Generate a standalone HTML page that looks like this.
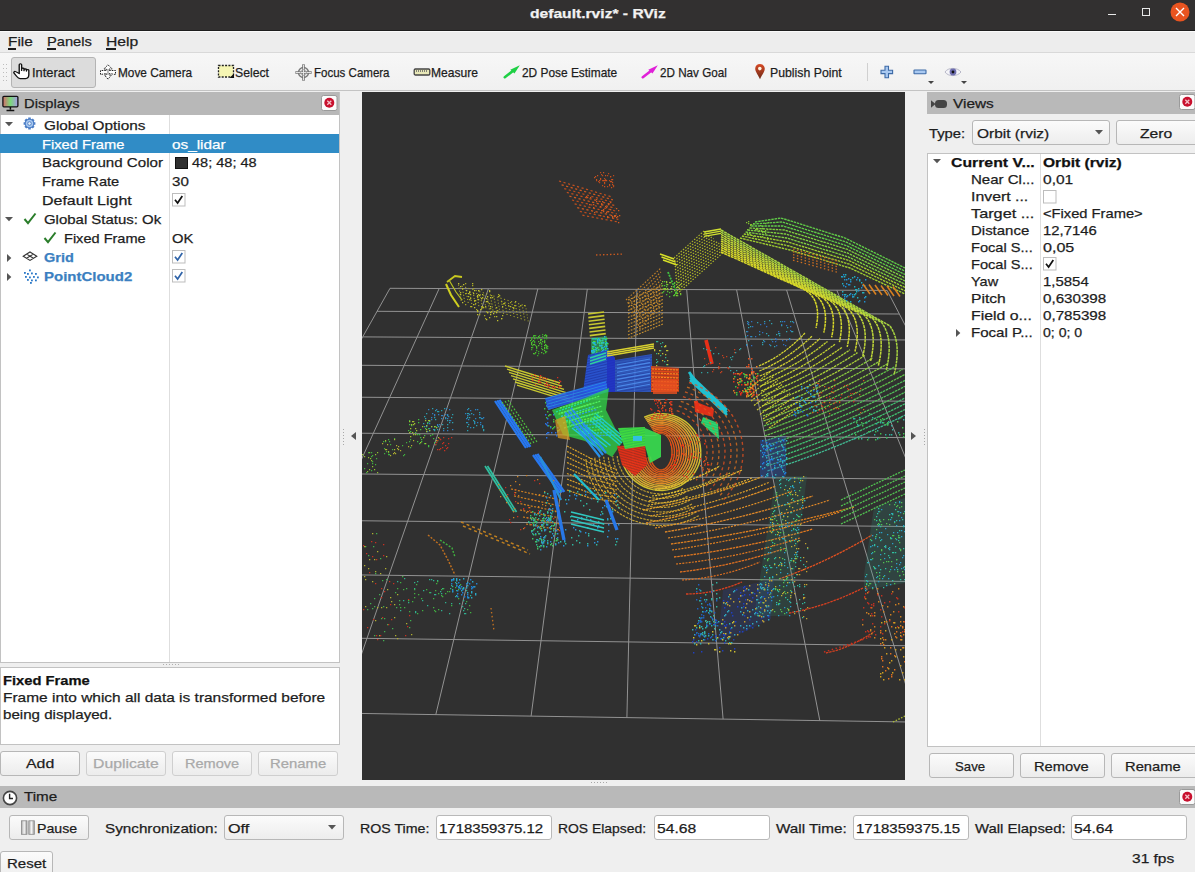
<!DOCTYPE html><html><head><meta charset="utf-8"><style>
html,body{margin:0;padding:0;width:1195px;height:872px;overflow:hidden;background:#efefef}
.a{position:absolute;display:block}
.t{position:absolute;white-space:pre;line-height:1;font-family:"Liberation Sans",sans-serif;transform-origin:0 0;-webkit-text-stroke:0.25px currentColor}
</style></head><body>
<div class="a" style="left:0px;top:0px;width:1195px;height:31px;background:#323030"></div>
<div class="a" style="left:0px;top:30px;width:1195px;height:1px;background:#1e1e1e"></div>
<span class="t" style="left:529.9px;top:7.0px;font-size:13.5px;transform:scaleX(1.157);color:#f2f2f2;font-weight:bold;">default.rviz* - RViz</span>
<div class="a" style="left:1108px;top:14px;width:8px;height:1px;background:#e8e8e8"></div>
<div class="a" style="left:1142px;top:8px;width:8px;height:8px;border:1px solid #e8e8e8;box-sizing:border-box"></div>
<svg class="a" style="left:1170px;top:2px;" width="20" height="20" viewBox="0 0 20 20"><circle cx="10" cy="10" r="9.5" fill="#e95420"/><path d="M6 6L14 14M14 6L6 14" stroke="#fff" stroke-width="1.4"/></svg>
<div class="a" style="left:0px;top:31px;width:1195px;height:21px;background:#ededed"></div>
<div class="a" style="left:0px;top:31px;width:1195px;height:1px;background:#fafafa"></div>
<div class="a" style="left:0px;top:52px;width:1195px;height:1px;background:#d9d9d9"></div>
<span class="t" style="left:7.7px;top:35.4px;font-size:13.5px;transform:scaleX(1.137);color:#1d1d1d;">File</span>
<span class="t" style="left:46.7px;top:35.4px;font-size:13.5px;transform:scaleX(1.085);color:#1d1d1d;">Panels</span>
<span class="t" style="left:105.6px;top:35.4px;font-size:13.5px;transform:scaleX(1.162);color:#1d1d1d;">Help</span>
<div class="a" style="left:8px;top:48px;width:8px;height:2px;background:#1d1d1d"></div>
<div class="a" style="left:47px;top:48px;width:9px;height:2px;background:#1d1d1d"></div>
<div class="a" style="left:106px;top:48px;width:10px;height:2px;background:#1d1d1d"></div>
<div class="a" style="left:0px;top:53px;width:1195px;height:37px;background:linear-gradient(#f7f7f7,#f0f0f0)"></div>
<div class="a" style="left:0px;top:90px;width:1195px;height:1px;background:#c3c3c3"></div>
<div class="a" style="left:3px;top:64px;width:1px;height:1px;background:#bdbdbd"></div>
<div class="a" style="left:3px;top:68px;width:1px;height:1px;background:#bdbdbd"></div>
<div class="a" style="left:3px;top:72px;width:1px;height:1px;background:#bdbdbd"></div>
<div class="a" style="left:3px;top:76px;width:1px;height:1px;background:#bdbdbd"></div>
<div class="a" style="left:3px;top:80px;width:1px;height:1px;background:#bdbdbd"></div>
<div class="a" style="left:6px;top:64px;width:1px;height:1px;background:#bdbdbd"></div>
<div class="a" style="left:6px;top:68px;width:1px;height:1px;background:#bdbdbd"></div>
<div class="a" style="left:6px;top:72px;width:1px;height:1px;background:#bdbdbd"></div>
<div class="a" style="left:6px;top:76px;width:1px;height:1px;background:#bdbdbd"></div>
<div class="a" style="left:6px;top:80px;width:1px;height:1px;background:#bdbdbd"></div>
<div class="a" style="left:11px;top:57px;width:85px;height:31px;background:#dcdcdc;border:1px solid #b4b4b4;border-radius:3px;box-sizing:border-box"></div>
<span class="t" style="left:31.6px;top:66.2px;font-size:13px;transform:scaleX(0.988);color:#1d1d1d;">Interact</span>
<span class="t" style="left:117.9px;top:66.2px;font-size:13px;transform:scaleX(0.908);color:#1d1d1d;">Move Camera</span>
<span class="t" style="left:235.4px;top:66.2px;font-size:13px;transform:scaleX(0.940);color:#1d1d1d;">Select</span>
<span class="t" style="left:313.8px;top:66.2px;font-size:13px;transform:scaleX(0.886);color:#1d1d1d;">Focus Camera</span>
<span class="t" style="left:431.4px;top:66.2px;font-size:13px;transform:scaleX(0.929);color:#1d1d1d;">Measure</span>
<span class="t" style="left:521.8px;top:66.2px;font-size:13px;transform:scaleX(0.915);color:#1d1d1d;">2D Pose Estimate</span>
<span class="t" style="left:659.9px;top:66.2px;font-size:13px;transform:scaleX(0.898);color:#1d1d1d;">2D Nav Goal</span>
<span class="t" style="left:769.7px;top:66.2px;font-size:13px;transform:scaleX(0.945);color:#1d1d1d;">Publish Point</span>
<div class="a" style="left:867px;top:63px;width:1px;height:18px;background:#d0d0d0"></div>
<svg class="a" style="left:13px;top:63px;" width="18" height="18" viewBox="0 0 18 18"><path transform="translate(-0.5 -0.5) scale(1.2 0.98)" d="M5.6 2.2C5.6 0.9 7.6 0.9 7.6 2.2V8.2V6.6C7.6 5.5 9.6 5.5 9.6 6.6V8.4V7.3C9.6 6.3 11.6 6.3 11.6 7.3V8.8V8C11.6 7.1 13.6 7.1 13.6 8V12.6C13.6 14.8 12.6 16.4 10.8 16.4H6.4C5 16.4 4.3 15.4 3.4 14L1.3 10.8C0.7 9.9 1.6 8.7 2.6 9.3L5.6 11.3Z" fill="#fff" stroke="#111" stroke-width="1.15" stroke-linejoin="round"/></svg>
<svg class="a" style="left:100px;top:64px;" width="16" height="16" viewBox="0 0 16 16"><path d="M8 0.8L12.2 5H9.2V6.5H15.5V10.5L9.2 9.5V11H11.5L8 15.2L4.5 11H6.8V9.5L0.5 10.5V6.5H6.8V5H3.8Z" fill="#fff" stroke="#222" stroke-width="1" stroke-dasharray="1.6 1"/><rect x="7" y="5" width="2" height="6" fill="#bbb"/></svg>
<svg class="a" style="left:217px;top:64px;" width="18" height="15" viewBox="0 0 18 15"><rect x="1.5" y="1.5" width="15" height="11.5" fill="#f6f6b4" stroke="#222" stroke-width="1.3" stroke-dasharray="2 1.3"/><path d="M17 9.5V14H12.5Z" fill="#111"/></svg>
<svg class="a" style="left:294px;top:63px;" width="19" height="19" viewBox="0 0 19 19"><circle cx="9.5" cy="9.5" r="5" fill="#fff" stroke="#777" stroke-width="1.4"/><path d="M9.5 1.3V17.7M1.3 9.5H17.7" stroke="#777" stroke-width="2.6"/><path d="M9.5 1.8V17.2M1.8 9.5H17.2" stroke="#eee" stroke-width="0.9"/><circle cx="9.5" cy="9.5" r="3" fill="none" stroke="#999" stroke-width="0.8"/></svg>
<svg class="a" style="left:413px;top:68px;" width="18" height="8" viewBox="0 0 18 8"><rect x="1.2" y="1" width="15.6" height="6" rx="1.2" fill="#e8e8b8" stroke="#444" stroke-width="1.3"/><path d="M3.5 2v2M5.5 2v2M7.5 2v2M9.5 2v2M11.5 2v2M13.5 2v2" stroke="#666" stroke-width="0.8"/></svg>
<svg class="a" style="left:503px;top:64px;" width="18" height="15" viewBox="0 0 18 15"><path d="M1.8 13.2L10.5 6.5" stroke="#1ed045" stroke-width="2.6" stroke-linecap="round"/><path d="M16.8 1.2L7.3 5.8L11.5 9.5Z" fill="#1ed045"/></svg>
<svg class="a" style="left:641px;top:64px;" width="18" height="15" viewBox="0 0 18 15"><path d="M1.8 13.2L10.5 6.5" stroke="#e020d8" stroke-width="2.6" stroke-linecap="round"/><path d="M16.8 1.2L7.3 5.8L11.5 9.5Z" fill="#e020d8"/></svg>
<svg class="a" style="left:754px;top:63px;" width="12" height="17" viewBox="0 0 12 17"><defs><linearGradient id="pg" x1="0" y1="0" x2="0" y2="1"><stop offset="0" stop-color="#d84a26"/><stop offset="1" stop-color="#6a2a18"/></linearGradient></defs><path d="M6 1C3.2 1 1.2 3 1.2 5.8C1.2 9 4.8 13 6 16.3C7.2 13 10.8 9 10.8 5.8C10.8 3 8.8 1 6 1Z" fill="url(#pg)"/><circle cx="5.8" cy="5.6" r="1.8" fill="#fff4e0"/></svg>
<svg class="a" style="left:880px;top:65px;" width="14" height="14" viewBox="0 0 14 14"><path d="M5 1.2H8.5V5.2H12.6V8.6H8.5V12.7H5V8.6H1V5.2H5Z" fill="#a9c9f1" stroke="#3d6aa6" stroke-width="1.1"/></svg>
<svg class="a" style="left:913px;top:69px;" width="14" height="6" viewBox="0 0 14 6"><rect x="1" y="1" width="12" height="3.8" rx="0.6" fill="#a9c9f1" stroke="#3d6aa6" stroke-width="1.1"/></svg>
<svg class="a" style="left:928px;top:81px;" width="7" height="4" viewBox="0 0 7 4"><path d="M0 0H6L3 3Z" fill="#444"/></svg>
<svg class="a" style="left:944px;top:66px;" width="18" height="12" viewBox="0 0 18 12"><path d="M1 6C4 1.2 13.5 1.2 17 6C13.5 10.8 4 10.8 1 6Z" fill="#f4f4f8" stroke="#b8b8c8" stroke-width="1"/><circle cx="9" cy="6" r="3.4" fill="#6f6fb0"/><circle cx="9" cy="6" r="1.4" fill="#111"/></svg>
<svg class="a" style="left:961px;top:81px;" width="7" height="4" viewBox="0 0 7 4"><path d="M0 0H6L3 3Z" fill="#444"/></svg>
<div class="a" style="left:0px;top:91px;width:1195px;height:781px;background:#efefef"></div>
<div class="a" style="left:0px;top:92px;width:340px;height:23px;background:#b8b8b8"></div>
<span class="t" style="left:23.8px;top:97.2px;font-size:13.5px;transform:scaleX(1.091);color:#1d1d1d;">Displays</span>
<div class="a" style="left:0px;top:115px;width:340px;height:548px;background:#fff;border:1px solid #c2c2c2;border-top:none;box-sizing:border-box"></div>
<div class="a" style="left:169px;top:115px;width:1px;height:547px;background:#dedede"></div>
<div class="a" style="left:0px;top:134px;width:339px;height:19px;background:#308cc6"></div>
<span class="t" style="left:43.7px;top:118.5px;font-size:13.5px;transform:scaleX(1.135);color:#1d1d1d;">Global Options</span>
<span class="t" style="left:41.8px;top:137.5px;font-size:13.5px;transform:scaleX(1.086);color:#ffffff;">Fixed Frame</span>
<span class="t" style="left:171.6px;top:137.5px;font-size:13.5px;transform:scaleX(1.134);color:#ffffff;">os_lidar</span>
<span class="t" style="left:41.7px;top:156.2px;font-size:13.5px;transform:scaleX(1.119);color:#1d1d1d;">Background Color</span>
<span class="t" style="left:191.8px;top:156.2px;font-size:13.5px;transform:scaleX(1.077);color:#1d1d1d;">48; 48; 48</span>
<span class="t" style="left:41.8px;top:175.4px;font-size:13.5px;transform:scaleX(1.084);color:#1d1d1d;">Frame Rate</span>
<span class="t" style="left:171.6px;top:175.4px;font-size:13.5px;transform:scaleX(1.119);color:#1d1d1d;">30</span>
<span class="t" style="left:41.7px;top:194.2px;font-size:13.5px;transform:scaleX(1.184);color:#1d1d1d;">Default Light</span>
<span class="t" style="left:43.8px;top:213.2px;font-size:13.5px;transform:scaleX(1.107);color:#1d1d1d;">Global Status: Ok</span>
<span class="t" style="left:64.1px;top:232.2px;font-size:13.5px;transform:scaleX(1.078);color:#1d1d1d;">Fixed Frame</span>
<span class="t" style="left:171.7px;top:232.2px;font-size:13.5px;transform:scaleX(1.091);color:#1d1d1d;">OK</span>
<span class="t" style="left:44.0px;top:251.0px;font-size:13.5px;transform:scaleX(1.076);color:#3b7fc1;font-weight:bold;">Grid</span>
<span class="t" style="left:44.0px;top:270.1px;font-size:13.5px;transform:scaleX(1.110);color:#3b7fc1;font-weight:bold;">PointCloud2</span>
<svg class="a" style="left:2px;top:95px;" width="17" height="17" viewBox="0 0 17 17"><defs><linearGradient id="mg" x1="0" x2="1"><stop offset="0" stop-color="#d46a6a"/><stop offset="0.5" stop-color="#7ad87a"/><stop offset="1" stop-color="#a898e8"/></linearGradient></defs><rect x="0.9" y="1.3" width="15" height="10.5" rx="1" fill="url(#mg)" stroke="#111" stroke-width="1.3"/><path d="M8.4 12V14.5M4.5 15.6H12.3" stroke="#111" stroke-width="1.5"/></svg>
<svg class="a" style="left:5px;top:122px;" width="8" height="5" viewBox="0 0 8 5"><path d="M0 0H8L4 4.2Z" fill="#555"/></svg>
<svg class="a" style="left:5px;top:217px;" width="8" height="5" viewBox="0 0 8 5"><path d="M0 0H8L4 4.2Z" fill="#555"/></svg>
<svg class="a" style="left:7px;top:254px;" width="5" height="8" viewBox="0 0 5 8"><path d="M0 0V8L4.3 4Z" fill="#555"/></svg>
<svg class="a" style="left:7px;top:273px;" width="5" height="8" viewBox="0 0 5 8"><path d="M0 0V8L4.3 4Z" fill="#555"/></svg>
<svg class="a" style="left:22px;top:116px;" width="15" height="15" viewBox="0 0 15 15"><g transform="translate(7.5 7.5)"><path d="M5.90 0.00L4.20 0.00 M4.17 4.17L2.97 2.97 M0.00 5.90L0.00 4.20 M-4.17 4.17L-2.97 2.97 M-5.90 0.00L-4.20 0.00 M-4.17 -4.17L-2.97 -2.97 M-0.00 -5.90L-0.00 -4.20 M4.17 -4.17L2.97 -2.97" stroke="#5080c8" stroke-width="2.6"/><circle r="4.3" fill="#a8c8f0" stroke="#4a7cc4" stroke-width="1.1"/><circle r="1.8" fill="#eaf2fc" stroke="#4a7cc4" stroke-width="0.9"/></g></svg>
<svg class="a" style="left:23px;top:212px;" width="14" height="13" viewBox="0 0 14 13"><path d="M1.5 7L5 11.2L12.5 1.5" fill="none" stroke="#2a7d2a" stroke-width="2"/></svg>
<svg class="a" style="left:43px;top:231px;" width="14" height="13" viewBox="0 0 14 13"><path d="M1.5 7L5 11.2L12.5 1.5" fill="none" stroke="#2a7d2a" stroke-width="2"/></svg>
<svg class="a" style="left:22px;top:251px;" width="16" height="11" viewBox="0 0 16 11"><path d="M8 1L14.8 5.2L8 9.4L1.2 5.2Z M4.6 3.1L11.4 7.3 M11.4 3.1L4.6 7.3" fill="none" stroke="#333" stroke-width="1.1"/></svg>
<svg class="a" style="left:23px;top:269px;" width="16" height="15" viewBox="0 0 16 15"><rect x="6" y="0.5" width="1.8" height="1.8" fill="#2a78c8"/><rect x="1" y="3" width="1.8" height="1.8" fill="#2a78c8"/><rect x="4" y="4" width="1.8" height="1.8" fill="#2a78c8"/><rect x="8" y="3.5" width="1.8" height="1.8" fill="#2a78c8"/><rect x="12" y="4" width="1.8" height="1.8" fill="#2a78c8"/><rect x="2" y="7" width="1.8" height="1.8" fill="#2a78c8"/><rect x="6" y="7.5" width="1.8" height="1.8" fill="#2a78c8"/><rect x="10" y="7" width="1.8" height="1.8" fill="#2a78c8"/><rect x="14" y="7.5" width="1.8" height="1.8" fill="#2a78c8"/><rect x="4" y="10" width="1.8" height="1.8" fill="#2a78c8"/><rect x="8" y="10.5" width="1.8" height="1.8" fill="#2a78c8"/><rect x="12" y="10.5" width="1.8" height="1.8" fill="#2a78c8"/><rect x="7" y="13" width="1.8" height="1.8" fill="#2a78c8"/></svg>
<svg class="a" style="left:172px;top:193px;" width="14" height="14" viewBox="0 0 14 14"><rect x="0.5" y="0.5" width="12.5" height="12.5" fill="#fff" stroke="#bdbdbd" stroke-width="1"/><path d="M3 6.8L5.6 10L10.3 3" fill="none" stroke="#111" stroke-width="1.7"/></svg>
<svg class="a" style="left:172px;top:250px;" width="14" height="14" viewBox="0 0 14 14"><rect x="0.5" y="0.5" width="12.5" height="12.5" fill="#fff" stroke="#bdbdbd" stroke-width="1"/><path d="M3 6.8L5.6 10L10.3 3" fill="none" stroke="#2f63a8" stroke-width="1.7"/></svg>
<svg class="a" style="left:172px;top:269px;" width="14" height="14" viewBox="0 0 14 14"><rect x="0.5" y="0.5" width="12.5" height="12.5" fill="#fff" stroke="#bdbdbd" stroke-width="1"/><path d="M3 6.8L5.6 10L10.3 3" fill="none" stroke="#2f63a8" stroke-width="1.7"/></svg>
<div class="a" style="left:175px;top:157px;width:13px;height:12px;background:#303030;border:1px solid #111;box-sizing:border-box"></div>
<div class="a" style="left:163px;top:664px;width:1px;height:1px;background:#b0b0b0"></div>
<div class="a" style="left:166px;top:664px;width:1px;height:1px;background:#b0b0b0"></div>
<div class="a" style="left:169px;top:664px;width:1px;height:1px;background:#b0b0b0"></div>
<div class="a" style="left:172px;top:664px;width:1px;height:1px;background:#b0b0b0"></div>
<div class="a" style="left:175px;top:664px;width:1px;height:1px;background:#b0b0b0"></div>
<div class="a" style="left:178px;top:664px;width:1px;height:1px;background:#b0b0b0"></div>
<div class="a" style="left:0px;top:667px;width:340px;height:78px;background:#fff;border:1px solid #c2c2c2;box-sizing:border-box"></div>
<span class="t" style="left:2.8px;top:674.2px;font-size:13.5px;transform:scaleX(1.090);color:#111;font-weight:bold;">Fixed Frame</span>
<span class="t" style="left:2.7px;top:691.2px;font-size:13.5px;transform:scaleX(1.145);color:#1d1d1d;">Frame into which all data is transformed before</span>
<span class="t" style="left:2.7px;top:707.9px;font-size:13.5px;transform:scaleX(1.119);color:#1d1d1d;">being displayed.</span>
<div class="a" style="left:0px;top:751px;width:80px;height:25px;background:linear-gradient(#fbfbfb,#ececec);border:1px solid #b7b7b7;border-radius:3px;box-sizing:border-box"></div>
<span class="t" style="left:25.7px;top:757.1px;font-size:13.5px;transform:scaleX(1.177);color:#1d1d1d;">Add</span>
<div class="a" style="left:86px;top:751px;width:80px;height:25px;background:linear-gradient(#fbfbfb,#ececec);border:1px solid #cfcfcf;border-radius:3px;box-sizing:border-box"></div>
<span class="t" style="left:92.7px;top:757.1px;font-size:13.5px;transform:scaleX(1.168);color:#a9a9a9;">Duplicate</span>
<div class="a" style="left:172px;top:751px;width:80px;height:25px;background:linear-gradient(#fbfbfb,#ececec);border:1px solid #cfcfcf;border-radius:3px;box-sizing:border-box"></div>
<span class="t" style="left:184.8px;top:757.1px;font-size:13.5px;transform:scaleX(1.077);color:#a9a9a9;">Remove</span>
<div class="a" style="left:258px;top:751px;width:80px;height:25px;background:linear-gradient(#fbfbfb,#ececec);border:1px solid #cfcfcf;border-radius:3px;box-sizing:border-box"></div>
<span class="t" style="left:269.8px;top:757.1px;font-size:13.5px;transform:scaleX(1.101);color:#a9a9a9;">Rename</span>
<div class="a" style="left:339px;top:92px;width:1px;height:571px;background:#c2c2c2"></div>
<div class="a" style="left:343px;top:429px;width:1px;height:1px;background:#a8a8a8"></div>
<div class="a" style="left:343px;top:432px;width:1px;height:1px;background:#a8a8a8"></div>
<div class="a" style="left:343px;top:435px;width:1px;height:1px;background:#a8a8a8"></div>
<div class="a" style="left:343px;top:438px;width:1px;height:1px;background:#a8a8a8"></div>
<div class="a" style="left:343px;top:441px;width:1px;height:1px;background:#a8a8a8"></div>
<div class="a" style="left:343px;top:444px;width:1px;height:1px;background:#a8a8a8"></div>
<svg class="a" style="left:351px;top:432px;" width="6" height="8" viewBox="0 0 6 8"><path d="M5 0L0 4L5 8Z" fill="#555"/></svg>
<div class="a" style="left:924px;top:429px;width:1px;height:1px;background:#a8a8a8"></div>
<div class="a" style="left:924px;top:432px;width:1px;height:1px;background:#a8a8a8"></div>
<div class="a" style="left:924px;top:435px;width:1px;height:1px;background:#a8a8a8"></div>
<div class="a" style="left:924px;top:438px;width:1px;height:1px;background:#a8a8a8"></div>
<div class="a" style="left:924px;top:441px;width:1px;height:1px;background:#a8a8a8"></div>
<div class="a" style="left:924px;top:444px;width:1px;height:1px;background:#a8a8a8"></div>
<svg class="a" style="left:910px;top:432px;" width="6" height="8" viewBox="0 0 6 8"><path d="M1 0L6 4L1 8Z" fill="#555"/></svg>
<div class="a" style="left:591px;top:782px;width:1px;height:1px;background:#a8a8a8"></div>
<div class="a" style="left:594px;top:782px;width:1px;height:1px;background:#a8a8a8"></div>
<div class="a" style="left:597px;top:782px;width:1px;height:1px;background:#a8a8a8"></div>
<div class="a" style="left:600px;top:782px;width:1px;height:1px;background:#a8a8a8"></div>
<div class="a" style="left:603px;top:782px;width:1px;height:1px;background:#a8a8a8"></div>
<div class="a" style="left:606px;top:782px;width:1px;height:1px;background:#a8a8a8"></div>
<svg class="a" style="left:362px;top:92px;background:#303030" width="543" height="688" viewBox="0 0 543 688"><line x1="28.0" y1="196.3" x2="-209.1" y2="618.2" stroke="#929292" stroke-width="1"/><line x1="28.0" y1="196.3" x2="525.1" y2="198.4" stroke="#929292" stroke-width="1"/><line x1="77.2" y1="196.5" x2="-115.3" y2="619.7" stroke="#929292" stroke-width="1"/><line x1="15.1" y1="219.3" x2="537.3" y2="222.0" stroke="#929292" stroke-width="1"/><line x1="126.4" y1="196.7" x2="-21.0" y2="621.2" stroke="#929292" stroke-width="1"/><line x1="0.7" y1="244.9" x2="550.8" y2="248.0" stroke="#929292" stroke-width="1"/><line x1="175.8" y1="196.9" x2="73.8" y2="622.6" stroke="#929292" stroke-width="1"/><line x1="-15.2" y1="273.2" x2="565.9" y2="277.0" stroke="#929292" stroke-width="1"/><line x1="225.3" y1="197.1" x2="169.1" y2="624.1" stroke="#929292" stroke-width="1"/><line x1="-33.1" y1="305.0" x2="582.7" y2="309.5" stroke="#929292" stroke-width="1"/><line x1="274.9" y1="197.3" x2="264.9" y2="625.6" stroke="#929292" stroke-width="1"/><line x1="-53.2" y1="340.8" x2="601.8" y2="346.1" stroke="#929292" stroke-width="1"/><line x1="324.7" y1="197.6" x2="361.1" y2="627.1" stroke="#929292" stroke-width="1"/><line x1="-76.0" y1="381.3" x2="623.4" y2="387.8" stroke="#929292" stroke-width="1"/><line x1="374.6" y1="197.8" x2="457.8" y2="628.6" stroke="#929292" stroke-width="1"/><line x1="-102.1" y1="427.7" x2="648.3" y2="435.6" stroke="#929292" stroke-width="1"/><line x1="424.6" y1="198.0" x2="555.0" y2="630.1" stroke="#929292" stroke-width="1"/><line x1="-132.2" y1="481.4" x2="677.0" y2="491.0" stroke="#929292" stroke-width="1"/><line x1="474.8" y1="198.2" x2="652.7" y2="631.7" stroke="#929292" stroke-width="1"/><line x1="-167.4" y1="544.0" x2="710.8" y2="556.0" stroke="#929292" stroke-width="1"/><line x1="525.1" y1="198.4" x2="750.9" y2="633.2" stroke="#929292" stroke-width="1"/><line x1="-209.1" y1="618.2" x2="750.9" y2="633.2" stroke="#929292" stroke-width="1"/><polyline points="197.0,89.0 250.0,105.0" fill="none" stroke="#c0501e" stroke-width="1.23" stroke-dasharray="2.2 2.5"/><polyline points="199.6,92.8 250.8,107.8" fill="none" stroke="#d05a20" stroke-width="1.23" stroke-dasharray="2.2 2.5"/><polyline points="202.2,96.6 251.6,110.6" fill="none" stroke="#b84a1c" stroke-width="1.23" stroke-dasharray="2.2 2.5"/><polyline points="204.8,100.4 252.4,113.4" fill="none" stroke="#c0501e" stroke-width="1.23" stroke-dasharray="2.2 2.5"/><polyline points="207.4,104.2 253.2,116.2" fill="none" stroke="#d05a20" stroke-width="1.23" stroke-dasharray="2.2 2.5"/><polyline points="210.0,108.0 254.0,119.0" fill="none" stroke="#b84a1c" stroke-width="1.23" stroke-dasharray="2.2 2.5"/><polyline points="212.6,111.8 254.8,121.8" fill="none" stroke="#c0501e" stroke-width="1.23" stroke-dasharray="2.2 2.5"/><polyline points="215.2,115.6 255.6,124.6" fill="none" stroke="#d05a20" stroke-width="1.23" stroke-dasharray="2.2 2.5"/><polyline points="217.8,119.4 256.4,127.4" fill="none" stroke="#b84a1c" stroke-width="1.23" stroke-dasharray="2.2 2.5"/><polyline points="220.4,123.2 257.2,130.2" fill="none" stroke="#c0501e" stroke-width="1.23" stroke-dasharray="2.2 2.5"/><path d="M248 84h1.2v1.2h-1.2zM245 94h1.2v1.2h-1.2zM240 93h1.2v1.2h-1.2zM240 88h1.2v1.2h-1.2zM234 88h1.2v1.2h-1.2zM245 83h1.2v1.2h-1.2zM247 93h1.2v1.2h-1.2zM237 90h1.2v1.2h-1.2zM249 87h1.2v1.2h-1.2zM238 87h1.2v1.2h-1.2zM242 86h1.2v1.2h-1.2zM239 82h1.2v1.2h-1.2zM251 83h1.2v1.2h-1.2zM236 89h1.2v1.2h-1.2zM251 93h1.2v1.2h-1.2zM243 87h1.2v1.2h-1.2zM242 88h1.2v1.2h-1.2zM242 91h1.2v1.2h-1.2zM251 94h1.2v1.2h-1.2zM246 81h1.2v1.2h-1.2zM238 80h1.2v1.2h-1.2zM247 88h1.2v1.2h-1.2zM240 83h1.2v1.2h-1.2z" fill="#b84a1c"/><path d="M241 88h1.2v1.2h-1.2zM250 87h1.2v1.2h-1.2zM234 87h1.2v1.2h-1.2zM235 83h1.2v1.2h-1.2zM250 90h1.2v1.2h-1.2zM232 85h1.2v1.2h-1.2zM250 92h1.2v1.2h-1.2zM242 90h1.2v1.2h-1.2zM247 92h1.2v1.2h-1.2zM242 94h1.2v1.2h-1.2zM241 80h1.2v1.2h-1.2zM248 89h1.2v1.2h-1.2zM243 88h1.2v1.2h-1.2zM249 95h1.2v1.2h-1.2zM249 89h1.2v1.2h-1.2zM243 83h1.2v1.2h-1.2zM238 86h1.2v1.2h-1.2zM244 88h1.2v1.2h-1.2zM249 95h1.2v1.2h-1.2zM248 84h1.2v1.2h-1.2zM233 84h1.2v1.2h-1.2zM237 88h1.2v1.2h-1.2z" fill="#c8501e"/><path d="M256 130h1.3v1.3h-1.3zM225 105h1.3v1.3h-1.3zM252 124h1.3v1.3h-1.3zM246 112h1.3v1.3h-1.3zM244 120h1.3v1.3h-1.3zM238 114h1.3v1.3h-1.3zM256 118h1.3v1.3h-1.3zM239 111h1.3v1.3h-1.3zM224 104h1.3v1.3h-1.3zM239 112h1.3v1.3h-1.3zM241 119h1.3v1.3h-1.3zM234 107h1.3v1.3h-1.3zM254 125h1.3v1.3h-1.3zM250 125h1.3v1.3h-1.3zM249 123h1.3v1.3h-1.3zM239 118h1.3v1.3h-1.3zM254 116h1.3v1.3h-1.3zM248 117h1.3v1.3h-1.3zM231 112h1.3v1.3h-1.3zM257 123h1.3v1.3h-1.3zM241 117h1.3v1.3h-1.3zM246 119h1.3v1.3h-1.3zM234 109h1.3v1.3h-1.3zM252 123h1.3v1.3h-1.3zM246 111h1.3v1.3h-1.3zM238 123h1.3v1.3h-1.3zM245 124h1.3v1.3h-1.3zM227 112h1.3v1.3h-1.3zM250 124h1.3v1.3h-1.3zM255 124h1.3v1.3h-1.3zM253 123h1.3v1.3h-1.3zM240 109h1.3v1.3h-1.3zM246 112h1.3v1.3h-1.3zM243 114h1.3v1.3h-1.3zM244 115h1.3v1.3h-1.3zM228 105h1.3v1.3h-1.3zM231 115h1.3v1.3h-1.3zM232 120h1.3v1.3h-1.3zM245 125h1.3v1.3h-1.3zM248 110h1.3v1.3h-1.3z" fill="#d05a20"/><polyline points="234.0,163.0 262.0,162.0" fill="none" stroke="#c85a20" stroke-width="1.34" stroke-dasharray="1.5 2"/><polyline points="84.0,192.0 89.0,203.0 97.0,215.0" fill="none" stroke="#d0d020" stroke-width="2.02"/><polyline points="85.0,190.0 93.0,184.0 100.0,185.0" fill="none" stroke="#c8c820" stroke-width="1.79"/><polyline points="87.0,188.0 94.0,200.0 100.0,208.0" fill="none" stroke="#b8c020" stroke-width="1.23"/><polyline points="96.0,193.0 164.0,214.0" fill="none" stroke="#a8a828" stroke-width="1.01" stroke-dasharray="1.2 2.5"/><polyline points="96.5,196.0 164.5,217.0" fill="none" stroke="#a8a828" stroke-width="1.01" stroke-dasharray="1.2 2.5"/><polyline points="97.0,199.0 165.0,220.0" fill="none" stroke="#a8a828" stroke-width="1.01" stroke-dasharray="1.2 2.5"/><polyline points="97.5,202.0 165.5,223.0" fill="none" stroke="#a8a828" stroke-width="1.01" stroke-dasharray="1.2 2.5"/><polyline points="98.0,205.0 166.0,226.0" fill="none" stroke="#a8a828" stroke-width="1.01" stroke-dasharray="1.2 2.5"/><polyline points="98.5,208.0 166.5,229.0" fill="none" stroke="#a8a828" stroke-width="1.01" stroke-dasharray="1.2 2.5"/><path d="M111 212h1.3v1.3h-1.3zM153 209h1.3v1.3h-1.3zM148 214h1.3v1.3h-1.3zM130 205h1.3v1.3h-1.3zM158 213h1.3v1.3h-1.3zM108 206h1.3v1.3h-1.3zM134 215h1.3v1.3h-1.3zM123 214h1.3v1.3h-1.3zM112 208h1.3v1.3h-1.3zM120 214h1.3v1.3h-1.3zM116 198h1.3v1.3h-1.3zM118 217h1.3v1.3h-1.3zM151 216h1.3v1.3h-1.3zM124 206h1.3v1.3h-1.3zM110 191h1.3v1.3h-1.3zM141 211h1.3v1.3h-1.3zM119 197h1.3v1.3h-1.3zM98 200h1.3v1.3h-1.3zM98 194h1.3v1.3h-1.3zM116 202h1.3v1.3h-1.3zM108 202h1.3v1.3h-1.3zM121 215h1.3v1.3h-1.3zM129 219h1.3v1.3h-1.3zM132 219h1.3v1.3h-1.3zM113 208h1.3v1.3h-1.3zM162 213h1.3v1.3h-1.3zM134 224h1.3v1.3h-1.3zM120 205h1.3v1.3h-1.3zM142 211h1.3v1.3h-1.3zM107 200h1.3v1.3h-1.3zM115 219h1.3v1.3h-1.3zM106 204h1.3v1.3h-1.3zM127 225h1.3v1.3h-1.3zM127 198h1.3v1.3h-1.3zM115 204h1.3v1.3h-1.3zM109 214h1.3v1.3h-1.3zM140 223h1.3v1.3h-1.3z" fill="#b8b828"/><path d="M120 215h1.3v1.3h-1.3zM139 226h1.3v1.3h-1.3zM122 223h1.3v1.3h-1.3zM119 214h1.3v1.3h-1.3zM153 213h1.3v1.3h-1.3zM127 211h1.3v1.3h-1.3zM125 220h1.3v1.3h-1.3zM139 209h1.3v1.3h-1.3zM136 202h1.3v1.3h-1.3zM115 205h1.3v1.3h-1.3zM107 207h1.3v1.3h-1.3zM110 193h1.3v1.3h-1.3zM103 201h1.3v1.3h-1.3zM141 211h1.3v1.3h-1.3zM158 213h1.3v1.3h-1.3zM137 203h1.3v1.3h-1.3zM132 224h1.3v1.3h-1.3zM113 211h1.3v1.3h-1.3zM103 191h1.3v1.3h-1.3zM119 216h1.3v1.3h-1.3zM103 212h1.3v1.3h-1.3zM151 215h1.3v1.3h-1.3zM124 219h1.3v1.3h-1.3zM99 207h1.3v1.3h-1.3zM146 213h1.3v1.3h-1.3zM148 210h1.3v1.3h-1.3zM111 196h1.3v1.3h-1.3zM119 206h1.3v1.3h-1.3zM128 216h1.3v1.3h-1.3zM108 214h1.3v1.3h-1.3zM123 226h1.3v1.3h-1.3zM117 222h1.3v1.3h-1.3zM152 213h1.3v1.3h-1.3zM107 199h1.3v1.3h-1.3zM135 218h1.3v1.3h-1.3zM114 217h1.3v1.3h-1.3zM129 203h1.3v1.3h-1.3z" fill="#a8a820"/><path d="M112 198h1.3v1.3h-1.3zM131 221h1.3v1.3h-1.3zM104 198h1.3v1.3h-1.3zM135 228h1.3v1.3h-1.3zM115 222h1.3v1.3h-1.3zM140 214h1.3v1.3h-1.3zM111 201h1.3v1.3h-1.3zM96 191h1.3v1.3h-1.3zM120 202h1.3v1.3h-1.3zM134 220h1.3v1.3h-1.3zM117 203h1.3v1.3h-1.3zM107 200h1.3v1.3h-1.3zM119 206h1.3v1.3h-1.3zM115 203h1.3v1.3h-1.3zM106 201h1.3v1.3h-1.3zM128 222h1.3v1.3h-1.3zM139 226h1.3v1.3h-1.3zM124 209h1.3v1.3h-1.3zM100 210h1.3v1.3h-1.3zM136 204h1.3v1.3h-1.3zM100 196h1.3v1.3h-1.3zM125 204h1.3v1.3h-1.3zM127 199h1.3v1.3h-1.3zM124 227h1.3v1.3h-1.3zM101 192h1.3v1.3h-1.3zM98 202h1.3v1.3h-1.3zM112 215h1.3v1.3h-1.3zM100 210h1.3v1.3h-1.3zM125 220h1.3v1.3h-1.3zM116 198h1.3v1.3h-1.3zM128 205h1.3v1.3h-1.3zM128 214h1.3v1.3h-1.3zM128 220h1.3v1.3h-1.3zM116 207h1.3v1.3h-1.3zM125 209h1.3v1.3h-1.3zM115 218h1.3v1.3h-1.3z" fill="#c0c030"/><path d="M172 243h1.3v1.3h-1.3zM169 250h1.3v1.3h-1.3zM178 247h1.3v1.3h-1.3zM183 260h1.3v1.3h-1.3zM174 255h1.3v1.3h-1.3zM184 243h1.3v1.3h-1.3zM177 245h1.3v1.3h-1.3zM178 248h1.3v1.3h-1.3zM177 251h1.3v1.3h-1.3zM171 248h1.3v1.3h-1.3zM169 255h1.3v1.3h-1.3zM176 249h1.3v1.3h-1.3zM179 247h1.3v1.3h-1.3zM174 254h1.3v1.3h-1.3zM182 255h1.3v1.3h-1.3zM171 252h1.3v1.3h-1.3zM168 248h1.3v1.3h-1.3zM179 260h1.3v1.3h-1.3zM176 244h1.3v1.3h-1.3zM182 249h1.3v1.3h-1.3zM169 245h1.3v1.3h-1.3zM169 252h1.3v1.3h-1.3zM182 250h1.3v1.3h-1.3zM169 251h1.3v1.3h-1.3zM183 252h1.3v1.3h-1.3zM172 246h1.3v1.3h-1.3zM185 254h1.3v1.3h-1.3zM182 258h1.3v1.3h-1.3zM172 261h1.3v1.3h-1.3zM182 256h1.3v1.3h-1.3zM180 257h1.3v1.3h-1.3zM184 244h1.3v1.3h-1.3zM169 245h1.3v1.3h-1.3zM184 244h1.3v1.3h-1.3zM184 254h1.3v1.3h-1.3zM180 249h1.3v1.3h-1.3zM176 253h1.3v1.3h-1.3zM184 255h1.3v1.3h-1.3zM182 253h1.3v1.3h-1.3zM178 250h1.3v1.3h-1.3zM172 252h1.3v1.3h-1.3zM184 253h1.3v1.3h-1.3zM182 243h1.3v1.3h-1.3zM173 260h1.3v1.3h-1.3zM171 261h1.3v1.3h-1.3z" fill="#50c030"/><path d="M175 245h1.3v1.3h-1.3zM182 246h1.3v1.3h-1.3zM171 243h1.3v1.3h-1.3zM182 245h1.3v1.3h-1.3zM181 261h1.3v1.3h-1.3zM179 256h1.3v1.3h-1.3zM177 243h1.3v1.3h-1.3zM184 254h1.3v1.3h-1.3zM179 251h1.3v1.3h-1.3zM183 242h1.3v1.3h-1.3zM173 253h1.3v1.3h-1.3zM175 246h1.3v1.3h-1.3zM174 258h1.3v1.3h-1.3zM169 246h1.3v1.3h-1.3zM172 249h1.3v1.3h-1.3zM169 257h1.3v1.3h-1.3zM175 263h1.3v1.3h-1.3zM173 245h1.3v1.3h-1.3zM169 245h1.3v1.3h-1.3zM173 243h1.3v1.3h-1.3zM180 244h1.3v1.3h-1.3zM170 253h1.3v1.3h-1.3zM172 250h1.3v1.3h-1.3zM172 261h1.3v1.3h-1.3zM169 247h1.3v1.3h-1.3zM172 261h1.3v1.3h-1.3zM184 256h1.3v1.3h-1.3zM177 243h1.3v1.3h-1.3zM174 256h1.3v1.3h-1.3zM183 253h1.3v1.3h-1.3zM180 242h1.3v1.3h-1.3zM185 256h1.3v1.3h-1.3zM179 254h1.3v1.3h-1.3zM183 259h1.3v1.3h-1.3zM184 246h1.3v1.3h-1.3zM184 259h1.3v1.3h-1.3zM179 252h1.3v1.3h-1.3zM170 249h1.3v1.3h-1.3zM183 243h1.3v1.3h-1.3zM182 248h1.3v1.3h-1.3zM170 255h1.3v1.3h-1.3zM176 261h1.3v1.3h-1.3zM184 246h1.3v1.3h-1.3zM176 259h1.3v1.3h-1.3zM171 244h1.3v1.3h-1.3z" fill="#3aa82a"/><polyline points="143.0,274.0 198.0,291.0" fill="none" stroke="#c8c830" stroke-width="1.34"/><polyline points="145.0,277.2 200.0,294.2" fill="none" stroke="#c8c830" stroke-width="1.34"/><polyline points="147.0,280.4 202.0,297.4" fill="none" stroke="#c8c830" stroke-width="1.34"/><polyline points="149.0,283.6 204.0,300.6" fill="none" stroke="#c8c830" stroke-width="1.34"/><polyline points="151.0,286.8 206.0,303.8" fill="none" stroke="#c8c830" stroke-width="1.34"/><polyline points="153.0,290.0 208.0,307.0" fill="none" stroke="#c8c830" stroke-width="1.34"/><polyline points="155.0,293.2 210.0,310.2" fill="none" stroke="#c8c830" stroke-width="1.34"/><path d="M186 292h1.3v1.3h-1.3zM192 295h1.3v1.3h-1.3zM190 295h1.3v1.3h-1.3zM196 291h1.3v1.3h-1.3zM182 285h1.3v1.3h-1.3zM184 290h1.3v1.3h-1.3zM173 284h1.3v1.3h-1.3zM197 294h1.3v1.3h-1.3zM184 291h1.3v1.3h-1.3zM195 285h1.3v1.3h-1.3zM178 283h1.3v1.3h-1.3zM172 282h1.3v1.3h-1.3zM176 290h1.3v1.3h-1.3zM177 286h1.3v1.3h-1.3zM192 288h1.3v1.3h-1.3zM177 288h1.3v1.3h-1.3zM190 294h1.3v1.3h-1.3zM178 290h1.3v1.3h-1.3zM173 292h1.3v1.3h-1.3zM196 295h1.3v1.3h-1.3zM178 286h1.3v1.3h-1.3zM183 293h1.3v1.3h-1.3zM192 294h1.3v1.3h-1.3zM170 286h1.3v1.3h-1.3zM186 295h1.3v1.3h-1.3zM184 286h1.3v1.3h-1.3zM177 284h1.3v1.3h-1.3zM169 283h1.3v1.3h-1.3zM198 289h1.3v1.3h-1.3zM180 285h1.3v1.3h-1.3zM185 293h1.3v1.3h-1.3zM181 287h1.3v1.3h-1.3zM190 295h1.3v1.3h-1.3zM187 293h1.3v1.3h-1.3zM170 288h1.3v1.3h-1.3zM176 288h1.3v1.3h-1.3zM198 294h1.3v1.3h-1.3zM197 288h1.3v1.3h-1.3zM182 292h1.3v1.3h-1.3zM182 285h1.3v1.3h-1.3z" fill="#d03020"/><path d="M85 335h1.3v1.3h-1.3zM61 331h1.3v1.3h-1.3zM72 334h1.3v1.3h-1.3zM83 326h1.3v1.3h-1.3zM67 329h1.3v1.3h-1.3zM85 332h1.3v1.3h-1.3zM64 334h1.3v1.3h-1.3zM64 321h1.3v1.3h-1.3zM90 330h1.3v1.3h-1.3zM72 337h1.3v1.3h-1.3zM80 332h1.3v1.3h-1.3zM62 324h1.3v1.3h-1.3zM79 318h1.3v1.3h-1.3zM65 331h1.3v1.3h-1.3zM76 319h1.3v1.3h-1.3zM82 316h1.3v1.3h-1.3zM71 337h1.3v1.3h-1.3zM72 325h1.3v1.3h-1.3zM63 326h1.3v1.3h-1.3zM90 322h1.3v1.3h-1.3zM81 336h1.3v1.3h-1.3zM85 328h1.3v1.3h-1.3zM73 318h1.3v1.3h-1.3zM76 334h1.3v1.3h-1.3zM65 330h1.3v1.3h-1.3zM75 337h1.3v1.3h-1.3zM87 330h1.3v1.3h-1.3zM75 319h1.3v1.3h-1.3zM85 323h1.3v1.3h-1.3zM89 325h1.3v1.3h-1.3zM73 327h1.3v1.3h-1.3zM70 316h1.3v1.3h-1.3zM62 334h1.3v1.3h-1.3zM72 338h1.3v1.3h-1.3zM67 338h1.3v1.3h-1.3z" fill="#2aa0b0"/><path d="M76 322h1.3v1.3h-1.3zM75 333h1.3v1.3h-1.3zM69 334h1.3v1.3h-1.3zM77 332h1.3v1.3h-1.3zM85 322h1.3v1.3h-1.3zM86 324h1.3v1.3h-1.3zM85 326h1.3v1.3h-1.3zM80 323h1.3v1.3h-1.3zM67 331h1.3v1.3h-1.3zM88 328h1.3v1.3h-1.3zM85 338h1.3v1.3h-1.3zM79 323h1.3v1.3h-1.3zM87 328h1.3v1.3h-1.3zM70 321h1.3v1.3h-1.3zM67 336h1.3v1.3h-1.3zM84 316h1.3v1.3h-1.3zM80 323h1.3v1.3h-1.3zM65 339h1.3v1.3h-1.3zM83 325h1.3v1.3h-1.3zM90 337h1.3v1.3h-1.3zM74 335h1.3v1.3h-1.3zM75 332h1.3v1.3h-1.3zM83 322h1.3v1.3h-1.3zM66 317h1.3v1.3h-1.3zM72 322h1.3v1.3h-1.3zM69 325h1.3v1.3h-1.3zM69 327h1.3v1.3h-1.3zM72 323h1.3v1.3h-1.3zM81 338h1.3v1.3h-1.3zM79 323h1.3v1.3h-1.3zM85 338h1.3v1.3h-1.3zM74 317h1.3v1.3h-1.3zM64 333h1.3v1.3h-1.3zM87 317h1.3v1.3h-1.3zM79 326h1.3v1.3h-1.3z" fill="#3080c0"/><path d="M56 330h1.3v1.3h-1.3zM63 336h1.3v1.3h-1.3zM46 338h1.3v1.3h-1.3zM59 349h1.3v1.3h-1.3zM66 353h1.3v1.3h-1.3zM73 334h1.3v1.3h-1.3zM55 349h1.3v1.3h-1.3zM66 336h1.3v1.3h-1.3zM47 332h1.3v1.3h-1.3zM55 342h1.3v1.3h-1.3zM71 346h1.3v1.3h-1.3zM62 351h1.3v1.3h-1.3zM59 347h1.3v1.3h-1.3zM70 342h1.3v1.3h-1.3zM68 343h1.3v1.3h-1.3zM73 352h1.3v1.3h-1.3zM66 354h1.3v1.3h-1.3zM58 345h1.3v1.3h-1.3zM49 333h1.3v1.3h-1.3zM48 339h1.3v1.3h-1.3zM72 350h1.3v1.3h-1.3zM57 351h1.3v1.3h-1.3zM53 340h1.3v1.3h-1.3zM57 342h1.3v1.3h-1.3zM62 343h1.3v1.3h-1.3zM75 348h1.3v1.3h-1.3zM58 337h1.3v1.3h-1.3zM47 328h1.3v1.3h-1.3zM56 327h1.3v1.3h-1.3zM65 330h1.3v1.3h-1.3z" fill="#40c040"/><path d="M66 328h1.3v1.3h-1.3zM47 340h1.3v1.3h-1.3zM47 329h1.3v1.3h-1.3zM49 332h1.3v1.3h-1.3zM64 337h1.3v1.3h-1.3zM50 329h1.3v1.3h-1.3zM51 342h1.3v1.3h-1.3zM63 328h1.3v1.3h-1.3zM67 338h1.3v1.3h-1.3zM60 334h1.3v1.3h-1.3zM53 342h1.3v1.3h-1.3zM69 334h1.3v1.3h-1.3zM50 340h1.3v1.3h-1.3zM74 335h1.3v1.3h-1.3zM64 339h1.3v1.3h-1.3zM61 345h1.3v1.3h-1.3zM72 334h1.3v1.3h-1.3zM51 329h1.3v1.3h-1.3zM58 350h1.3v1.3h-1.3zM63 351h1.3v1.3h-1.3zM54 338h1.3v1.3h-1.3zM51 332h1.3v1.3h-1.3zM64 333h1.3v1.3h-1.3zM76 345h1.3v1.3h-1.3zM67 328h1.3v1.3h-1.3zM74 348h1.3v1.3h-1.3zM48 344h1.3v1.3h-1.3zM52 331h1.3v1.3h-1.3zM48 336h1.3v1.3h-1.3zM53 336h1.3v1.3h-1.3z" fill="#a0c030"/><path d="M27 362h1.2v1.2h-1.2zM23 349h1.2v1.2h-1.2zM40 353h1.2v1.2h-1.2zM26 360h1.2v1.2h-1.2zM21 349h1.2v1.2h-1.2zM32 346h1.2v1.2h-1.2zM22 356h1.2v1.2h-1.2zM30 357h1.2v1.2h-1.2zM48 355h1.2v1.2h-1.2zM26 362h1.2v1.2h-1.2zM47 349h1.2v1.2h-1.2zM24 359h1.2v1.2h-1.2zM42 362h1.2v1.2h-1.2zM26 347h1.2v1.2h-1.2zM22 361h1.2v1.2h-1.2zM27 349h1.2v1.2h-1.2zM28 352h1.2v1.2h-1.2zM48 347h1.2v1.2h-1.2zM41 363h1.2v1.2h-1.2zM44 350h1.2v1.2h-1.2z" fill="#40b040"/><path d="M24 357h1.2v1.2h-1.2zM51 348h1.2v1.2h-1.2zM34 353h1.2v1.2h-1.2zM23 348h1.2v1.2h-1.2zM33 361h1.2v1.2h-1.2zM28 363h1.2v1.2h-1.2zM32 357h1.2v1.2h-1.2zM35 356h1.2v1.2h-1.2zM49 353h1.2v1.2h-1.2zM38 358h1.2v1.2h-1.2zM31 361h1.2v1.2h-1.2zM23 357h1.2v1.2h-1.2zM46 354h1.2v1.2h-1.2zM36 354h1.2v1.2h-1.2zM36 357h1.2v1.2h-1.2zM20 351h1.2v1.2h-1.2zM32 360h1.2v1.2h-1.2zM32 347h1.2v1.2h-1.2zM26 359h1.2v1.2h-1.2zM25 352h1.2v1.2h-1.2z" fill="#b0b030"/><path d="M81 350h1.3v1.3h-1.3zM75 357h1.3v1.3h-1.3zM73 352h1.3v1.3h-1.3zM89 345h1.3v1.3h-1.3zM83 353h1.3v1.3h-1.3zM74 350h1.3v1.3h-1.3zM86 351h1.3v1.3h-1.3zM86 346h1.3v1.3h-1.3zM77 346h1.3v1.3h-1.3zM82 358h1.3v1.3h-1.3zM84 356h1.3v1.3h-1.3zM80 355h1.3v1.3h-1.3zM75 348h1.3v1.3h-1.3zM85 355h1.3v1.3h-1.3zM81 345h1.3v1.3h-1.3zM78 347h1.3v1.3h-1.3zM78 356h1.3v1.3h-1.3zM77 357h1.3v1.3h-1.3zM89 345h1.3v1.3h-1.3zM80 351h1.3v1.3h-1.3z" fill="#c83020"/><path d="M9 368h1.2v1.2h-1.2zM12 377h1.2v1.2h-1.2zM8 366h1.2v1.2h-1.2zM15 360h1.2v1.2h-1.2zM6 365h1.2v1.2h-1.2zM10 374h1.2v1.2h-1.2zM15 380h1.2v1.2h-1.2zM0 362h1.2v1.2h-1.2zM5 379h1.2v1.2h-1.2zM7 360h1.2v1.2h-1.2zM2 364h1.2v1.2h-1.2zM7 377h1.2v1.2h-1.2zM13 362h1.2v1.2h-1.2z" fill="#90c030"/><path d="M9 364h1.2v1.2h-1.2zM10 363h1.2v1.2h-1.2zM4 380h1.2v1.2h-1.2zM13 372h1.2v1.2h-1.2zM10 369h1.2v1.2h-1.2zM2 376h1.2v1.2h-1.2zM9 360h1.2v1.2h-1.2zM14 366h1.2v1.2h-1.2zM5 371h1.2v1.2h-1.2zM9 378h1.2v1.2h-1.2zM6 360h1.2v1.2h-1.2zM10 371h1.2v1.2h-1.2z" fill="#40b040"/><path d="M111 328h1.3v1.3h-1.3zM112 329h1.3v1.3h-1.3zM114 333h1.3v1.3h-1.3zM105 334h1.3v1.3h-1.3zM121 337h1.3v1.3h-1.3zM106 316h1.3v1.3h-1.3zM106 321h1.3v1.3h-1.3zM111 335h1.3v1.3h-1.3zM112 331h1.3v1.3h-1.3zM121 338h1.3v1.3h-1.3zM109 321h1.3v1.3h-1.3zM117 325h1.3v1.3h-1.3zM120 335h1.3v1.3h-1.3zM119 326h1.3v1.3h-1.3zM104 330h1.3v1.3h-1.3zM105 323h1.3v1.3h-1.3zM105 321h1.3v1.3h-1.3zM117 320h1.3v1.3h-1.3zM106 332h1.3v1.3h-1.3zM105 325h1.3v1.3h-1.3zM120 334h1.3v1.3h-1.3zM107 325h1.3v1.3h-1.3zM105 338h1.3v1.3h-1.3z" fill="#2aa0b0"/><path d="M120 326h1.3v1.3h-1.3zM106 327h1.3v1.3h-1.3zM105 323h1.3v1.3h-1.3zM115 317h1.3v1.3h-1.3zM115 330h1.3v1.3h-1.3zM113 317h1.3v1.3h-1.3zM104 326h1.3v1.3h-1.3zM112 330h1.3v1.3h-1.3zM111 322h1.3v1.3h-1.3zM118 332h1.3v1.3h-1.3zM108 318h1.3v1.3h-1.3zM118 325h1.3v1.3h-1.3zM103 321h1.3v1.3h-1.3zM121 325h1.3v1.3h-1.3zM117 322h1.3v1.3h-1.3zM120 333h1.3v1.3h-1.3zM105 317h1.3v1.3h-1.3zM113 326h1.3v1.3h-1.3zM105 330h1.3v1.3h-1.3zM107 322h1.3v1.3h-1.3zM108 335h1.3v1.3h-1.3zM118 330h1.3v1.3h-1.3z" fill="#2a80c0"/><polyline points="133.0,309.0 164.0,356.0" fill="none" stroke="#2878f0" stroke-width="2.24"/><polyline points="135.2,308.4 166.2,355.4" fill="none" stroke="#2878f0" stroke-width="2.24"/><polyline points="137.4,307.8 168.4,354.8" fill="none" stroke="#2878f0" stroke-width="2.24"/><polyline points="140.0,310.0 169.0,352.0" fill="none" stroke="#50c040" stroke-width="1.12" stroke-dasharray="2 1.5"/><polyline points="143.0,309.0 172.0,351.0" fill="none" stroke="#50c040" stroke-width="1.12" stroke-dasharray="2 1.5"/><polyline points="146.0,308.0 175.0,350.0" fill="none" stroke="#50c040" stroke-width="1.12" stroke-dasharray="2 1.5"/><polyline points="171.0,363.0 198.0,401.0" fill="none" stroke="#2878f0" stroke-width="2.24"/><polyline points="173.2,362.4 200.2,400.4" fill="none" stroke="#2878f0" stroke-width="2.24"/><polyline points="175.4,361.8 202.4,399.8" fill="none" stroke="#2878f0" stroke-width="2.24"/><polyline points="123.0,374.0 152.0,420.0" fill="none" stroke="#30c0a0" stroke-width="1.68"/><polyline points="125.5,374.0 154.5,420.0" fill="none" stroke="#30c0a0" stroke-width="1.68"/><path d="M161 417h1.3v1.3h-1.3zM147 427h1.3v1.3h-1.3zM167 418h1.3v1.3h-1.3zM152 402h1.3v1.3h-1.3zM197 435h1.3v1.3h-1.3zM172 388h1.3v1.3h-1.3zM170 407h1.3v1.3h-1.3zM196 418h1.3v1.3h-1.3zM176 418h1.3v1.3h-1.3zM153 409h1.3v1.3h-1.3zM158 409h1.3v1.3h-1.3zM155 424h1.3v1.3h-1.3zM143 395h1.3v1.3h-1.3zM162 435h1.3v1.3h-1.3zM180 433h1.3v1.3h-1.3zM197 438h1.3v1.3h-1.3zM186 416h1.3v1.3h-1.3zM161 416h1.3v1.3h-1.3zM148 430h1.3v1.3h-1.3zM177 391h1.3v1.3h-1.3zM176 420h1.3v1.3h-1.3zM158 437h1.3v1.3h-1.3zM192 436h1.3v1.3h-1.3zM169 432h1.3v1.3h-1.3zM152 400h1.3v1.3h-1.3zM191 426h1.3v1.3h-1.3zM165 425h1.3v1.3h-1.3zM153 397h1.3v1.3h-1.3zM166 415h1.3v1.3h-1.3zM145 402h1.3v1.3h-1.3z" fill="#c83020"/><path d="M175 387h1.3v1.3h-1.3zM176 414h1.3v1.3h-1.3zM138 404h1.3v1.3h-1.3zM164 383h1.3v1.3h-1.3zM137 397h1.3v1.3h-1.3zM156 403h1.3v1.3h-1.3zM179 436h1.3v1.3h-1.3zM153 400h1.3v1.3h-1.3zM136 392h1.3v1.3h-1.3zM185 408h1.3v1.3h-1.3zM144 404h1.3v1.3h-1.3zM152 416h1.3v1.3h-1.3zM161 436h1.3v1.3h-1.3zM153 389h1.3v1.3h-1.3zM182 399h1.3v1.3h-1.3zM151 425h1.3v1.3h-1.3zM144 410h1.3v1.3h-1.3zM191 388h1.3v1.3h-1.3zM164 420h1.3v1.3h-1.3zM148 393h1.3v1.3h-1.3zM157 392h1.3v1.3h-1.3zM167 415h1.3v1.3h-1.3zM181 403h1.3v1.3h-1.3zM183 413h1.3v1.3h-1.3zM180 412h1.3v1.3h-1.3zM191 433h1.3v1.3h-1.3zM155 384h1.3v1.3h-1.3zM193 419h1.3v1.3h-1.3zM177 402h1.3v1.3h-1.3zM151 419h1.3v1.3h-1.3z" fill="#d08020"/><polyline points="149.0,397.0 198.0,408.0" fill="none" stroke="#d08020" stroke-width="1.23" stroke-dasharray="2 1.5"/><polyline points="152.0,404.0 198.0,414.0" fill="none" stroke="#d08020" stroke-width="1.23" stroke-dasharray="2 1.5"/><polyline points="155.0,411.0 198.0,420.0" fill="none" stroke="#d08020" stroke-width="1.23" stroke-dasharray="2 1.5"/><polyline points="158.0,418.0 198.0,426.0" fill="none" stroke="#d08020" stroke-width="1.23" stroke-dasharray="2 1.5"/><polyline points="161.0,425.0 198.0,432.0" fill="none" stroke="#d08020" stroke-width="1.23" stroke-dasharray="2 1.5"/><polyline points="164.0,432.0 198.0,438.0" fill="none" stroke="#d08020" stroke-width="1.23" stroke-dasharray="2 1.5"/><path d="M186 333h1.4v1.4h-1.4zM185 314h1.4v1.4h-1.4zM194 309h1.4v1.4h-1.4zM187 322h1.4v1.4h-1.4zM182 316h1.4v1.4h-1.4zM195 338h1.4v1.4h-1.4zM197 337h1.4v1.4h-1.4zM190 336h1.4v1.4h-1.4zM188 322h1.4v1.4h-1.4zM195 338h1.4v1.4h-1.4zM191 335h1.4v1.4h-1.4zM189 311h1.4v1.4h-1.4zM186 323h1.4v1.4h-1.4zM184 325h1.4v1.4h-1.4zM185 319h1.4v1.4h-1.4zM197 320h1.4v1.4h-1.4zM183 310h1.4v1.4h-1.4zM192 311h1.4v1.4h-1.4zM196 338h1.4v1.4h-1.4zM188 334h1.4v1.4h-1.4zM192 334h1.4v1.4h-1.4zM191 329h1.4v1.4h-1.4zM187 316h1.4v1.4h-1.4zM184 313h1.4v1.4h-1.4zM191 327h1.4v1.4h-1.4z" fill="#40c040"/><path d="M193 340h1.4v1.4h-1.4zM184 313h1.4v1.4h-1.4zM191 313h1.4v1.4h-1.4zM195 330h1.4v1.4h-1.4zM184 341h1.4v1.4h-1.4zM195 335h1.4v1.4h-1.4zM186 340h1.4v1.4h-1.4zM191 322h1.4v1.4h-1.4zM187 309h1.4v1.4h-1.4zM198 333h1.4v1.4h-1.4zM184 332h1.4v1.4h-1.4zM185 326h1.4v1.4h-1.4zM192 321h1.4v1.4h-1.4zM186 314h1.4v1.4h-1.4zM183 331h1.4v1.4h-1.4zM194 343h1.4v1.4h-1.4zM195 339h1.4v1.4h-1.4zM189 340h1.4v1.4h-1.4zM185 340h1.4v1.4h-1.4zM184 345h1.4v1.4h-1.4zM185 330h1.4v1.4h-1.4zM188 335h1.4v1.4h-1.4zM185 333h1.4v1.4h-1.4zM183 331h1.4v1.4h-1.4zM183 322h1.4v1.4h-1.4z" fill="#2870e0"/><path d="M5 517h1.3v1.3h-1.3zM37 512h1.3v1.3h-1.3zM6 463h1.3v1.3h-1.3zM8 511h1.3v1.3h-1.3zM30 536h1.3v1.3h-1.3zM44 496h1.3v1.3h-1.3zM14 441h1.3v1.3h-1.3zM24 487h1.3v1.3h-1.3zM3 454h1.3v1.3h-1.3zM17 502h1.3v1.3h-1.3zM13 481h1.3v1.3h-1.3zM18 466h1.3v1.3h-1.3zM12 506h1.3v1.3h-1.3zM25 532h1.3v1.3h-1.3zM12 543h1.3v1.3h-1.3zM10 516h1.3v1.3h-1.3zM19 526h1.3v1.3h-1.3zM11 454h1.3v1.3h-1.3zM33 500h1.3v1.3h-1.3zM47 535h1.3v1.3h-1.3zM21 548h1.3v1.3h-1.3zM22 526h1.3v1.3h-1.3zM12 514h1.3v1.3h-1.3zM20 488h1.3v1.3h-1.3zM48 528h1.3v1.3h-1.3zM22 539h1.3v1.3h-1.3zM21 514h1.3v1.3h-1.3zM6 463h1.3v1.3h-1.3zM34 515h1.3v1.3h-1.3zM37 508h1.3v1.3h-1.3z" fill="#40b050"/><path d="M33 543h1.3v1.3h-1.3zM15 515h1.3v1.3h-1.3zM13 528h1.3v1.3h-1.3zM6 476h1.3v1.3h-1.3zM29 509h1.3v1.3h-1.3zM10 489h1.3v1.3h-1.3zM24 515h1.3v1.3h-1.3zM24 464h1.3v1.3h-1.3zM35 502h1.3v1.3h-1.3zM15 459h1.3v1.3h-1.3zM2 473h1.3v1.3h-1.3zM2 454h1.3v1.3h-1.3zM28 505h1.3v1.3h-1.3zM18 481h1.3v1.3h-1.3zM23 476h1.3v1.3h-1.3zM7 467h1.3v1.3h-1.3zM13 479h1.3v1.3h-1.3zM32 512h1.3v1.3h-1.3zM2 484h1.3v1.3h-1.3zM3 514h1.3v1.3h-1.3zM44 531h1.3v1.3h-1.3zM25 497h1.3v1.3h-1.3zM49 542h1.3v1.3h-1.3zM17 543h1.3v1.3h-1.3zM35 546h1.3v1.3h-1.3zM3 487h1.3v1.3h-1.3zM10 441h1.3v1.3h-1.3zM12 467h1.3v1.3h-1.3zM32 525h1.3v1.3h-1.3zM19 515h1.3v1.3h-1.3z" fill="#b0b030"/><path d="M14 467h1.3v1.3h-1.3zM20 525h1.3v1.3h-1.3zM28 512h1.3v1.3h-1.3zM4 461h1.3v1.3h-1.3zM9 449h1.3v1.3h-1.3zM11 527h1.3v1.3h-1.3zM27 489h1.3v1.3h-1.3zM43 543h1.3v1.3h-1.3zM1 517h1.3v1.3h-1.3zM31 491h1.3v1.3h-1.3zM14 543h1.3v1.3h-1.3zM10 464h1.3v1.3h-1.3zM47 523h1.3v1.3h-1.3zM46 507h1.3v1.3h-1.3zM13 450h1.3v1.3h-1.3zM22 499h1.3v1.3h-1.3zM21 452h1.3v1.3h-1.3zM18 543h1.3v1.3h-1.3zM13 491h1.3v1.3h-1.3zM5 535h1.3v1.3h-1.3zM7 480h1.3v1.3h-1.3zM15 547h1.3v1.3h-1.3zM45 534h1.3v1.3h-1.3zM1 453h1.3v1.3h-1.3zM26 532h1.3v1.3h-1.3zM29 527h1.3v1.3h-1.3zM19 496h1.3v1.3h-1.3zM5 535h1.3v1.3h-1.3zM21 463h1.3v1.3h-1.3zM19 505h1.3v1.3h-1.3z" fill="#c83020"/><path d="M93 490h1.3v1.3h-1.3zM102 521h1.3v1.3h-1.3zM90 494h1.3v1.3h-1.3zM102 516h1.3v1.3h-1.3zM108 503h1.3v1.3h-1.3zM67 487h1.3v1.3h-1.3zM79 518h1.3v1.3h-1.3zM103 521h1.3v1.3h-1.3zM35 489h1.3v1.3h-1.3zM89 511h1.3v1.3h-1.3zM42 486h1.3v1.3h-1.3zM78 499h1.3v1.3h-1.3zM52 496h1.3v1.3h-1.3zM69 487h1.3v1.3h-1.3zM71 488h1.3v1.3h-1.3zM101 518h1.3v1.3h-1.3zM73 502h1.3v1.3h-1.3zM79 501h1.3v1.3h-1.3zM89 493h1.3v1.3h-1.3zM60 508h1.3v1.3h-1.3zM83 510h1.3v1.3h-1.3zM100 514h1.3v1.3h-1.3zM61 498h1.3v1.3h-1.3zM53 520h1.3v1.3h-1.3zM88 496h1.3v1.3h-1.3zM90 497h1.3v1.3h-1.3zM103 511h1.3v1.3h-1.3zM80 496h1.3v1.3h-1.3zM93 504h1.3v1.3h-1.3zM65 513h1.3v1.3h-1.3zM101 508h1.3v1.3h-1.3zM94 498h1.3v1.3h-1.3zM75 488h1.3v1.3h-1.3zM46 510h1.3v1.3h-1.3zM103 521h1.3v1.3h-1.3zM55 489h1.3v1.3h-1.3zM38 518h1.3v1.3h-1.3zM41 508h1.3v1.3h-1.3zM97 511h1.3v1.3h-1.3zM52 490h1.3v1.3h-1.3zM104 498h1.3v1.3h-1.3zM72 502h1.3v1.3h-1.3zM68 500h1.3v1.3h-1.3zM53 519h1.3v1.3h-1.3zM87 521h1.3v1.3h-1.3z" fill="#30b090"/><path d="M104 509h1.3v1.3h-1.3zM52 497h1.3v1.3h-1.3zM54 492h1.3v1.3h-1.3zM98 492h1.3v1.3h-1.3zM52 501h1.3v1.3h-1.3zM79 497h1.3v1.3h-1.3zM85 499h1.3v1.3h-1.3zM73 519h1.3v1.3h-1.3zM47 519h1.3v1.3h-1.3zM56 502h1.3v1.3h-1.3zM71 515h1.3v1.3h-1.3zM74 491h1.3v1.3h-1.3zM100 496h1.3v1.3h-1.3zM107 513h1.3v1.3h-1.3zM73 498h1.3v1.3h-1.3zM93 495h1.3v1.3h-1.3zM38 515h1.3v1.3h-1.3zM96 506h1.3v1.3h-1.3zM40 484h1.3v1.3h-1.3zM64 497h1.3v1.3h-1.3zM81 496h1.3v1.3h-1.3zM105 517h1.3v1.3h-1.3zM75 489h1.3v1.3h-1.3zM60 518h1.3v1.3h-1.3zM59 506h1.3v1.3h-1.3zM38 490h1.3v1.3h-1.3zM42 515h1.3v1.3h-1.3zM41 497h1.3v1.3h-1.3zM72 518h1.3v1.3h-1.3zM46 508h1.3v1.3h-1.3zM80 504h1.3v1.3h-1.3zM52 505h1.3v1.3h-1.3zM76 501h1.3v1.3h-1.3zM96 497h1.3v1.3h-1.3zM87 499h1.3v1.3h-1.3zM55 521h1.3v1.3h-1.3zM89 513h1.3v1.3h-1.3zM50 509h1.3v1.3h-1.3zM76 517h1.3v1.3h-1.3zM67 500h1.3v1.3h-1.3zM79 503h1.3v1.3h-1.3zM71 506h1.3v1.3h-1.3zM108 520h1.3v1.3h-1.3zM35 496h1.3v1.3h-1.3zM83 501h1.3v1.3h-1.3z" fill="#40b040"/><path d="M97 495h1.4v1.4h-1.4zM99 498h1.4v1.4h-1.4zM97 487h1.4v1.4h-1.4zM109 505h1.4v1.4h-1.4zM109 499h1.4v1.4h-1.4zM94 491h1.4v1.4h-1.4zM97 493h1.4v1.4h-1.4zM113 502h1.4v1.4h-1.4zM94 487h1.4v1.4h-1.4zM90 499h1.4v1.4h-1.4zM112 494h1.4v1.4h-1.4zM104 495h1.4v1.4h-1.4zM94 493h1.4v1.4h-1.4zM105 493h1.4v1.4h-1.4zM113 501h1.4v1.4h-1.4zM94 486h1.4v1.4h-1.4zM106 505h1.4v1.4h-1.4zM105 490h1.4v1.4h-1.4zM91 487h1.4v1.4h-1.4zM89 488h1.4v1.4h-1.4zM101 486h1.4v1.4h-1.4zM91 487h1.4v1.4h-1.4zM94 503h1.4v1.4h-1.4zM94 488h1.4v1.4h-1.4zM110 489h1.4v1.4h-1.4zM91 486h1.4v1.4h-1.4zM101 496h1.4v1.4h-1.4zM101 495h1.4v1.4h-1.4zM105 500h1.4v1.4h-1.4zM109 500h1.4v1.4h-1.4z" fill="#2aa8c8"/><path d="M99 494h1.4v1.4h-1.4zM95 498h1.4v1.4h-1.4zM107 491h1.4v1.4h-1.4zM95 504h1.4v1.4h-1.4zM104 491h1.4v1.4h-1.4zM95 501h1.4v1.4h-1.4zM105 505h1.4v1.4h-1.4zM109 496h1.4v1.4h-1.4zM96 494h1.4v1.4h-1.4zM110 495h1.4v1.4h-1.4zM109 494h1.4v1.4h-1.4zM89 487h1.4v1.4h-1.4zM98 496h1.4v1.4h-1.4zM96 495h1.4v1.4h-1.4zM105 502h1.4v1.4h-1.4zM90 487h1.4v1.4h-1.4zM108 487h1.4v1.4h-1.4zM102 504h1.4v1.4h-1.4zM100 500h1.4v1.4h-1.4zM105 504h1.4v1.4h-1.4zM94 493h1.4v1.4h-1.4zM99 502h1.4v1.4h-1.4zM111 494h1.4v1.4h-1.4zM105 502h1.4v1.4h-1.4zM96 490h1.4v1.4h-1.4zM114 491h1.4v1.4h-1.4zM100 497h1.4v1.4h-1.4zM90 498h1.4v1.4h-1.4zM96 494h1.4v1.4h-1.4zM89 491h1.4v1.4h-1.4z" fill="#2080d0"/><polyline points="66.0,443.0 78.0,453.0 86.0,468.0 93.0,483.0" fill="none" stroke="#c07020" stroke-width="1.46" stroke-dasharray="2 1.5"/><polyline points="78.0,448.0 90.0,456.0 93.0,465.0" fill="none" stroke="#40b040" stroke-width="1.46" stroke-dasharray="2 1.5"/><polyline points="99.0,430.0 166.0,458.0" fill="none" stroke="#c08020" stroke-width="1.46" stroke-dasharray="3 3"/><polyline points="101.0,434.0 168.0,462.0" fill="none" stroke="#c08020" stroke-width="1.46" stroke-dasharray="3 3"/><path d="M181 449h1.4v1.4h-1.4zM188 425h1.4v1.4h-1.4zM181 453h1.4v1.4h-1.4zM176 448h1.4v1.4h-1.4zM170 441h1.4v1.4h-1.4zM183 426h1.4v1.4h-1.4zM187 428h1.4v1.4h-1.4zM177 423h1.4v1.4h-1.4zM191 438h1.4v1.4h-1.4zM185 432h1.4v1.4h-1.4zM169 427h1.4v1.4h-1.4zM182 437h1.4v1.4h-1.4zM174 422h1.4v1.4h-1.4zM175 439h1.4v1.4h-1.4zM174 430h1.4v1.4h-1.4zM182 445h1.4v1.4h-1.4zM181 435h1.4v1.4h-1.4zM171 426h1.4v1.4h-1.4zM193 451h1.4v1.4h-1.4zM189 433h1.4v1.4h-1.4zM181 450h1.4v1.4h-1.4zM174 429h1.4v1.4h-1.4zM168 425h1.4v1.4h-1.4zM189 421h1.4v1.4h-1.4zM181 447h1.4v1.4h-1.4zM174 449h1.4v1.4h-1.4zM174 447h1.4v1.4h-1.4zM172 422h1.4v1.4h-1.4zM166 429h1.4v1.4h-1.4zM174 452h1.4v1.4h-1.4zM185 448h1.4v1.4h-1.4zM177 454h1.4v1.4h-1.4zM172 427h1.4v1.4h-1.4zM171 442h1.4v1.4h-1.4zM179 433h1.4v1.4h-1.4zM171 432h1.4v1.4h-1.4zM191 436h1.4v1.4h-1.4zM178 418h1.4v1.4h-1.4zM176 426h1.4v1.4h-1.4zM187 426h1.4v1.4h-1.4zM167 430h1.4v1.4h-1.4zM190 419h1.4v1.4h-1.4zM177 419h1.4v1.4h-1.4zM185 427h1.4v1.4h-1.4zM179 448h1.4v1.4h-1.4zM183 443h1.4v1.4h-1.4zM173 432h1.4v1.4h-1.4zM172 436h1.4v1.4h-1.4zM191 443h1.4v1.4h-1.4zM171 433h1.4v1.4h-1.4z" fill="#30b890"/><path d="M189 445h1.4v1.4h-1.4zM180 428h1.4v1.4h-1.4zM184 428h1.4v1.4h-1.4zM181 430h1.4v1.4h-1.4zM182 438h1.4v1.4h-1.4zM175 435h1.4v1.4h-1.4zM182 444h1.4v1.4h-1.4zM172 421h1.4v1.4h-1.4zM190 416h1.4v1.4h-1.4zM184 425h1.4v1.4h-1.4zM187 435h1.4v1.4h-1.4zM178 457h1.4v1.4h-1.4zM188 439h1.4v1.4h-1.4zM194 438h1.4v1.4h-1.4zM183 437h1.4v1.4h-1.4zM188 434h1.4v1.4h-1.4zM196 450h1.4v1.4h-1.4zM181 445h1.4v1.4h-1.4zM188 424h1.4v1.4h-1.4zM170 438h1.4v1.4h-1.4zM175 447h1.4v1.4h-1.4zM181 425h1.4v1.4h-1.4zM186 428h1.4v1.4h-1.4zM173 433h1.4v1.4h-1.4zM169 439h1.4v1.4h-1.4zM177 441h1.4v1.4h-1.4zM188 449h1.4v1.4h-1.4zM180 433h1.4v1.4h-1.4zM188 428h1.4v1.4h-1.4zM193 437h1.4v1.4h-1.4zM189 424h1.4v1.4h-1.4zM171 428h1.4v1.4h-1.4zM188 423h1.4v1.4h-1.4zM176 434h1.4v1.4h-1.4zM185 420h1.4v1.4h-1.4zM180 451h1.4v1.4h-1.4zM179 432h1.4v1.4h-1.4zM173 441h1.4v1.4h-1.4zM182 448h1.4v1.4h-1.4zM184 454h1.4v1.4h-1.4zM179 428h1.4v1.4h-1.4zM181 421h1.4v1.4h-1.4zM188 420h1.4v1.4h-1.4zM179 453h1.4v1.4h-1.4zM185 427h1.4v1.4h-1.4zM188 417h1.4v1.4h-1.4zM180 432h1.4v1.4h-1.4zM177 420h1.4v1.4h-1.4zM179 449h1.4v1.4h-1.4zM190 441h1.4v1.4h-1.4z" fill="#3090d0"/><path d="M185 419h1.4v1.4h-1.4zM187 439h1.4v1.4h-1.4zM175 456h1.4v1.4h-1.4zM173 449h1.4v1.4h-1.4zM175 454h1.4v1.4h-1.4zM173 442h1.4v1.4h-1.4zM177 446h1.4v1.4h-1.4zM168 423h1.4v1.4h-1.4zM189 451h1.4v1.4h-1.4zM181 426h1.4v1.4h-1.4zM177 435h1.4v1.4h-1.4zM188 424h1.4v1.4h-1.4zM178 453h1.4v1.4h-1.4zM184 430h1.4v1.4h-1.4zM181 422h1.4v1.4h-1.4zM178 436h1.4v1.4h-1.4zM179 447h1.4v1.4h-1.4zM193 441h1.4v1.4h-1.4zM185 451h1.4v1.4h-1.4zM173 429h1.4v1.4h-1.4zM187 427h1.4v1.4h-1.4zM180 426h1.4v1.4h-1.4zM170 430h1.4v1.4h-1.4zM181 431h1.4v1.4h-1.4zM169 438h1.4v1.4h-1.4zM189 433h1.4v1.4h-1.4zM173 425h1.4v1.4h-1.4zM192 431h1.4v1.4h-1.4zM195 447h1.4v1.4h-1.4zM190 453h1.4v1.4h-1.4zM191 433h1.4v1.4h-1.4zM180 433h1.4v1.4h-1.4zM171 430h1.4v1.4h-1.4zM170 446h1.4v1.4h-1.4zM192 448h1.4v1.4h-1.4zM186 425h1.4v1.4h-1.4zM170 425h1.4v1.4h-1.4zM172 428h1.4v1.4h-1.4zM181 454h1.4v1.4h-1.4zM194 448h1.4v1.4h-1.4zM188 436h1.4v1.4h-1.4zM176 441h1.4v1.4h-1.4zM179 428h1.4v1.4h-1.4zM181 428h1.4v1.4h-1.4zM194 446h1.4v1.4h-1.4zM182 423h1.4v1.4h-1.4zM188 426h1.4v1.4h-1.4zM188 452h1.4v1.4h-1.4zM171 437h1.4v1.4h-1.4zM170 419h1.4v1.4h-1.4z" fill="#40c060"/><polyline points="129.0,516.0 132.0,539.0" fill="none" stroke="#c07020" stroke-width="1.34" stroke-dasharray="1.5 2.5"/><polyline points="312.0,166.0 342.0,139.0" fill="none" stroke="#b0b828" stroke-width="1.12" stroke-dasharray="1.6 1.4"/><polyline points="312.2,169.0 343.9,140.5" fill="none" stroke="#b0b828" stroke-width="1.12" stroke-dasharray="1.6 1.4"/><polyline points="312.5,172.0 345.8,142.0" fill="none" stroke="#b0b828" stroke-width="1.12" stroke-dasharray="1.6 1.4"/><polyline points="312.8,175.0 347.8,143.5" fill="none" stroke="#b0b828" stroke-width="1.12" stroke-dasharray="1.6 1.4"/><polyline points="313.0,178.0 349.7,145.0" fill="none" stroke="#b0b828" stroke-width="1.12" stroke-dasharray="1.6 1.4"/><polyline points="313.2,181.0 351.6,146.5" fill="none" stroke="#b0b828" stroke-width="1.12" stroke-dasharray="1.6 1.4"/><polyline points="313.5,184.0 353.5,148.0" fill="none" stroke="#b0b828" stroke-width="1.12" stroke-dasharray="1.6 1.4"/><polyline points="313.8,187.0 355.4,149.5" fill="none" stroke="#b0b828" stroke-width="1.12" stroke-dasharray="1.6 1.4"/><polyline points="314.0,190.0 357.3,151.0" fill="none" stroke="#b0b828" stroke-width="1.12" stroke-dasharray="1.6 1.4"/><polyline points="314.2,193.0 359.2,152.5" fill="none" stroke="#b0b828" stroke-width="1.12" stroke-dasharray="1.6 1.4"/><polyline points="314.5,196.0 361.2,154.0" fill="none" stroke="#b0b828" stroke-width="1.12" stroke-dasharray="1.6 1.4"/><polyline points="314.8,199.0 363.1,155.5" fill="none" stroke="#b0b828" stroke-width="1.12" stroke-dasharray="1.6 1.4"/><polyline points="315.0,202.0 365.0,157.0" fill="none" stroke="#b0b828" stroke-width="1.12" stroke-dasharray="1.6 1.4"/><polyline points="342.0,140.0 359.0,137.0" fill="none" stroke="#d0e030" stroke-width="1.34"/><polyline points="342.0,142.2 359.0,139.2" fill="none" stroke="#d0e030" stroke-width="1.34"/><polyline points="342.0,144.4 359.0,141.4" fill="none" stroke="#d0e030" stroke-width="1.34"/><polyline points="298.0,162.0 312.0,167.0" fill="none" stroke="#d8e028" stroke-width="1.57"/><polyline points="299.5,165.0 313.5,170.0" fill="none" stroke="#d8e028" stroke-width="1.57"/><polyline points="301.0,168.0 315.0,173.0" fill="none" stroke="#d8e028" stroke-width="1.57"/><polyline points="306.0,180.0 315.0,202.0" fill="none" stroke="#40c040" stroke-width="1.79" stroke-dasharray="2 1"/><path d="M387 141h1.3v1.3h-1.3zM391 131h1.3v1.3h-1.3zM395 137h1.3v1.3h-1.3zM394 137h1.3v1.3h-1.3zM389 132h1.3v1.3h-1.3zM400 134h1.3v1.3h-1.3zM400 144h1.3v1.3h-1.3zM405 147h1.3v1.3h-1.3zM388 132h1.3v1.3h-1.3zM401 139h1.3v1.3h-1.3zM387 141h1.3v1.3h-1.3zM405 145h1.3v1.3h-1.3zM388 133h1.3v1.3h-1.3zM388 142h1.3v1.3h-1.3zM396 139h1.3v1.3h-1.3zM396 144h1.3v1.3h-1.3zM398 133h1.3v1.3h-1.3zM385 137h1.3v1.3h-1.3zM406 130h1.3v1.3h-1.3zM400 140h1.3v1.3h-1.3zM386 131h1.3v1.3h-1.3zM400 136h1.3v1.3h-1.3zM393 137h1.3v1.3h-1.3zM385 142h1.3v1.3h-1.3zM397 138h1.3v1.3h-1.3zM391 144h1.3v1.3h-1.3zM403 138h1.3v1.3h-1.3zM384 130h1.3v1.3h-1.3zM386 129h1.3v1.3h-1.3zM399 138h1.3v1.3h-1.3zM398 144h1.3v1.3h-1.3zM403 141h1.3v1.3h-1.3zM385 141h1.3v1.3h-1.3zM405 137h1.3v1.3h-1.3zM403 131h1.3v1.3h-1.3z" fill="#80c030"/><polyline points="264.0,208.0 299.0,176.0" fill="none" stroke="#c08028" stroke-width="1.12" stroke-dasharray="1.6 1.6"/><polyline points="265.5,211.2 299.0,180.0" fill="none" stroke="#c08028" stroke-width="1.12" stroke-dasharray="1.6 1.6"/><polyline points="267.0,214.4 299.0,184.0" fill="none" stroke="#c08028" stroke-width="1.12" stroke-dasharray="1.6 1.6"/><polyline points="268.5,217.6 299.0,188.0" fill="none" stroke="#c08028" stroke-width="1.12" stroke-dasharray="1.6 1.6"/><polyline points="270.0,220.8 299.0,192.0" fill="none" stroke="#c08028" stroke-width="1.12" stroke-dasharray="1.6 1.6"/><polyline points="271.5,224.0 299.0,196.0" fill="none" stroke="#c08028" stroke-width="1.12" stroke-dasharray="1.6 1.6"/><polyline points="273.0,227.2 299.0,200.0" fill="none" stroke="#c08028" stroke-width="1.12" stroke-dasharray="1.6 1.6"/><polyline points="274.5,230.4 299.0,204.0" fill="none" stroke="#c08028" stroke-width="1.12" stroke-dasharray="1.6 1.6"/><polyline points="276.0,233.6 299.0,208.0" fill="none" stroke="#c08028" stroke-width="1.12" stroke-dasharray="1.6 1.6"/><polyline points="277.5,236.8 299.0,212.0" fill="none" stroke="#c08028" stroke-width="1.12" stroke-dasharray="1.6 1.6"/><polyline points="266.0,208.0 302.0,193.0" fill="none" stroke="#c89030" stroke-width="1.12" stroke-dasharray="1.8 1.2"/><polyline points="266.0,211.5 302.0,196.5" fill="none" stroke="#c89030" stroke-width="1.12" stroke-dasharray="1.8 1.2"/><polyline points="266.0,215.0 302.0,200.0" fill="none" stroke="#c89030" stroke-width="1.12" stroke-dasharray="1.8 1.2"/><polyline points="266.0,218.5 302.0,203.5" fill="none" stroke="#c89030" stroke-width="1.12" stroke-dasharray="1.8 1.2"/><polyline points="266.0,222.0 302.0,207.0" fill="none" stroke="#c89030" stroke-width="1.12" stroke-dasharray="1.8 1.2"/><polyline points="266.0,225.5 302.0,210.5" fill="none" stroke="#c89030" stroke-width="1.12" stroke-dasharray="1.8 1.2"/><polyline points="266.0,229.0 302.0,214.0" fill="none" stroke="#c89030" stroke-width="1.12" stroke-dasharray="1.8 1.2"/><polyline points="266.0,232.5 302.0,217.5" fill="none" stroke="#c89030" stroke-width="1.12" stroke-dasharray="1.8 1.2"/><polyline points="266.0,236.0 302.0,221.0" fill="none" stroke="#c89030" stroke-width="1.12" stroke-dasharray="1.8 1.2"/><polyline points="266.0,239.5 302.0,224.5" fill="none" stroke="#c89030" stroke-width="1.12" stroke-dasharray="1.8 1.2"/><polyline points="266.0,243.0 302.0,228.0" fill="none" stroke="#c89030" stroke-width="1.12" stroke-dasharray="1.8 1.2"/><polyline points="266.0,246.5 302.0,231.5" fill="none" stroke="#c89030" stroke-width="1.12" stroke-dasharray="1.8 1.2"/><path d="M313 201h1.3v1.3h-1.3zM307 204h1.3v1.3h-1.3zM304 192h1.3v1.3h-1.3zM300 193h1.3v1.3h-1.3zM302 189h1.3v1.3h-1.3zM307 200h1.3v1.3h-1.3zM300 200h1.3v1.3h-1.3zM312 193h1.3v1.3h-1.3zM315 203h1.3v1.3h-1.3zM314 201h1.3v1.3h-1.3zM312 190h1.3v1.3h-1.3zM301 196h1.3v1.3h-1.3zM318 202h1.3v1.3h-1.3zM301 199h1.3v1.3h-1.3zM304 194h1.3v1.3h-1.3zM305 199h1.3v1.3h-1.3zM313 200h1.3v1.3h-1.3zM309 199h1.3v1.3h-1.3zM302 193h1.3v1.3h-1.3zM312 202h1.3v1.3h-1.3zM312 203h1.3v1.3h-1.3zM311 203h1.3v1.3h-1.3zM312 191h1.3v1.3h-1.3zM315 190h1.3v1.3h-1.3zM304 202h1.3v1.3h-1.3z" fill="#50c030"/><path d="M309 196h1.3v1.3h-1.3zM304 190h1.3v1.3h-1.3zM305 192h1.3v1.3h-1.3zM305 197h1.3v1.3h-1.3zM302 197h1.3v1.3h-1.3zM316 195h1.3v1.3h-1.3zM315 194h1.3v1.3h-1.3zM318 201h1.3v1.3h-1.3zM303 197h1.3v1.3h-1.3zM307 190h1.3v1.3h-1.3zM308 196h1.3v1.3h-1.3zM309 194h1.3v1.3h-1.3zM318 192h1.3v1.3h-1.3zM304 190h1.3v1.3h-1.3zM314 195h1.3v1.3h-1.3zM299 191h1.3v1.3h-1.3zM300 189h1.3v1.3h-1.3zM304 189h1.3v1.3h-1.3zM308 190h1.3v1.3h-1.3zM312 198h1.3v1.3h-1.3zM318 197h1.3v1.3h-1.3zM303 196h1.3v1.3h-1.3zM302 196h1.3v1.3h-1.3zM305 196h1.3v1.3h-1.3zM314 203h1.3v1.3h-1.3z" fill="#90c030"/><polyline points="226.0,222.0 242.0,220.0" fill="none" stroke="#c8c830" stroke-width="1.57"/><polyline points="226.3,225.6 242.3,223.6" fill="none" stroke="#c8c830" stroke-width="1.57"/><polyline points="226.6,229.2 242.6,227.2" fill="none" stroke="#c8c830" stroke-width="1.57"/><polyline points="226.9,232.8 242.9,230.8" fill="none" stroke="#c8c830" stroke-width="1.57"/><polyline points="227.2,236.4 243.2,234.4" fill="none" stroke="#c8c830" stroke-width="1.57"/><polyline points="227.5,240.0 243.5,238.0" fill="none" stroke="#c8c830" stroke-width="1.57"/><polyline points="227.8,243.6 243.8,241.6" fill="none" stroke="#c8c830" stroke-width="1.57"/><polygon points="229.0,246.0 245.0,244.0 245.0,265.0 229.0,265.0" fill="#30d070" fill-opacity="0.5"/><path d="M243 258h1.5v1.5h-1.5zM243 262h1.5v1.5h-1.5zM231 251h1.5v1.5h-1.5zM244 251h1.5v1.5h-1.5zM230 256h1.5v1.5h-1.5zM234 258h1.5v1.5h-1.5zM243 249h1.5v1.5h-1.5zM239 253h1.5v1.5h-1.5zM232 264h1.5v1.5h-1.5zM235 246h1.5v1.5h-1.5zM242 246h1.5v1.5h-1.5zM237 260h1.5v1.5h-1.5zM234 246h1.5v1.5h-1.5zM240 250h1.5v1.5h-1.5zM231 251h1.5v1.5h-1.5zM232 249h1.5v1.5h-1.5zM232 257h1.5v1.5h-1.5zM235 250h1.5v1.5h-1.5zM235 264h1.5v1.5h-1.5zM238 248h1.5v1.5h-1.5zM238 264h1.5v1.5h-1.5zM231 265h1.5v1.5h-1.5zM239 256h1.5v1.5h-1.5zM243 252h1.5v1.5h-1.5zM244 246h1.5v1.5h-1.5zM245 251h1.5v1.5h-1.5zM231 249h1.5v1.5h-1.5zM235 247h1.5v1.5h-1.5zM235 255h1.5v1.5h-1.5zM234 260h1.5v1.5h-1.5zM240 262h1.5v1.5h-1.5zM239 256h1.5v1.5h-1.5zM241 260h1.5v1.5h-1.5zM237 250h1.5v1.5h-1.5zM243 256h1.5v1.5h-1.5zM245 258h1.5v1.5h-1.5zM230 254h1.5v1.5h-1.5zM231 259h1.5v1.5h-1.5zM240 260h1.5v1.5h-1.5zM232 252h1.5v1.5h-1.5z" fill="#40e040"/><path d="M241 263h1.5v1.5h-1.5zM238 248h1.5v1.5h-1.5zM244 253h1.5v1.5h-1.5zM236 257h1.5v1.5h-1.5zM230 246h1.5v1.5h-1.5zM232 246h1.5v1.5h-1.5zM239 250h1.5v1.5h-1.5zM231 257h1.5v1.5h-1.5zM243 258h1.5v1.5h-1.5zM239 255h1.5v1.5h-1.5zM239 251h1.5v1.5h-1.5zM230 258h1.5v1.5h-1.5zM241 246h1.5v1.5h-1.5zM233 255h1.5v1.5h-1.5zM231 250h1.5v1.5h-1.5zM234 256h1.5v1.5h-1.5zM235 262h1.5v1.5h-1.5zM240 246h1.5v1.5h-1.5zM235 262h1.5v1.5h-1.5zM244 259h1.5v1.5h-1.5zM240 248h1.5v1.5h-1.5zM230 260h1.5v1.5h-1.5zM235 250h1.5v1.5h-1.5zM243 252h1.5v1.5h-1.5zM243 251h1.5v1.5h-1.5zM231 246h1.5v1.5h-1.5zM231 260h1.5v1.5h-1.5zM233 255h1.5v1.5h-1.5zM240 250h1.5v1.5h-1.5zM230 254h1.5v1.5h-1.5zM237 251h1.5v1.5h-1.5zM239 259h1.5v1.5h-1.5zM239 255h1.5v1.5h-1.5zM237 248h1.5v1.5h-1.5zM244 263h1.5v1.5h-1.5zM230 250h1.5v1.5h-1.5zM240 255h1.5v1.5h-1.5zM237 253h1.5v1.5h-1.5zM237 247h1.5v1.5h-1.5zM230 260h1.5v1.5h-1.5z" fill="#30c8a0"/><path d="M233 257h1.5v1.5h-1.5zM236 265h1.5v1.5h-1.5zM232 251h1.5v1.5h-1.5zM242 254h1.5v1.5h-1.5zM232 259h1.5v1.5h-1.5zM229 259h1.5v1.5h-1.5zM231 258h1.5v1.5h-1.5zM238 253h1.5v1.5h-1.5zM245 256h1.5v1.5h-1.5zM236 265h1.5v1.5h-1.5zM241 264h1.5v1.5h-1.5zM231 254h1.5v1.5h-1.5zM233 246h1.5v1.5h-1.5zM240 255h1.5v1.5h-1.5zM235 249h1.5v1.5h-1.5zM243 258h1.5v1.5h-1.5zM244 250h1.5v1.5h-1.5zM233 262h1.5v1.5h-1.5zM236 246h1.5v1.5h-1.5zM237 263h1.5v1.5h-1.5zM234 262h1.5v1.5h-1.5zM239 253h1.5v1.5h-1.5zM230 258h1.5v1.5h-1.5zM233 261h1.5v1.5h-1.5zM241 250h1.5v1.5h-1.5zM242 244h1.5v1.5h-1.5zM229 258h1.5v1.5h-1.5zM233 252h1.5v1.5h-1.5zM239 259h1.5v1.5h-1.5zM235 247h1.5v1.5h-1.5zM243 265h1.5v1.5h-1.5zM240 255h1.5v1.5h-1.5zM235 248h1.5v1.5h-1.5zM243 247h1.5v1.5h-1.5zM232 250h1.5v1.5h-1.5zM231 250h1.5v1.5h-1.5zM240 258h1.5v1.5h-1.5zM244 254h1.5v1.5h-1.5zM232 250h1.5v1.5h-1.5zM241 257h1.5v1.5h-1.5z" fill="#20b0e0"/><clipPath id="cp1"><polygon points="226.0,263.0 245.0,258.0 253.0,266.0 253.0,300.0 221.0,300.0"/></clipPath><polygon points="226.0,263.0 245.0,258.0 253.0,266.0 253.0,300.0 221.0,300.0" fill="#2858e8" fill-opacity="0.85"/><g clip-path="url(#cp1)"><line x1="181.0" y1="218.0" x2="293.0" y2="190.0" stroke="#1a2a90" stroke-opacity="0.5" stroke-width="1.0"/><line x1="181.0" y1="220.6" x2="293.0" y2="192.6" stroke="#1a2a90" stroke-opacity="0.5" stroke-width="1.0"/><line x1="181.0" y1="223.2" x2="293.0" y2="195.2" stroke="#1a2a90" stroke-opacity="0.5" stroke-width="1.0"/><line x1="181.0" y1="225.8" x2="293.0" y2="197.8" stroke="#1a2a90" stroke-opacity="0.5" stroke-width="1.0"/><line x1="181.0" y1="228.4" x2="293.0" y2="200.4" stroke="#1a2a90" stroke-opacity="0.5" stroke-width="1.0"/><line x1="181.0" y1="231.0" x2="293.0" y2="203.0" stroke="#1a2a90" stroke-opacity="0.5" stroke-width="1.0"/><line x1="181.0" y1="233.6" x2="293.0" y2="205.6" stroke="#1a2a90" stroke-opacity="0.5" stroke-width="1.0"/><line x1="181.0" y1="236.2" x2="293.0" y2="208.2" stroke="#1a2a90" stroke-opacity="0.5" stroke-width="1.0"/><line x1="181.0" y1="238.8" x2="293.0" y2="210.8" stroke="#1a2a90" stroke-opacity="0.5" stroke-width="1.0"/><line x1="181.0" y1="241.4" x2="293.0" y2="213.4" stroke="#1a2a90" stroke-opacity="0.5" stroke-width="1.0"/><line x1="181.0" y1="244.0" x2="293.0" y2="216.0" stroke="#1a2a90" stroke-opacity="0.5" stroke-width="1.0"/><line x1="181.0" y1="246.6" x2="293.0" y2="218.6" stroke="#1a2a90" stroke-opacity="0.5" stroke-width="1.0"/><line x1="181.0" y1="249.2" x2="293.0" y2="221.2" stroke="#1a2a90" stroke-opacity="0.5" stroke-width="1.0"/><line x1="181.0" y1="251.8" x2="293.0" y2="223.8" stroke="#1a2a90" stroke-opacity="0.5" stroke-width="1.0"/><line x1="181.0" y1="254.4" x2="293.0" y2="226.4" stroke="#1a2a90" stroke-opacity="0.5" stroke-width="1.0"/><line x1="181.0" y1="257.0" x2="293.0" y2="229.0" stroke="#1a2a90" stroke-opacity="0.5" stroke-width="1.0"/><line x1="181.0" y1="259.6" x2="293.0" y2="231.6" stroke="#1a2a90" stroke-opacity="0.5" stroke-width="1.0"/><line x1="181.0" y1="262.2" x2="293.0" y2="234.2" stroke="#1a2a90" stroke-opacity="0.5" stroke-width="1.0"/><line x1="181.0" y1="264.8" x2="293.0" y2="236.8" stroke="#1a2a90" stroke-opacity="0.5" stroke-width="1.0"/><line x1="181.0" y1="267.4" x2="293.0" y2="239.4" stroke="#1a2a90" stroke-opacity="0.5" stroke-width="1.0"/><line x1="181.0" y1="270.0" x2="293.0" y2="242.0" stroke="#1a2a90" stroke-opacity="0.5" stroke-width="1.0"/><line x1="181.0" y1="272.6" x2="293.0" y2="244.6" stroke="#1a2a90" stroke-opacity="0.5" stroke-width="1.0"/><line x1="181.0" y1="275.2" x2="293.0" y2="247.2" stroke="#1a2a90" stroke-opacity="0.5" stroke-width="1.0"/><line x1="181.0" y1="277.8" x2="293.0" y2="249.8" stroke="#1a2a90" stroke-opacity="0.5" stroke-width="1.0"/><line x1="181.0" y1="280.4" x2="293.0" y2="252.4" stroke="#1a2a90" stroke-opacity="0.5" stroke-width="1.0"/><line x1="181.0" y1="283.0" x2="293.0" y2="255.0" stroke="#1a2a90" stroke-opacity="0.5" stroke-width="1.0"/><line x1="181.0" y1="285.6" x2="293.0" y2="257.6" stroke="#1a2a90" stroke-opacity="0.5" stroke-width="1.0"/><line x1="181.0" y1="288.2" x2="293.0" y2="260.2" stroke="#1a2a90" stroke-opacity="0.5" stroke-width="1.0"/><line x1="181.0" y1="290.8" x2="293.0" y2="262.8" stroke="#1a2a90" stroke-opacity="0.5" stroke-width="1.0"/><line x1="181.0" y1="293.4" x2="293.0" y2="265.4" stroke="#1a2a90" stroke-opacity="0.5" stroke-width="1.0"/><line x1="181.0" y1="296.0" x2="293.0" y2="268.0" stroke="#1a2a90" stroke-opacity="0.5" stroke-width="1.0"/><line x1="181.0" y1="298.6" x2="293.0" y2="270.6" stroke="#1a2a90" stroke-opacity="0.5" stroke-width="1.0"/><line x1="181.0" y1="301.2" x2="293.0" y2="273.2" stroke="#1a2a90" stroke-opacity="0.5" stroke-width="1.0"/><line x1="181.0" y1="303.8" x2="293.0" y2="275.8" stroke="#1a2a90" stroke-opacity="0.5" stroke-width="1.0"/><line x1="181.0" y1="306.4" x2="293.0" y2="278.4" stroke="#1a2a90" stroke-opacity="0.5" stroke-width="1.0"/><line x1="181.0" y1="309.0" x2="293.0" y2="281.0" stroke="#1a2a90" stroke-opacity="0.5" stroke-width="1.0"/><line x1="181.0" y1="311.6" x2="293.0" y2="283.6" stroke="#1a2a90" stroke-opacity="0.5" stroke-width="1.0"/><line x1="181.0" y1="314.2" x2="293.0" y2="286.2" stroke="#1a2a90" stroke-opacity="0.5" stroke-width="1.0"/><line x1="181.0" y1="316.8" x2="293.0" y2="288.8" stroke="#1a2a90" stroke-opacity="0.5" stroke-width="1.0"/><line x1="181.0" y1="319.4" x2="293.0" y2="291.4" stroke="#1a2a90" stroke-opacity="0.5" stroke-width="1.0"/><line x1="181.0" y1="322.0" x2="293.0" y2="294.0" stroke="#1a2a90" stroke-opacity="0.5" stroke-width="1.0"/><line x1="181.0" y1="324.6" x2="293.0" y2="296.6" stroke="#1a2a90" stroke-opacity="0.5" stroke-width="1.0"/><line x1="181.0" y1="327.2" x2="293.0" y2="299.2" stroke="#1a2a90" stroke-opacity="0.5" stroke-width="1.0"/><line x1="181.0" y1="329.8" x2="293.0" y2="301.8" stroke="#1a2a90" stroke-opacity="0.5" stroke-width="1.0"/><line x1="181.0" y1="332.4" x2="293.0" y2="304.4" stroke="#1a2a90" stroke-opacity="0.5" stroke-width="1.0"/><line x1="181.0" y1="335.0" x2="293.0" y2="307.0" stroke="#1a2a90" stroke-opacity="0.5" stroke-width="1.0"/><line x1="181.0" y1="337.6" x2="293.0" y2="309.6" stroke="#1a2a90" stroke-opacity="0.5" stroke-width="1.0"/></g><polygon points="245.0,258.0 253.0,266.0 253.0,300.0 245.0,300.0" fill="#2030c0" fill-opacity="0.8"/><clipPath id="cp2"><polygon points="253.0,268.0 290.0,262.0 290.0,300.0 253.0,300.0"/></clipPath><polygon points="253.0,268.0 290.0,262.0 290.0,300.0 253.0,300.0" fill="#3060d8" fill-opacity="0.8"/><g clip-path="url(#cp2)"><line x1="213.0" y1="222.0" x2="330.0" y2="204.4" stroke="#20309a" stroke-opacity="0.45" stroke-width="1.0"/><line x1="213.0" y1="224.8" x2="330.0" y2="207.2" stroke="#20309a" stroke-opacity="0.45" stroke-width="1.0"/><line x1="213.0" y1="227.6" x2="330.0" y2="210.1" stroke="#20309a" stroke-opacity="0.45" stroke-width="1.0"/><line x1="213.0" y1="230.4" x2="330.0" y2="212.8" stroke="#20309a" stroke-opacity="0.45" stroke-width="1.0"/><line x1="213.0" y1="233.2" x2="330.0" y2="215.6" stroke="#20309a" stroke-opacity="0.45" stroke-width="1.0"/><line x1="213.0" y1="236.0" x2="330.0" y2="218.4" stroke="#20309a" stroke-opacity="0.45" stroke-width="1.0"/><line x1="213.0" y1="238.8" x2="330.0" y2="221.2" stroke="#20309a" stroke-opacity="0.45" stroke-width="1.0"/><line x1="213.0" y1="241.6" x2="330.0" y2="224.1" stroke="#20309a" stroke-opacity="0.45" stroke-width="1.0"/><line x1="213.0" y1="244.4" x2="330.0" y2="226.8" stroke="#20309a" stroke-opacity="0.45" stroke-width="1.0"/><line x1="213.0" y1="247.2" x2="330.0" y2="229.6" stroke="#20309a" stroke-opacity="0.45" stroke-width="1.0"/><line x1="213.0" y1="250.0" x2="330.0" y2="232.4" stroke="#20309a" stroke-opacity="0.45" stroke-width="1.0"/><line x1="213.0" y1="252.8" x2="330.0" y2="235.2" stroke="#20309a" stroke-opacity="0.45" stroke-width="1.0"/><line x1="213.0" y1="255.6" x2="330.0" y2="238.1" stroke="#20309a" stroke-opacity="0.45" stroke-width="1.0"/><line x1="213.0" y1="258.4" x2="330.0" y2="240.8" stroke="#20309a" stroke-opacity="0.45" stroke-width="1.0"/><line x1="213.0" y1="261.2" x2="330.0" y2="243.6" stroke="#20309a" stroke-opacity="0.45" stroke-width="1.0"/><line x1="213.0" y1="264.0" x2="330.0" y2="246.4" stroke="#20309a" stroke-opacity="0.45" stroke-width="1.0"/><line x1="213.0" y1="266.8" x2="330.0" y2="249.2" stroke="#20309a" stroke-opacity="0.45" stroke-width="1.0"/><line x1="213.0" y1="269.6" x2="330.0" y2="252.1" stroke="#20309a" stroke-opacity="0.45" stroke-width="1.0"/><line x1="213.0" y1="272.4" x2="330.0" y2="254.8" stroke="#20309a" stroke-opacity="0.45" stroke-width="1.0"/><line x1="213.0" y1="275.2" x2="330.0" y2="257.6" stroke="#20309a" stroke-opacity="0.45" stroke-width="1.0"/><line x1="213.0" y1="278.0" x2="330.0" y2="260.4" stroke="#20309a" stroke-opacity="0.45" stroke-width="1.0"/><line x1="213.0" y1="280.8" x2="330.0" y2="263.2" stroke="#20309a" stroke-opacity="0.45" stroke-width="1.0"/><line x1="213.0" y1="283.6" x2="330.0" y2="266.1" stroke="#20309a" stroke-opacity="0.45" stroke-width="1.0"/><line x1="213.0" y1="286.4" x2="330.0" y2="268.8" stroke="#20309a" stroke-opacity="0.45" stroke-width="1.0"/><line x1="213.0" y1="289.2" x2="330.0" y2="271.6" stroke="#20309a" stroke-opacity="0.45" stroke-width="1.0"/><line x1="213.0" y1="292.0" x2="330.0" y2="274.4" stroke="#20309a" stroke-opacity="0.45" stroke-width="1.0"/><line x1="213.0" y1="294.8" x2="330.0" y2="277.2" stroke="#20309a" stroke-opacity="0.45" stroke-width="1.0"/><line x1="213.0" y1="297.6" x2="330.0" y2="280.1" stroke="#20309a" stroke-opacity="0.45" stroke-width="1.0"/><line x1="213.0" y1="300.4" x2="330.0" y2="282.8" stroke="#20309a" stroke-opacity="0.45" stroke-width="1.0"/><line x1="213.0" y1="303.2" x2="330.0" y2="285.6" stroke="#20309a" stroke-opacity="0.45" stroke-width="1.0"/><line x1="213.0" y1="306.0" x2="330.0" y2="288.4" stroke="#20309a" stroke-opacity="0.45" stroke-width="1.0"/><line x1="213.0" y1="308.8" x2="330.0" y2="291.2" stroke="#20309a" stroke-opacity="0.45" stroke-width="1.0"/><line x1="213.0" y1="311.6" x2="330.0" y2="294.1" stroke="#20309a" stroke-opacity="0.45" stroke-width="1.0"/><line x1="213.0" y1="314.4" x2="330.0" y2="296.8" stroke="#20309a" stroke-opacity="0.45" stroke-width="1.0"/><line x1="213.0" y1="317.2" x2="330.0" y2="299.6" stroke="#20309a" stroke-opacity="0.45" stroke-width="1.0"/><line x1="213.0" y1="320.0" x2="330.0" y2="302.4" stroke="#20309a" stroke-opacity="0.45" stroke-width="1.0"/><line x1="213.0" y1="322.8" x2="330.0" y2="305.2" stroke="#20309a" stroke-opacity="0.45" stroke-width="1.0"/><line x1="213.0" y1="325.6" x2="330.0" y2="308.1" stroke="#20309a" stroke-opacity="0.45" stroke-width="1.0"/><line x1="213.0" y1="328.4" x2="330.0" y2="310.8" stroke="#20309a" stroke-opacity="0.45" stroke-width="1.0"/><line x1="213.0" y1="331.2" x2="330.0" y2="313.6" stroke="#20309a" stroke-opacity="0.45" stroke-width="1.0"/><line x1="213.0" y1="334.0" x2="330.0" y2="316.4" stroke="#20309a" stroke-opacity="0.45" stroke-width="1.0"/><line x1="213.0" y1="336.8" x2="330.0" y2="319.2" stroke="#20309a" stroke-opacity="0.45" stroke-width="1.0"/><line x1="213.0" y1="339.6" x2="330.0" y2="322.1" stroke="#20309a" stroke-opacity="0.45" stroke-width="1.0"/></g><polyline points="255.0,273.0 288.0,267.0" fill="none" stroke="#4a88e8" stroke-width="1.12"/><polyline points="255.0,276.6 288.0,270.6" fill="none" stroke="#4a88e8" stroke-width="1.12"/><polyline points="255.0,280.2 288.0,274.2" fill="none" stroke="#4a88e8" stroke-width="1.12"/><polyline points="255.0,283.8 288.0,277.8" fill="none" stroke="#4a88e8" stroke-width="1.12"/><polyline points="255.0,287.4 288.0,281.4" fill="none" stroke="#4a88e8" stroke-width="1.12"/><polyline points="255.0,291.0 288.0,285.0" fill="none" stroke="#4a88e8" stroke-width="1.12"/><polyline points="255.0,294.6 288.0,288.6" fill="none" stroke="#4a88e8" stroke-width="1.12"/><polyline points="255.0,298.2 288.0,292.2" fill="none" stroke="#4a88e8" stroke-width="1.12"/><polyline points="245.0,260.0 292.0,252.0" fill="none" stroke="#d8d030" stroke-width="1.46"/><polyline points="245.0,262.0 292.0,254.0" fill="none" stroke="#d8d030" stroke-width="1.46"/><polyline points="245.0,264.0 292.0,256.0" fill="none" stroke="#d8d030" stroke-width="1.46"/><polyline points="228.0,266.0 244.0,261.0" fill="none" stroke="#30d0a0" stroke-width="1.34"/><polyline points="228.0,269.0 244.0,264.0" fill="none" stroke="#30d0a0" stroke-width="1.34"/><polyline points="228.0,272.0 244.0,267.0" fill="none" stroke="#30d0a0" stroke-width="1.34"/><clipPath id="cp3"><polygon points="289.0,274.0 317.0,276.0 317.0,300.0 289.0,300.0"/></clipPath><polygon points="289.0,274.0 317.0,276.0 317.0,300.0 289.0,300.0" fill="#f04818" fill-opacity="0.9"/><g clip-path="url(#cp3)"><line x1="249.0" y1="234.0" x2="357.0" y2="239.4" stroke="#303030" stroke-opacity="0.35" stroke-width="1.0"/><line x1="249.0" y1="236.6" x2="357.0" y2="242.0" stroke="#303030" stroke-opacity="0.35" stroke-width="1.0"/><line x1="249.0" y1="239.2" x2="357.0" y2="244.6" stroke="#303030" stroke-opacity="0.35" stroke-width="1.0"/><line x1="249.0" y1="241.8" x2="357.0" y2="247.2" stroke="#303030" stroke-opacity="0.35" stroke-width="1.0"/><line x1="249.0" y1="244.4" x2="357.0" y2="249.8" stroke="#303030" stroke-opacity="0.35" stroke-width="1.0"/><line x1="249.0" y1="247.0" x2="357.0" y2="252.4" stroke="#303030" stroke-opacity="0.35" stroke-width="1.0"/><line x1="249.0" y1="249.6" x2="357.0" y2="255.0" stroke="#303030" stroke-opacity="0.35" stroke-width="1.0"/><line x1="249.0" y1="252.2" x2="357.0" y2="257.6" stroke="#303030" stroke-opacity="0.35" stroke-width="1.0"/><line x1="249.0" y1="254.8" x2="357.0" y2="260.2" stroke="#303030" stroke-opacity="0.35" stroke-width="1.0"/><line x1="249.0" y1="257.4" x2="357.0" y2="262.8" stroke="#303030" stroke-opacity="0.35" stroke-width="1.0"/><line x1="249.0" y1="260.0" x2="357.0" y2="265.4" stroke="#303030" stroke-opacity="0.35" stroke-width="1.0"/><line x1="249.0" y1="262.6" x2="357.0" y2="268.0" stroke="#303030" stroke-opacity="0.35" stroke-width="1.0"/><line x1="249.0" y1="265.2" x2="357.0" y2="270.6" stroke="#303030" stroke-opacity="0.35" stroke-width="1.0"/><line x1="249.0" y1="267.8" x2="357.0" y2="273.2" stroke="#303030" stroke-opacity="0.35" stroke-width="1.0"/><line x1="249.0" y1="270.4" x2="357.0" y2="275.8" stroke="#303030" stroke-opacity="0.35" stroke-width="1.0"/><line x1="249.0" y1="273.0" x2="357.0" y2="278.4" stroke="#303030" stroke-opacity="0.35" stroke-width="1.0"/><line x1="249.0" y1="275.6" x2="357.0" y2="281.0" stroke="#303030" stroke-opacity="0.35" stroke-width="1.0"/><line x1="249.0" y1="278.2" x2="357.0" y2="283.6" stroke="#303030" stroke-opacity="0.35" stroke-width="1.0"/><line x1="249.0" y1="280.8" x2="357.0" y2="286.2" stroke="#303030" stroke-opacity="0.35" stroke-width="1.0"/><line x1="249.0" y1="283.4" x2="357.0" y2="288.8" stroke="#303030" stroke-opacity="0.35" stroke-width="1.0"/><line x1="249.0" y1="286.0" x2="357.0" y2="291.4" stroke="#303030" stroke-opacity="0.35" stroke-width="1.0"/><line x1="249.0" y1="288.6" x2="357.0" y2="294.0" stroke="#303030" stroke-opacity="0.35" stroke-width="1.0"/><line x1="249.0" y1="291.2" x2="357.0" y2="296.6" stroke="#303030" stroke-opacity="0.35" stroke-width="1.0"/><line x1="249.0" y1="293.8" x2="357.0" y2="299.2" stroke="#303030" stroke-opacity="0.35" stroke-width="1.0"/><line x1="249.0" y1="296.4" x2="357.0" y2="301.8" stroke="#303030" stroke-opacity="0.35" stroke-width="1.0"/><line x1="249.0" y1="299.0" x2="357.0" y2="304.4" stroke="#303030" stroke-opacity="0.35" stroke-width="1.0"/><line x1="249.0" y1="301.6" x2="357.0" y2="307.0" stroke="#303030" stroke-opacity="0.35" stroke-width="1.0"/><line x1="249.0" y1="304.2" x2="357.0" y2="309.6" stroke="#303030" stroke-opacity="0.35" stroke-width="1.0"/><line x1="249.0" y1="306.8" x2="357.0" y2="312.2" stroke="#303030" stroke-opacity="0.35" stroke-width="1.0"/><line x1="249.0" y1="309.4" x2="357.0" y2="314.8" stroke="#303030" stroke-opacity="0.35" stroke-width="1.0"/><line x1="249.0" y1="312.0" x2="357.0" y2="317.4" stroke="#303030" stroke-opacity="0.35" stroke-width="1.0"/><line x1="249.0" y1="314.6" x2="357.0" y2="320.0" stroke="#303030" stroke-opacity="0.35" stroke-width="1.0"/><line x1="249.0" y1="317.2" x2="357.0" y2="322.6" stroke="#303030" stroke-opacity="0.35" stroke-width="1.0"/><line x1="249.0" y1="319.8" x2="357.0" y2="325.2" stroke="#303030" stroke-opacity="0.35" stroke-width="1.0"/><line x1="249.0" y1="322.4" x2="357.0" y2="327.8" stroke="#303030" stroke-opacity="0.35" stroke-width="1.0"/><line x1="249.0" y1="325.0" x2="357.0" y2="330.4" stroke="#303030" stroke-opacity="0.35" stroke-width="1.0"/><line x1="249.0" y1="327.6" x2="357.0" y2="333.0" stroke="#303030" stroke-opacity="0.35" stroke-width="1.0"/><line x1="249.0" y1="330.2" x2="357.0" y2="335.6" stroke="#303030" stroke-opacity="0.35" stroke-width="1.0"/><line x1="249.0" y1="332.8" x2="357.0" y2="338.2" stroke="#303030" stroke-opacity="0.35" stroke-width="1.0"/><line x1="249.0" y1="335.4" x2="357.0" y2="340.8" stroke="#303030" stroke-opacity="0.35" stroke-width="1.0"/><line x1="249.0" y1="338.0" x2="357.0" y2="343.4" stroke="#303030" stroke-opacity="0.35" stroke-width="1.0"/></g><polyline points="290.0,277.0 316.0,278.0" fill="none" stroke="#f88a20" stroke-width="1.12" stroke-dasharray="2 1"/><polyline points="290.0,281.0 316.0,282.0" fill="none" stroke="#f88a20" stroke-width="1.12" stroke-dasharray="2 1"/><polyline points="290.0,285.0 316.0,286.0" fill="none" stroke="#f88a20" stroke-width="1.12" stroke-dasharray="2 1"/><polyline points="290.0,289.0 316.0,290.0" fill="none" stroke="#f88a20" stroke-width="1.12" stroke-dasharray="2 1"/><polyline points="290.0,293.0 316.0,294.0" fill="none" stroke="#f88a20" stroke-width="1.12" stroke-dasharray="2 1"/><polyline points="290.0,297.0 316.0,298.0" fill="none" stroke="#f88a20" stroke-width="1.12" stroke-dasharray="2 1"/><polyline points="327.0,280.0 338.0,295.0" fill="none" stroke="#20c0d0" stroke-width="2.8"/><path d="M294 267h1.3v1.3h-1.3zM295 269h1.3v1.3h-1.3zM299 254h1.3v1.3h-1.3zM300 250h1.3v1.3h-1.3zM295 249h1.3v1.3h-1.3zM303 265h1.3v1.3h-1.3zM298 251h1.3v1.3h-1.3zM294 270h1.3v1.3h-1.3zM298 263h1.3v1.3h-1.3zM294 249h1.3v1.3h-1.3zM302 254h1.3v1.3h-1.3zM302 269h1.3v1.3h-1.3zM294 261h1.3v1.3h-1.3zM304 272h1.3v1.3h-1.3zM298 258h1.3v1.3h-1.3z" fill="#30b090"/><path d="M300 261h1.3v1.3h-1.3zM303 262h1.3v1.3h-1.3zM292 258h1.3v1.3h-1.3zM302 254h1.3v1.3h-1.3zM305 268h1.3v1.3h-1.3zM292 257h1.3v1.3h-1.3zM304 258h1.3v1.3h-1.3zM294 273h1.3v1.3h-1.3zM296 261h1.3v1.3h-1.3zM303 254h1.3v1.3h-1.3zM305 272h1.3v1.3h-1.3zM300 268h1.3v1.3h-1.3zM303 253h1.3v1.3h-1.3zM297 258h1.3v1.3h-1.3zM305 258h1.3v1.3h-1.3z" fill="#c0c030"/><polyline points="294.4,343.7 295.6,342.9 296.9,342.3 298.2,342.0 299.6,342.0 300.9,342.3 302.2,342.8 303.5,343.6 304.7,344.6 305.8,345.8 306.8,347.3 307.7,348.9 308.4,350.7 309.0,352.7 309.5,354.7 309.8,356.9 310.0,359.1 310.0,361.3 309.8,363.4 309.5,365.6 309.0,367.6 308.3,369.5 307.5,371.3 306.6,372.9 305.6,374.4 304.5,375.6 303.3,376.6 302.0,377.3 300.7,377.8 299.4,378.0 298.0,377.9 296.7,377.6 295.4,377.0 294.2,376.2 293.0,375.1 291.9,373.8 291.0,372.3 290.1,370.6 289.4,368.7 288.8,366.7 288.4,364.7" fill="none" stroke="#e05818" stroke-width="1.46" stroke-opacity="0.95"/><polyline points="293.3,342.1 294.9,341.3 296.4,340.7 298.1,340.3 299.7,340.3 301.3,340.6 302.9,341.2 304.5,342.0 305.9,343.1 307.2,344.5 308.5,346.1 309.6,347.9 310.5,349.9 311.2,352.0 311.8,354.2 312.2,356.6 312.4,359.0 312.4,361.4 312.2,363.8 311.7,366.1 311.1,368.3 310.4,370.4 309.4,372.4 308.3,374.2 307.1,375.7 305.7,377.1 304.2,378.1 302.7,378.9 301.1,379.5 299.5,379.7 297.8,379.6 296.2,379.3 294.6,378.6 293.1,377.7 291.7,376.5 290.4,375.1 289.2,373.4 288.2,371.6 287.3,369.6 286.6,367.4 286.1,365.1" fill="none" stroke="#e05818" stroke-width="1.46" stroke-opacity="0.95"/><polyline points="292.3,340.6 294.1,339.6 296.0,339.0 297.9,338.7 299.8,338.6 301.7,338.9 303.6,339.5 305.4,340.5 307.1,341.7 308.7,343.1 310.2,344.9 311.5,346.8 312.5,349.0 313.4,351.3 314.1,353.7 314.6,356.3 314.8,358.9 314.8,361.5 314.5,364.1 314.0,366.6 313.3,369.0 312.4,371.3 311.3,373.5 310.0,375.4 308.5,377.1 306.9,378.5 305.2,379.7 303.4,380.6 301.5,381.1 299.6,381.4 297.6,381.3 295.7,380.9 293.9,380.2 292.1,379.2 290.4,377.9 288.8,376.4 287.4,374.6 286.2,372.6 285.2,370.4 284.4,368.0 283.7,365.5" fill="none" stroke="#e05818" stroke-width="1.46" stroke-opacity="0.95"/><polyline points="291.3,339.1 293.4,338.0 295.5,337.3 297.7,337.0 300.0,336.9 302.2,337.3 304.3,337.9 306.4,338.9 308.4,340.2 310.2,341.8 311.9,343.7 313.3,345.8 314.6,348.1 315.6,350.6 316.4,353.2 316.9,356.0 317.2,358.8 317.2,361.6 316.9,364.4 316.3,367.1 315.5,369.8 314.4,372.2 313.1,374.5 311.6,376.6 310.0,378.4 308.1,380.0 306.1,381.3 304.0,382.2 301.8,382.8 299.6,383.1 297.4,383.0 295.2,382.6 293.1,381.8 291.0,380.8 289.1,379.4 287.3,377.7 285.7,375.8 284.3,373.6 283.1,371.2 282.1,368.7 281.4,366.0" fill="none" stroke="#e87020" stroke-width="1.46" stroke-opacity="0.95"/><polyline points="290.3,337.5 292.6,336.4 295.1,335.7 297.6,335.3 300.1,335.2 302.6,335.6 305.0,336.3 307.4,337.3 309.6,338.7 311.7,340.5 313.6,342.5 315.2,344.7 316.7,347.2 317.8,349.9 318.7,352.7 319.3,355.7 319.6,358.7 319.5,361.7 319.2,364.7 318.6,367.7 317.7,370.5 316.5,373.1 315.0,375.6 313.3,377.8 311.4,379.8 309.3,381.5 307.0,382.8 304.7,383.8 302.2,384.5 299.7,384.8 297.2,384.7 294.7,384.3 292.3,383.4 290.0,382.3 287.8,380.8 285.8,379.0 283.9,376.9 282.3,374.6 281.0,372.0 279.9,369.3 279.1,366.4" fill="none" stroke="#e87020" stroke-width="1.46" stroke-opacity="0.95"/><polyline points="289.3,336.0 291.9,334.8 294.6,334.0 297.4,333.6 300.2,333.5 303.0,333.9 305.7,334.7 308.4,335.8 310.8,337.3 313.2,339.1 315.3,341.3 317.1,343.7 318.7,346.4 320.0,349.2 321.0,352.3 321.7,355.4 322.0,358.6 321.9,361.8 321.6,365.1 320.9,368.2 319.8,371.2 318.5,374.0 316.9,376.7 315.0,379.1 312.8,381.2 310.5,382.9 308.0,384.4 305.3,385.5 302.6,386.2 299.8,386.5 297.0,386.4 294.2,385.9 291.5,385.1 288.9,383.8 286.5,382.2 284.2,380.3 282.2,378.1 280.4,375.6 278.9,372.8 277.7,369.9 276.8,366.9" fill="none" stroke="#e87020" stroke-width="1.46" stroke-opacity="0.95"/><polyline points="288.3,334.4 291.2,333.2 294.2,332.3 297.2,331.9 300.3,331.8 303.4,332.2 306.4,333.0 309.3,334.2 312.1,335.8 314.6,337.8 317.0,340.1 319.0,342.6 320.8,345.5 322.2,348.5 323.3,351.8 324.0,355.1 324.4,358.5 324.3,362.0 323.9,365.4 323.2,368.7 322.0,371.9 320.5,374.9 318.7,377.7 316.6,380.3 314.3,382.5 311.7,384.4 308.9,386.0 306.0,387.1 303.0,387.9 299.9,388.2 296.8,388.1 293.7,387.6 290.7,386.7 287.9,385.3 285.2,383.7 282.7,381.6 280.4,379.2 278.5,376.6 276.8,373.7 275.4,370.6 274.5,367.3" fill="none" stroke="#e89028" stroke-width="1.46" stroke-opacity="0.95"/><polyline points="287.3,332.9 290.4,331.6 293.7,330.6 297.1,330.2 300.5,330.1 303.8,330.6 307.1,331.4 310.3,332.7 313.3,334.4 316.1,336.4 318.7,338.9 320.9,341.6 322.8,344.6 324.4,347.8 325.6,351.3 326.4,354.8 326.8,358.4 326.7,362.1 326.3,365.7 325.4,369.2 324.2,372.6 322.6,375.8 320.6,378.8 318.3,381.5 315.7,383.9 312.9,385.9 309.9,387.5 306.7,388.7 303.3,389.5 300.0,389.9 296.6,389.8 293.2,389.2 289.9,388.3 286.8,386.9 283.9,385.1 281.1,382.9 278.7,380.4 276.5,377.6 274.7,374.5 273.2,371.2 272.1,367.7" fill="none" stroke="#e89028" stroke-width="1.46" stroke-opacity="0.95"/><polyline points="286.2,331.4 289.7,329.9 293.2,329.0 296.9,328.5 300.6,328.4 304.2,328.9 307.8,329.8 311.3,331.1 314.6,332.9 317.6,335.1 320.4,337.7 322.8,340.5 324.9,343.7 326.6,347.1 327.9,350.8 328.7,354.5 329.2,358.3 329.1,362.2 328.6,366.0 327.7,369.8 326.4,373.4 324.6,376.7 322.5,379.9 320.0,382.7 317.2,385.2 314.1,387.4 310.8,389.1 307.3,390.4 303.7,391.2 300.1,391.6 296.4,391.5 292.7,390.9 289.2,389.9 285.8,388.4 282.6,386.5 279.6,384.2 276.9,381.6 274.6,378.6 272.6,375.3 271.0,371.8 269.8,368.2" fill="none" stroke="#e89028" stroke-width="1.46" stroke-opacity="0.95"/><polyline points="285.2,329.8 288.9,328.3 292.8,327.3 296.7,326.8 300.7,326.7 304.7,327.2 308.5,328.2 312.3,329.6 315.8,331.5 319.1,333.8 322.1,336.5 324.7,339.5 326.9,342.8 328.8,346.5 330.2,350.3 331.1,354.2 331.6,358.3 331.5,362.3 331.0,366.4 330.0,370.3 328.5,374.1 326.6,377.6 324.3,381.0 321.6,384.0 318.6,386.6 315.3,388.8 311.7,390.7 308.0,392.0 304.1,392.9 300.1,393.3 296.2,393.2 292.2,392.6 288.4,391.5 284.7,389.9 281.2,387.9 278.0,385.5 275.2,382.7 272.6,379.6 270.5,376.1 268.8,372.5 267.5,368.6" fill="none" stroke="#e0b030" stroke-width="1.46" stroke-opacity="0.95"/><polyline points="284.2,328.3 288.2,326.7 292.3,325.6 296.6,325.1 300.8,325.0 305.1,325.5 309.2,326.5 313.2,328.0 317.0,330.0 320.5,332.4 323.7,335.3 326.6,338.5 329.0,342.0 331.0,345.8 332.5,349.8 333.5,353.9 334.0,358.2 333.9,362.4 333.4,366.7 332.3,370.8 330.7,374.8 328.7,378.5 326.2,382.0 323.3,385.2 320.1,388.0 316.5,390.3 312.7,392.2 308.6,393.6 304.5,394.6 300.2,395.0 295.9,394.9 291.7,394.2 287.6,393.1 283.7,391.5 279.9,389.4 276.5,386.8 273.4,383.9 270.7,380.6 268.4,377.0 266.5,373.1 265.2,369.1" fill="none" stroke="#e0b030" stroke-width="1.46" stroke-opacity="0.95"/><polyline points="283.2,326.7 287.4,325.1 291.9,324.0 296.4,323.4 301.0,323.4 305.5,323.9 309.9,324.9 314.2,326.5 318.3,328.5 322.0,331.1 325.4,334.0 328.5,337.4 331.1,341.1 333.2,345.1 334.8,349.3 335.8,353.6 336.3,358.1 336.3,362.6 335.7,367.0 334.6,371.3 332.9,375.5 330.7,379.4 328.1,383.1 325.0,386.4 321.5,389.3 317.7,391.8 313.6,393.8 309.3,395.3 304.9,396.2 300.3,396.7 295.7,396.6 291.2,395.9 286.8,394.7 282.6,393.0 278.6,390.8 275.0,388.1 271.6,385.0 268.7,381.6 266.3,377.8 264.3,373.7 262.9,369.5" fill="none" stroke="#e0b030" stroke-width="1.46" stroke-opacity="0.95"/><polyline points="282.2,325.2 286.7,323.5 291.4,322.3 296.2,321.7 301.1,321.7 305.9,322.2 310.6,323.3 315.2,324.9 319.5,327.1 323.5,329.7 327.1,332.8 330.4,336.4 333.1,340.2 335.4,344.4 337.1,348.8 338.2,353.3 338.7,358.0 338.7,362.7 338.1,367.3 336.9,371.9 335.1,376.2 332.8,380.3 329.9,384.2 326.6,387.6 323.0,390.7 318.9,393.3 314.6,395.3 310.0,396.9 305.2,397.9 300.4,398.4 295.5,398.3 290.7,397.6 286.0,396.3 281.6,394.5 277.3,392.2 273.4,389.4 269.9,386.2 266.8,382.6 264.2,378.6 262.1,374.4 260.6,369.9" fill="none" stroke="#d8c830" stroke-width="1.46" stroke-opacity="0.95"/><ellipse cx="299" cy="359" rx="10" ry="17" fill="#303030"/><polyline points="321.0,396.4 319.1,397.4 317.1,398.3 315.0,399.1 313.0,399.8 310.9,400.4 308.7,401.0 306.5,401.4 304.4,401.7 302.2,401.9 300.0,402.0 297.8,402.0 295.5,401.9 293.4,401.7 291.2,401.3 289.0,400.9 286.9,400.4 284.8,399.7 282.7,399.0 280.7,398.2 278.7,397.3 276.8,396.2 274.9,395.1 273.1,393.9 271.3,392.6 269.6,391.3 268.0,389.8 266.5,388.3 265.0,386.7 263.7,385.1 262.4,383.3 261.2,381.6 260.2,379.7 259.2,377.8 258.3,375.9 257.5,373.9 256.8,371.9 256.2,369.9 255.8,367.8 255.4,365.8 255.2,363.7" fill="none" stroke="#d8b030" stroke-width="1.23" stroke-dasharray="2.5 1" stroke-opacity="0.85"/><polyline points="323.2,400.3 321.1,401.4 318.9,402.4 316.7,403.3 314.4,404.1 312.1,404.8 309.7,405.4 307.3,405.8 304.9,406.2 302.5,406.4 300.1,406.5 297.6,406.5 295.2,406.4 292.8,406.1 290.4,405.8 288.0,405.3 285.6,404.7 283.3,404.0 281.0,403.2 278.8,402.3 276.6,401.2 274.5,400.1 272.4,398.9 270.4,397.6 268.5,396.1 266.6,394.6 264.9,393.0 263.2,391.3 261.6,389.6 260.1,387.7 258.7,385.8 257.4,383.9 256.2,381.8 255.1,379.7 254.1,377.6 253.2,375.4 252.5,373.2 251.9,371.0 251.4,368.7 251.0,366.4 250.7,364.1" fill="none" stroke="#d8b030" stroke-width="1.23" stroke-dasharray="2.5 1" stroke-opacity="0.85"/><polyline points="325.5,404.2 323.2,405.4 320.8,406.5 318.3,407.5 315.8,408.4 313.3,409.1 310.7,409.7 308.1,410.2 305.5,410.6 302.8,410.9 300.2,411.0 297.5,411.0 294.8,410.8 292.2,410.6 289.6,410.2 287.0,409.7 284.4,409.0 281.9,408.3 279.4,407.4 276.9,406.4 274.5,405.2 272.2,404.0 269.9,402.7 267.8,401.2 265.6,399.6 263.6,398.0 261.7,396.2 259.8,394.4 258.1,392.4 256.5,390.4 254.9,388.3 253.5,386.2 252.2,383.9 251.0,381.7 249.9,379.3 249.0,376.9 248.2,374.5 247.5,372.0 246.9,369.5 246.5,367.0 246.2,364.4" fill="none" stroke="#d8b030" stroke-width="1.23" stroke-dasharray="2.5 1" stroke-opacity="0.85"/><polyline points="327.8,408.1 325.2,409.4 322.6,410.6 320.0,411.7 317.2,412.6 314.5,413.4 311.7,414.1 308.9,414.7 306.0,415.1 303.1,415.4 300.3,415.5 297.4,415.5 294.5,415.3 291.6,415.0 288.8,414.6 285.9,414.1 283.2,413.4 280.4,412.5 277.7,411.5 275.0,410.5 272.4,409.2 269.9,407.9 267.5,406.4 265.1,404.8 262.8,403.1 260.6,401.3 258.5,399.4 256.5,397.4 254.6,395.3 252.9,393.1 251.2,390.8 249.6,388.5 248.2,386.1 246.9,383.6 245.8,381.0 244.8,378.4 243.9,375.8 243.1,373.1 242.5,370.4 242.0,367.6 241.7,364.8" fill="none" stroke="#d8b030" stroke-width="1.23" stroke-dasharray="2.5 1" stroke-opacity="0.85"/><polyline points="330.0,412.0 327.3,413.4 324.5,414.7 321.6,415.9 318.7,416.9 315.7,417.8 312.7,418.5 309.6,419.1 306.6,419.6 303.5,419.8 300.4,420.0 297.2,420.0 294.1,419.8 291.0,419.5 288.0,419.0 284.9,418.4 281.9,417.7 278.9,416.8 276.0,415.7 273.2,414.5 270.4,413.2 267.6,411.8 265.0,410.2 262.4,408.5 260.0,406.6 257.6,404.7 255.4,402.6 253.2,400.4 251.2,398.2 249.2,395.8 247.4,393.3 245.8,390.8 244.3,388.2 242.9,385.5 241.6,382.7 240.5,379.9 239.6,377.0 238.7,374.1 238.1,371.2 237.6,368.2 237.2,365.2" fill="none" stroke="#d8b030" stroke-width="1.23" stroke-dasharray="2.5 1" stroke-opacity="0.85"/><polyline points="332.2,415.9 329.3,417.4 326.3,418.8 323.2,420.1 320.1,421.2 316.9,422.1 313.7,422.9 310.4,423.5 307.1,424.0 303.8,424.3 300.5,424.5 297.1,424.5 293.8,424.3 290.5,424.0 287.2,423.5 283.9,422.8 280.7,422.0 277.5,421.0 274.4,419.9 271.3,418.6 268.3,417.2 265.4,415.6 262.5,413.9 259.8,412.1 257.2,410.1 254.6,408.0 252.2,405.8 249.9,403.5 247.7,401.0 245.6,398.5 243.7,395.8 241.9,393.1 240.3,390.3 238.8,387.4 237.5,384.4 236.3,381.4 235.2,378.3 234.4,375.2 233.7,372.0 233.1,368.8 232.8,365.6" fill="none" stroke="#d8b030" stroke-width="1.23" stroke-dasharray="2.5 1" stroke-opacity="0.85"/><polyline points="334.5,419.8 331.4,421.4 328.2,422.9 324.9,424.3 321.5,425.4 318.1,426.5 314.7,427.3 311.2,428.0 307.7,428.5 304.1,428.8 300.5,429.0 297.0,429.0 293.4,428.8 289.9,428.4 286.4,427.9 282.9,427.2 279.4,426.3 276.0,425.3 272.7,424.1 269.4,422.7 266.2,421.2 263.1,419.5 260.1,417.7 257.1,415.7 254.3,413.6 251.6,411.4 249.0,409.0 246.5,406.5 244.2,403.9 242.0,401.2 240.0,398.3 238.1,395.4 236.3,392.4 234.7,389.3 233.3,386.1 232.0,382.9 230.9,379.6 230.0,376.3 229.2,372.9 228.7,369.5 228.3,366.0" fill="none" stroke="#d8b030" stroke-width="1.23" stroke-dasharray="2.5 1" stroke-opacity="0.85"/><polyline points="336.8,423.7 333.4,425.4 330.0,427.0 326.5,428.4 323.0,429.7 319.3,430.8 315.7,431.7 311.9,432.4 308.2,433.0 304.4,433.3 300.6,433.5 296.9,433.5 293.1,433.3 289.3,432.9 285.6,432.3 281.9,431.6 278.2,430.7 274.6,429.5 271.0,428.3 267.5,426.8 264.1,425.2 260.8,423.4 257.6,421.5 254.5,419.4 251.5,417.1 248.6,414.7 245.8,412.2 243.2,409.5 240.7,406.8 238.4,403.8 236.2,400.8 234.2,397.7 232.3,394.5 230.6,391.2 229.1,387.8 227.8,384.4 226.6,380.9 225.6,377.3 224.8,373.7 224.2,370.1 223.8,366.4" fill="none" stroke="#d8b030" stroke-width="1.23" stroke-dasharray="2.5 1" stroke-opacity="0.85"/><clipPath id="cp4"><polygon points="183.0,306.0 244.0,289.0 246.0,300.0 186.0,318.0"/></clipPath><polygon points="183.0,306.0 244.0,289.0 246.0,300.0 186.0,318.0" fill="#2858e8" fill-opacity="0.9"/><g clip-path="url(#cp4)"><line x1="143.0" y1="249.0" x2="286.0" y2="209.0" stroke="#30d0e0" stroke-opacity="0.4" stroke-width="1.0"/><line x1="143.0" y1="252.0" x2="286.0" y2="212.0" stroke="#30d0e0" stroke-opacity="0.4" stroke-width="1.0"/><line x1="143.0" y1="255.0" x2="286.0" y2="215.0" stroke="#30d0e0" stroke-opacity="0.4" stroke-width="1.0"/><line x1="143.0" y1="258.0" x2="286.0" y2="218.0" stroke="#30d0e0" stroke-opacity="0.4" stroke-width="1.0"/><line x1="143.0" y1="261.0" x2="286.0" y2="221.0" stroke="#30d0e0" stroke-opacity="0.4" stroke-width="1.0"/><line x1="143.0" y1="264.0" x2="286.0" y2="224.0" stroke="#30d0e0" stroke-opacity="0.4" stroke-width="1.0"/><line x1="143.0" y1="267.0" x2="286.0" y2="227.0" stroke="#30d0e0" stroke-opacity="0.4" stroke-width="1.0"/><line x1="143.0" y1="270.0" x2="286.0" y2="230.0" stroke="#30d0e0" stroke-opacity="0.4" stroke-width="1.0"/><line x1="143.0" y1="273.0" x2="286.0" y2="233.0" stroke="#30d0e0" stroke-opacity="0.4" stroke-width="1.0"/><line x1="143.0" y1="276.0" x2="286.0" y2="236.0" stroke="#30d0e0" stroke-opacity="0.4" stroke-width="1.0"/><line x1="143.0" y1="279.0" x2="286.0" y2="239.0" stroke="#30d0e0" stroke-opacity="0.4" stroke-width="1.0"/><line x1="143.0" y1="282.0" x2="286.0" y2="242.0" stroke="#30d0e0" stroke-opacity="0.4" stroke-width="1.0"/><line x1="143.0" y1="285.0" x2="286.0" y2="245.0" stroke="#30d0e0" stroke-opacity="0.4" stroke-width="1.0"/><line x1="143.0" y1="288.0" x2="286.0" y2="248.0" stroke="#30d0e0" stroke-opacity="0.4" stroke-width="1.0"/><line x1="143.0" y1="291.0" x2="286.0" y2="251.0" stroke="#30d0e0" stroke-opacity="0.4" stroke-width="1.0"/><line x1="143.0" y1="294.0" x2="286.0" y2="254.0" stroke="#30d0e0" stroke-opacity="0.4" stroke-width="1.0"/><line x1="143.0" y1="297.0" x2="286.0" y2="257.0" stroke="#30d0e0" stroke-opacity="0.4" stroke-width="1.0"/><line x1="143.0" y1="300.0" x2="286.0" y2="260.0" stroke="#30d0e0" stroke-opacity="0.4" stroke-width="1.0"/><line x1="143.0" y1="303.0" x2="286.0" y2="263.0" stroke="#30d0e0" stroke-opacity="0.4" stroke-width="1.0"/><line x1="143.0" y1="306.0" x2="286.0" y2="266.0" stroke="#30d0e0" stroke-opacity="0.4" stroke-width="1.0"/><line x1="143.0" y1="309.0" x2="286.0" y2="269.0" stroke="#30d0e0" stroke-opacity="0.4" stroke-width="1.0"/><line x1="143.0" y1="312.0" x2="286.0" y2="272.0" stroke="#30d0e0" stroke-opacity="0.4" stroke-width="1.0"/><line x1="143.0" y1="315.0" x2="286.0" y2="275.0" stroke="#30d0e0" stroke-opacity="0.4" stroke-width="1.0"/><line x1="143.0" y1="318.0" x2="286.0" y2="278.0" stroke="#30d0e0" stroke-opacity="0.4" stroke-width="1.0"/><line x1="143.0" y1="321.0" x2="286.0" y2="281.0" stroke="#30d0e0" stroke-opacity="0.4" stroke-width="1.0"/><line x1="143.0" y1="324.0" x2="286.0" y2="284.0" stroke="#30d0e0" stroke-opacity="0.4" stroke-width="1.0"/><line x1="143.0" y1="327.0" x2="286.0" y2="287.0" stroke="#30d0e0" stroke-opacity="0.4" stroke-width="1.0"/><line x1="143.0" y1="330.0" x2="286.0" y2="290.0" stroke="#30d0e0" stroke-opacity="0.4" stroke-width="1.0"/><line x1="143.0" y1="333.0" x2="286.0" y2="293.0" stroke="#30d0e0" stroke-opacity="0.4" stroke-width="1.0"/><line x1="143.0" y1="336.0" x2="286.0" y2="296.0" stroke="#30d0e0" stroke-opacity="0.4" stroke-width="1.0"/><line x1="143.0" y1="339.0" x2="286.0" y2="299.0" stroke="#30d0e0" stroke-opacity="0.4" stroke-width="1.0"/><line x1="143.0" y1="342.0" x2="286.0" y2="302.0" stroke="#30d0e0" stroke-opacity="0.4" stroke-width="1.0"/><line x1="143.0" y1="345.0" x2="286.0" y2="305.0" stroke="#30d0e0" stroke-opacity="0.4" stroke-width="1.0"/><line x1="143.0" y1="348.0" x2="286.0" y2="308.0" stroke="#30d0e0" stroke-opacity="0.4" stroke-width="1.0"/><line x1="143.0" y1="351.0" x2="286.0" y2="311.0" stroke="#30d0e0" stroke-opacity="0.4" stroke-width="1.0"/><line x1="143.0" y1="354.0" x2="286.0" y2="314.0" stroke="#30d0e0" stroke-opacity="0.4" stroke-width="1.0"/><line x1="143.0" y1="357.0" x2="286.0" y2="317.0" stroke="#30d0e0" stroke-opacity="0.4" stroke-width="1.0"/></g><polygon points="190.0,318.0 223.0,306.0 247.0,296.0 244.0,318.0 255.0,340.0 261.0,349.0 250.0,365.0 223.0,349.0 201.0,343.0" fill="#30d848" fill-opacity="0.75"/><polyline points="194.0,320.0 228.0,308.0" fill="none" stroke="#20e0a0" stroke-width="1.23" stroke-dasharray="2 1.2"/><polyline points="196.5,322.2 230.2,311.2" fill="none" stroke="#60f040" stroke-width="1.23" stroke-dasharray="2 1.2"/><polyline points="199.0,324.4 232.4,314.4" fill="none" stroke="#30c8d0" stroke-width="1.23" stroke-dasharray="2 1.2"/><polyline points="201.5,326.6 234.6,317.6" fill="none" stroke="#2aa0e8" stroke-width="1.23" stroke-dasharray="2 1.2"/><polyline points="204.0,328.8 236.8,320.8" fill="none" stroke="#20e0a0" stroke-width="1.23" stroke-dasharray="2 1.2"/><polyline points="206.5,331.0 239.0,324.0" fill="none" stroke="#60f040" stroke-width="1.23" stroke-dasharray="2 1.2"/><polyline points="209.0,333.2 241.2,327.2" fill="none" stroke="#30c8d0" stroke-width="1.23" stroke-dasharray="2 1.2"/><polyline points="211.5,335.4 243.4,330.4" fill="none" stroke="#2aa0e8" stroke-width="1.23" stroke-dasharray="2 1.2"/><polyline points="214.0,337.6 245.6,333.6" fill="none" stroke="#20e0a0" stroke-width="1.23" stroke-dasharray="2 1.2"/><polyline points="216.5,339.8 247.8,336.8" fill="none" stroke="#60f040" stroke-width="1.23" stroke-dasharray="2 1.2"/><polyline points="219.0,342.0 250.0,340.0" fill="none" stroke="#30c8d0" stroke-width="1.23" stroke-dasharray="2 1.2"/><polyline points="221.5,344.2 252.2,343.2" fill="none" stroke="#2aa0e8" stroke-width="1.23" stroke-dasharray="2 1.2"/><polyline points="210.0,336.0 238.0,358.0" fill="none" stroke="#20c8e0" stroke-width="1.46"/><polyline points="213.5,334.5 241.5,356.5" fill="none" stroke="#20c8e0" stroke-width="1.46"/><polyline points="217.0,333.0 245.0,355.0" fill="none" stroke="#20c8e0" stroke-width="1.46"/><polyline points="220.5,331.5 248.5,353.5" fill="none" stroke="#20c8e0" stroke-width="1.46"/><polyline points="203.0,320.0 238.0,365.0" fill="none" stroke="#2890e8" stroke-width="2.24"/><polyline points="206.0,318.0 241.0,363.0" fill="none" stroke="#2890e8" stroke-width="2.24"/><polyline points="209.0,316.0 244.0,361.0" fill="none" stroke="#2890e8" stroke-width="2.24"/><polyline points="228.0,328.0 258.0,353.0" fill="none" stroke="#20d0c0" stroke-width="1.57"/><polyline points="230.0,326.0 260.0,351.0" fill="none" stroke="#20d0c0" stroke-width="1.57"/><polyline points="232.0,324.0 262.0,349.0" fill="none" stroke="#20d0c0" stroke-width="1.57"/><polyline points="234.0,322.0 264.0,347.0" fill="none" stroke="#20d0c0" stroke-width="1.57"/><polyline points="198.0,316.0 238.0,304.0" fill="none" stroke="#50f060" stroke-width="1.34" stroke-dasharray="2 1"/><polyline points="199.0,321.0 239.0,309.0" fill="none" stroke="#50f060" stroke-width="1.34" stroke-dasharray="2 1"/><polyline points="200.0,326.0 240.0,314.0" fill="none" stroke="#50f060" stroke-width="1.34" stroke-dasharray="2 1"/><polyline points="201.0,331.0 241.0,319.0" fill="none" stroke="#50f060" stroke-width="1.34" stroke-dasharray="2 1"/><polyline points="202.0,336.0 242.0,324.0" fill="none" stroke="#50f060" stroke-width="1.34" stroke-dasharray="2 1"/><polygon points="193.0,328.0 203.0,324.0 208.0,348.0 196.0,346.0" fill="#e0a020" fill-opacity="0.7"/><clipPath id="cp5"><polygon points="255.0,354.0 283.0,353.0 285.0,373.0 273.0,384.0 260.0,373.0"/></clipPath><polygon points="255.0,354.0 283.0,353.0 285.0,373.0 273.0,384.0 260.0,373.0" fill="#e83018" fill-opacity="0.95"/><g clip-path="url(#cp5)"><line x1="215.0" y1="313.0" x2="325.0" y2="346.0" stroke="#303030" stroke-opacity="0.3" stroke-width="1.0"/><line x1="215.0" y1="315.6" x2="325.0" y2="348.6" stroke="#303030" stroke-opacity="0.3" stroke-width="1.0"/><line x1="215.0" y1="318.2" x2="325.0" y2="351.2" stroke="#303030" stroke-opacity="0.3" stroke-width="1.0"/><line x1="215.0" y1="320.8" x2="325.0" y2="353.8" stroke="#303030" stroke-opacity="0.3" stroke-width="1.0"/><line x1="215.0" y1="323.4" x2="325.0" y2="356.4" stroke="#303030" stroke-opacity="0.3" stroke-width="1.0"/><line x1="215.0" y1="326.0" x2="325.0" y2="359.0" stroke="#303030" stroke-opacity="0.3" stroke-width="1.0"/><line x1="215.0" y1="328.6" x2="325.0" y2="361.6" stroke="#303030" stroke-opacity="0.3" stroke-width="1.0"/><line x1="215.0" y1="331.2" x2="325.0" y2="364.2" stroke="#303030" stroke-opacity="0.3" stroke-width="1.0"/><line x1="215.0" y1="333.8" x2="325.0" y2="366.8" stroke="#303030" stroke-opacity="0.3" stroke-width="1.0"/><line x1="215.0" y1="336.4" x2="325.0" y2="369.4" stroke="#303030" stroke-opacity="0.3" stroke-width="1.0"/><line x1="215.0" y1="339.0" x2="325.0" y2="372.0" stroke="#303030" stroke-opacity="0.3" stroke-width="1.0"/><line x1="215.0" y1="341.6" x2="325.0" y2="374.6" stroke="#303030" stroke-opacity="0.3" stroke-width="1.0"/><line x1="215.0" y1="344.2" x2="325.0" y2="377.2" stroke="#303030" stroke-opacity="0.3" stroke-width="1.0"/><line x1="215.0" y1="346.8" x2="325.0" y2="379.8" stroke="#303030" stroke-opacity="0.3" stroke-width="1.0"/><line x1="215.0" y1="349.4" x2="325.0" y2="382.4" stroke="#303030" stroke-opacity="0.3" stroke-width="1.0"/><line x1="215.0" y1="352.0" x2="325.0" y2="385.0" stroke="#303030" stroke-opacity="0.3" stroke-width="1.0"/><line x1="215.0" y1="354.6" x2="325.0" y2="387.6" stroke="#303030" stroke-opacity="0.3" stroke-width="1.0"/><line x1="215.0" y1="357.2" x2="325.0" y2="390.2" stroke="#303030" stroke-opacity="0.3" stroke-width="1.0"/><line x1="215.0" y1="359.8" x2="325.0" y2="392.8" stroke="#303030" stroke-opacity="0.3" stroke-width="1.0"/><line x1="215.0" y1="362.4" x2="325.0" y2="395.4" stroke="#303030" stroke-opacity="0.3" stroke-width="1.0"/><line x1="215.0" y1="365.0" x2="325.0" y2="398.0" stroke="#303030" stroke-opacity="0.3" stroke-width="1.0"/><line x1="215.0" y1="367.6" x2="325.0" y2="400.6" stroke="#303030" stroke-opacity="0.3" stroke-width="1.0"/><line x1="215.0" y1="370.2" x2="325.0" y2="403.2" stroke="#303030" stroke-opacity="0.3" stroke-width="1.0"/><line x1="215.0" y1="372.8" x2="325.0" y2="405.8" stroke="#303030" stroke-opacity="0.3" stroke-width="1.0"/><line x1="215.0" y1="375.4" x2="325.0" y2="408.4" stroke="#303030" stroke-opacity="0.3" stroke-width="1.0"/><line x1="215.0" y1="378.0" x2="325.0" y2="411.0" stroke="#303030" stroke-opacity="0.3" stroke-width="1.0"/><line x1="215.0" y1="380.6" x2="325.0" y2="413.6" stroke="#303030" stroke-opacity="0.3" stroke-width="1.0"/><line x1="215.0" y1="383.2" x2="325.0" y2="416.2" stroke="#303030" stroke-opacity="0.3" stroke-width="1.0"/><line x1="215.0" y1="385.8" x2="325.0" y2="418.8" stroke="#303030" stroke-opacity="0.3" stroke-width="1.0"/><line x1="215.0" y1="388.4" x2="325.0" y2="421.4" stroke="#303030" stroke-opacity="0.3" stroke-width="1.0"/><line x1="215.0" y1="391.0" x2="325.0" y2="424.0" stroke="#303030" stroke-opacity="0.3" stroke-width="1.0"/><line x1="215.0" y1="393.6" x2="325.0" y2="426.6" stroke="#303030" stroke-opacity="0.3" stroke-width="1.0"/><line x1="215.0" y1="396.2" x2="325.0" y2="429.2" stroke="#303030" stroke-opacity="0.3" stroke-width="1.0"/><line x1="215.0" y1="398.8" x2="325.0" y2="431.8" stroke="#303030" stroke-opacity="0.3" stroke-width="1.0"/><line x1="215.0" y1="401.4" x2="325.0" y2="434.4" stroke="#303030" stroke-opacity="0.3" stroke-width="1.0"/><line x1="215.0" y1="404.0" x2="325.0" y2="437.0" stroke="#303030" stroke-opacity="0.3" stroke-width="1.0"/><line x1="215.0" y1="406.6" x2="325.0" y2="439.6" stroke="#303030" stroke-opacity="0.3" stroke-width="1.0"/><line x1="215.0" y1="409.2" x2="325.0" y2="442.2" stroke="#303030" stroke-opacity="0.3" stroke-width="1.0"/><line x1="215.0" y1="411.8" x2="325.0" y2="444.8" stroke="#303030" stroke-opacity="0.3" stroke-width="1.0"/><line x1="215.0" y1="414.4" x2="325.0" y2="447.4" stroke="#303030" stroke-opacity="0.3" stroke-width="1.0"/><line x1="215.0" y1="417.0" x2="325.0" y2="450.0" stroke="#303030" stroke-opacity="0.3" stroke-width="1.0"/><line x1="215.0" y1="419.6" x2="325.0" y2="452.6" stroke="#303030" stroke-opacity="0.3" stroke-width="1.0"/><line x1="215.0" y1="422.2" x2="325.0" y2="455.2" stroke="#303030" stroke-opacity="0.3" stroke-width="1.0"/></g><clipPath id="cp6"><polygon points="256.0,336.0 283.0,335.0 283.0,354.0 263.0,357.0"/></clipPath><polygon points="256.0,336.0 283.0,335.0 283.0,354.0 263.0,357.0" fill="#40e040" fill-opacity="0.95"/><g clip-path="url(#cp6)"><line x1="216.0" y1="295.0" x2="323.0" y2="273.6" stroke="#20a060" stroke-opacity="0.4" stroke-width="1.0"/><line x1="216.0" y1="297.6" x2="323.0" y2="276.2" stroke="#20a060" stroke-opacity="0.4" stroke-width="1.0"/><line x1="216.0" y1="300.2" x2="323.0" y2="278.8" stroke="#20a060" stroke-opacity="0.4" stroke-width="1.0"/><line x1="216.0" y1="302.8" x2="323.0" y2="281.4" stroke="#20a060" stroke-opacity="0.4" stroke-width="1.0"/><line x1="216.0" y1="305.4" x2="323.0" y2="284.0" stroke="#20a060" stroke-opacity="0.4" stroke-width="1.0"/><line x1="216.0" y1="308.0" x2="323.0" y2="286.6" stroke="#20a060" stroke-opacity="0.4" stroke-width="1.0"/><line x1="216.0" y1="310.6" x2="323.0" y2="289.2" stroke="#20a060" stroke-opacity="0.4" stroke-width="1.0"/><line x1="216.0" y1="313.2" x2="323.0" y2="291.8" stroke="#20a060" stroke-opacity="0.4" stroke-width="1.0"/><line x1="216.0" y1="315.8" x2="323.0" y2="294.4" stroke="#20a060" stroke-opacity="0.4" stroke-width="1.0"/><line x1="216.0" y1="318.4" x2="323.0" y2="297.0" stroke="#20a060" stroke-opacity="0.4" stroke-width="1.0"/><line x1="216.0" y1="321.0" x2="323.0" y2="299.6" stroke="#20a060" stroke-opacity="0.4" stroke-width="1.0"/><line x1="216.0" y1="323.6" x2="323.0" y2="302.2" stroke="#20a060" stroke-opacity="0.4" stroke-width="1.0"/><line x1="216.0" y1="326.2" x2="323.0" y2="304.8" stroke="#20a060" stroke-opacity="0.4" stroke-width="1.0"/><line x1="216.0" y1="328.8" x2="323.0" y2="307.4" stroke="#20a060" stroke-opacity="0.4" stroke-width="1.0"/><line x1="216.0" y1="331.4" x2="323.0" y2="310.0" stroke="#20a060" stroke-opacity="0.4" stroke-width="1.0"/><line x1="216.0" y1="334.0" x2="323.0" y2="312.6" stroke="#20a060" stroke-opacity="0.4" stroke-width="1.0"/><line x1="216.0" y1="336.6" x2="323.0" y2="315.2" stroke="#20a060" stroke-opacity="0.4" stroke-width="1.0"/><line x1="216.0" y1="339.2" x2="323.0" y2="317.8" stroke="#20a060" stroke-opacity="0.4" stroke-width="1.0"/><line x1="216.0" y1="341.8" x2="323.0" y2="320.4" stroke="#20a060" stroke-opacity="0.4" stroke-width="1.0"/><line x1="216.0" y1="344.4" x2="323.0" y2="323.0" stroke="#20a060" stroke-opacity="0.4" stroke-width="1.0"/><line x1="216.0" y1="347.0" x2="323.0" y2="325.6" stroke="#20a060" stroke-opacity="0.4" stroke-width="1.0"/><line x1="216.0" y1="349.6" x2="323.0" y2="328.2" stroke="#20a060" stroke-opacity="0.4" stroke-width="1.0"/><line x1="216.0" y1="352.2" x2="323.0" y2="330.8" stroke="#20a060" stroke-opacity="0.4" stroke-width="1.0"/><line x1="216.0" y1="354.8" x2="323.0" y2="333.4" stroke="#20a060" stroke-opacity="0.4" stroke-width="1.0"/><line x1="216.0" y1="357.4" x2="323.0" y2="336.0" stroke="#20a060" stroke-opacity="0.4" stroke-width="1.0"/><line x1="216.0" y1="360.0" x2="323.0" y2="338.6" stroke="#20a060" stroke-opacity="0.4" stroke-width="1.0"/><line x1="216.0" y1="362.6" x2="323.0" y2="341.2" stroke="#20a060" stroke-opacity="0.4" stroke-width="1.0"/><line x1="216.0" y1="365.2" x2="323.0" y2="343.8" stroke="#20a060" stroke-opacity="0.4" stroke-width="1.0"/><line x1="216.0" y1="367.8" x2="323.0" y2="346.4" stroke="#20a060" stroke-opacity="0.4" stroke-width="1.0"/><line x1="216.0" y1="370.4" x2="323.0" y2="349.0" stroke="#20a060" stroke-opacity="0.4" stroke-width="1.0"/><line x1="216.0" y1="373.0" x2="323.0" y2="351.6" stroke="#20a060" stroke-opacity="0.4" stroke-width="1.0"/><line x1="216.0" y1="375.6" x2="323.0" y2="354.2" stroke="#20a060" stroke-opacity="0.4" stroke-width="1.0"/><line x1="216.0" y1="378.2" x2="323.0" y2="356.8" stroke="#20a060" stroke-opacity="0.4" stroke-width="1.0"/><line x1="216.0" y1="380.8" x2="323.0" y2="359.4" stroke="#20a060" stroke-opacity="0.4" stroke-width="1.0"/><line x1="216.0" y1="383.4" x2="323.0" y2="362.0" stroke="#20a060" stroke-opacity="0.4" stroke-width="1.0"/><line x1="216.0" y1="386.0" x2="323.0" y2="364.6" stroke="#20a060" stroke-opacity="0.4" stroke-width="1.0"/><line x1="216.0" y1="388.6" x2="323.0" y2="367.2" stroke="#20a060" stroke-opacity="0.4" stroke-width="1.0"/><line x1="216.0" y1="391.2" x2="323.0" y2="369.8" stroke="#20a060" stroke-opacity="0.4" stroke-width="1.0"/><line x1="216.0" y1="393.8" x2="323.0" y2="372.4" stroke="#20a060" stroke-opacity="0.4" stroke-width="1.0"/><line x1="216.0" y1="396.4" x2="323.0" y2="375.0" stroke="#20a060" stroke-opacity="0.4" stroke-width="1.0"/></g><polygon points="271.0,344.0 280.0,344.0 280.0,349.0 271.0,349.0" fill="#30c0e0" fill-opacity="1"/><clipPath id="cp7"><polygon points="283.0,336.0 299.0,343.0 299.0,365.0 288.0,371.0 283.0,354.0"/></clipPath><polygon points="283.0,336.0 299.0,343.0 299.0,365.0 288.0,371.0 283.0,354.0" fill="#38e050" fill-opacity="0.9"/><g clip-path="url(#cp7)"><line x1="243.0" y1="296.0" x2="271.8" y2="392.0" stroke="#208060" stroke-opacity="0.4" stroke-width="1.0"/><line x1="243.0" y1="298.6" x2="271.8" y2="394.6" stroke="#208060" stroke-opacity="0.4" stroke-width="1.0"/><line x1="243.0" y1="301.2" x2="271.8" y2="397.2" stroke="#208060" stroke-opacity="0.4" stroke-width="1.0"/><line x1="243.0" y1="303.8" x2="271.8" y2="399.8" stroke="#208060" stroke-opacity="0.4" stroke-width="1.0"/><line x1="243.0" y1="306.4" x2="271.8" y2="402.4" stroke="#208060" stroke-opacity="0.4" stroke-width="1.0"/><line x1="243.0" y1="309.0" x2="271.8" y2="405.0" stroke="#208060" stroke-opacity="0.4" stroke-width="1.0"/><line x1="243.0" y1="311.6" x2="271.8" y2="407.6" stroke="#208060" stroke-opacity="0.4" stroke-width="1.0"/><line x1="243.0" y1="314.2" x2="271.8" y2="410.2" stroke="#208060" stroke-opacity="0.4" stroke-width="1.0"/><line x1="243.0" y1="316.8" x2="271.8" y2="412.8" stroke="#208060" stroke-opacity="0.4" stroke-width="1.0"/><line x1="243.0" y1="319.4" x2="271.8" y2="415.4" stroke="#208060" stroke-opacity="0.4" stroke-width="1.0"/><line x1="243.0" y1="322.0" x2="271.8" y2="418.0" stroke="#208060" stroke-opacity="0.4" stroke-width="1.0"/><line x1="243.0" y1="324.6" x2="271.8" y2="420.6" stroke="#208060" stroke-opacity="0.4" stroke-width="1.0"/><line x1="243.0" y1="327.2" x2="271.8" y2="423.2" stroke="#208060" stroke-opacity="0.4" stroke-width="1.0"/><line x1="243.0" y1="329.8" x2="271.8" y2="425.8" stroke="#208060" stroke-opacity="0.4" stroke-width="1.0"/><line x1="243.0" y1="332.4" x2="271.8" y2="428.4" stroke="#208060" stroke-opacity="0.4" stroke-width="1.0"/><line x1="243.0" y1="335.0" x2="271.8" y2="431.0" stroke="#208060" stroke-opacity="0.4" stroke-width="1.0"/><line x1="243.0" y1="337.6" x2="271.8" y2="433.6" stroke="#208060" stroke-opacity="0.4" stroke-width="1.0"/><line x1="243.0" y1="340.2" x2="271.8" y2="436.2" stroke="#208060" stroke-opacity="0.4" stroke-width="1.0"/><line x1="243.0" y1="342.8" x2="271.8" y2="438.8" stroke="#208060" stroke-opacity="0.4" stroke-width="1.0"/><line x1="243.0" y1="345.4" x2="271.8" y2="441.4" stroke="#208060" stroke-opacity="0.4" stroke-width="1.0"/><line x1="243.0" y1="348.0" x2="271.8" y2="444.0" stroke="#208060" stroke-opacity="0.4" stroke-width="1.0"/><line x1="243.0" y1="350.6" x2="271.8" y2="446.6" stroke="#208060" stroke-opacity="0.4" stroke-width="1.0"/><line x1="243.0" y1="353.2" x2="271.8" y2="449.2" stroke="#208060" stroke-opacity="0.4" stroke-width="1.0"/><line x1="243.0" y1="355.8" x2="271.8" y2="451.8" stroke="#208060" stroke-opacity="0.4" stroke-width="1.0"/><line x1="243.0" y1="358.4" x2="271.8" y2="454.4" stroke="#208060" stroke-opacity="0.4" stroke-width="1.0"/><line x1="243.0" y1="361.0" x2="271.8" y2="457.0" stroke="#208060" stroke-opacity="0.4" stroke-width="1.0"/><line x1="243.0" y1="363.6" x2="271.8" y2="459.6" stroke="#208060" stroke-opacity="0.4" stroke-width="1.0"/><line x1="243.0" y1="366.2" x2="271.8" y2="462.2" stroke="#208060" stroke-opacity="0.4" stroke-width="1.0"/><line x1="243.0" y1="368.8" x2="271.8" y2="464.8" stroke="#208060" stroke-opacity="0.4" stroke-width="1.0"/><line x1="243.0" y1="371.4" x2="271.8" y2="467.4" stroke="#208060" stroke-opacity="0.4" stroke-width="1.0"/><line x1="243.0" y1="374.0" x2="271.8" y2="470.0" stroke="#208060" stroke-opacity="0.4" stroke-width="1.0"/><line x1="243.0" y1="376.6" x2="271.8" y2="472.6" stroke="#208060" stroke-opacity="0.4" stroke-width="1.0"/><line x1="243.0" y1="379.2" x2="271.8" y2="475.2" stroke="#208060" stroke-opacity="0.4" stroke-width="1.0"/><line x1="243.0" y1="381.8" x2="271.8" y2="477.8" stroke="#208060" stroke-opacity="0.4" stroke-width="1.0"/><line x1="243.0" y1="384.4" x2="271.8" y2="480.4" stroke="#208060" stroke-opacity="0.4" stroke-width="1.0"/><line x1="243.0" y1="387.0" x2="271.8" y2="483.0" stroke="#208060" stroke-opacity="0.4" stroke-width="1.0"/><line x1="243.0" y1="389.6" x2="271.8" y2="485.6" stroke="#208060" stroke-opacity="0.4" stroke-width="1.0"/><line x1="243.0" y1="392.2" x2="271.8" y2="488.2" stroke="#208060" stroke-opacity="0.4" stroke-width="1.0"/><line x1="243.0" y1="394.8" x2="271.8" y2="490.8" stroke="#208060" stroke-opacity="0.4" stroke-width="1.0"/><line x1="243.0" y1="397.4" x2="271.8" y2="493.4" stroke="#208060" stroke-opacity="0.4" stroke-width="1.0"/><line x1="243.0" y1="400.0" x2="271.8" y2="496.0" stroke="#208060" stroke-opacity="0.4" stroke-width="1.0"/><line x1="243.0" y1="402.6" x2="271.8" y2="498.6" stroke="#208060" stroke-opacity="0.4" stroke-width="1.0"/><line x1="243.0" y1="405.2" x2="271.8" y2="501.2" stroke="#208060" stroke-opacity="0.4" stroke-width="1.0"/><line x1="243.0" y1="407.8" x2="271.8" y2="503.8" stroke="#208060" stroke-opacity="0.4" stroke-width="1.0"/><line x1="243.0" y1="410.4" x2="271.8" y2="506.4" stroke="#208060" stroke-opacity="0.4" stroke-width="1.0"/></g><polyline points="205.0,354.0 228.0,366.0 255.0,378.0" fill="none" stroke="#d8a028" stroke-width="1.23" stroke-dasharray="2 1"/><polyline points="205.0,359.5 228.0,371.0 255.0,382.0" fill="none" stroke="#d8a028" stroke-width="1.23" stroke-dasharray="2 1"/><polyline points="205.0,365.0 228.0,376.0 255.0,386.0" fill="none" stroke="#d8a028" stroke-width="1.23" stroke-dasharray="2 1"/><polyline points="205.0,370.5 228.0,381.0 255.0,390.0" fill="none" stroke="#d8a028" stroke-width="1.23" stroke-dasharray="2 1"/><polyline points="205.0,376.0 228.0,386.0 255.0,394.0" fill="none" stroke="#d8a028" stroke-width="1.23" stroke-dasharray="2 1"/><polyline points="205.0,381.5 228.0,391.0 255.0,398.0" fill="none" stroke="#d8a028" stroke-width="1.23" stroke-dasharray="2 1"/><polyline points="205.0,387.0 228.0,396.0 255.0,402.0" fill="none" stroke="#d8a028" stroke-width="1.23" stroke-dasharray="2 1"/><polyline points="205.0,392.5 228.0,401.0 255.0,406.0" fill="none" stroke="#d8a028" stroke-width="1.23" stroke-dasharray="2 1"/><polyline points="205.0,398.0 228.0,406.0 255.0,410.0" fill="none" stroke="#d8a028" stroke-width="1.23" stroke-dasharray="2 1"/><polyline points="212.0,382.0 237.0,408.0" fill="none" stroke="#20c0d0" stroke-width="2.24"/><polyline points="178.0,365.0 199.0,408.0" fill="none" stroke="#2890d8" stroke-width="2.24"/><polygon points="291.0,288.0 315.0,288.0 315.0,302.0 291.0,302.0" fill="#e85020" fill-opacity="0.8"/><path d="M309 309h1.4v1.4h-1.4zM292 308h1.4v1.4h-1.4zM308 311h1.4v1.4h-1.4zM301 325h1.4v1.4h-1.4zM304 307h1.4v1.4h-1.4zM295 310h1.4v1.4h-1.4zM309 321h1.4v1.4h-1.4zM303 318h1.4v1.4h-1.4zM295 322h1.4v1.4h-1.4zM291 323h1.4v1.4h-1.4zM289 317h1.4v1.4h-1.4zM299 316h1.4v1.4h-1.4zM308 312h1.4v1.4h-1.4zM295 318h1.4v1.4h-1.4zM303 317h1.4v1.4h-1.4zM296 315h1.4v1.4h-1.4zM309 316h1.4v1.4h-1.4zM308 309h1.4v1.4h-1.4zM295 313h1.4v1.4h-1.4zM300 322h1.4v1.4h-1.4zM303 307h1.4v1.4h-1.4zM308 315h1.4v1.4h-1.4zM300 318h1.4v1.4h-1.4zM298 321h1.4v1.4h-1.4zM305 322h1.4v1.4h-1.4zM288 316h1.4v1.4h-1.4zM292 320h1.4v1.4h-1.4zM289 325h1.4v1.4h-1.4zM293 311h1.4v1.4h-1.4zM294 308h1.4v1.4h-1.4z" fill="#c83020"/><path d="M289 326h1.4v1.4h-1.4zM302 313h1.4v1.4h-1.4zM309 312h1.4v1.4h-1.4zM303 324h1.4v1.4h-1.4zM307 318h1.4v1.4h-1.4zM307 318h1.4v1.4h-1.4zM309 317h1.4v1.4h-1.4zM294 325h1.4v1.4h-1.4zM309 319h1.4v1.4h-1.4zM303 310h1.4v1.4h-1.4zM289 325h1.4v1.4h-1.4zM297 319h1.4v1.4h-1.4zM296 318h1.4v1.4h-1.4zM300 315h1.4v1.4h-1.4zM290 326h1.4v1.4h-1.4zM297 325h1.4v1.4h-1.4zM297 308h1.4v1.4h-1.4zM300 313h1.4v1.4h-1.4zM292 307h1.4v1.4h-1.4zM302 310h1.4v1.4h-1.4zM297 323h1.4v1.4h-1.4zM307 316h1.4v1.4h-1.4zM310 321h1.4v1.4h-1.4zM302 313h1.4v1.4h-1.4zM301 325h1.4v1.4h-1.4zM302 313h1.4v1.4h-1.4zM298 311h1.4v1.4h-1.4zM296 308h1.4v1.4h-1.4zM307 310h1.4v1.4h-1.4zM298 310h1.4v1.4h-1.4z" fill="#e05020"/><polyline points="334.0,309.0 337.0,318.0" fill="none" stroke="#e83018" stroke-width="3.36"/><polyline points="344.0,248.0 350.0,272.0" fill="none" stroke="#e83018" stroke-width="3.58"/><polyline points="328.0,283.0 365.0,318.0" fill="none" stroke="#20c0d0" stroke-width="2.46"/><polyline points="328.0,285.5 365.0,320.5" fill="none" stroke="#20c0d0" stroke-width="2.46"/><polyline points="328.0,288.0 365.0,323.0" fill="none" stroke="#20c0d0" stroke-width="2.46"/><polygon points="332.0,309.0 352.0,317.0 351.0,325.0 333.0,320.0" fill="#e83018" fill-opacity="0.95"/><clipPath id="cp8"><polygon points="341.0,325.0 356.0,331.0 357.0,347.0 339.0,331.0"/></clipPath><polygon points="341.0,325.0 356.0,331.0 357.0,347.0 339.0,331.0" fill="#30e070" fill-opacity="0.95"/><g clip-path="url(#cp8)"><line x1="299.0" y1="285.0" x2="397.0" y2="314.4" stroke="#209070" stroke-opacity="0.35" stroke-width="1.0"/><line x1="299.0" y1="287.5" x2="397.0" y2="316.9" stroke="#209070" stroke-opacity="0.35" stroke-width="1.0"/><line x1="299.0" y1="290.0" x2="397.0" y2="319.4" stroke="#209070" stroke-opacity="0.35" stroke-width="1.0"/><line x1="299.0" y1="292.5" x2="397.0" y2="321.9" stroke="#209070" stroke-opacity="0.35" stroke-width="1.0"/><line x1="299.0" y1="295.0" x2="397.0" y2="324.4" stroke="#209070" stroke-opacity="0.35" stroke-width="1.0"/><line x1="299.0" y1="297.5" x2="397.0" y2="326.9" stroke="#209070" stroke-opacity="0.35" stroke-width="1.0"/><line x1="299.0" y1="300.0" x2="397.0" y2="329.4" stroke="#209070" stroke-opacity="0.35" stroke-width="1.0"/><line x1="299.0" y1="302.5" x2="397.0" y2="331.9" stroke="#209070" stroke-opacity="0.35" stroke-width="1.0"/><line x1="299.0" y1="305.0" x2="397.0" y2="334.4" stroke="#209070" stroke-opacity="0.35" stroke-width="1.0"/><line x1="299.0" y1="307.5" x2="397.0" y2="336.9" stroke="#209070" stroke-opacity="0.35" stroke-width="1.0"/><line x1="299.0" y1="310.0" x2="397.0" y2="339.4" stroke="#209070" stroke-opacity="0.35" stroke-width="1.0"/><line x1="299.0" y1="312.5" x2="397.0" y2="341.9" stroke="#209070" stroke-opacity="0.35" stroke-width="1.0"/><line x1="299.0" y1="315.0" x2="397.0" y2="344.4" stroke="#209070" stroke-opacity="0.35" stroke-width="1.0"/><line x1="299.0" y1="317.5" x2="397.0" y2="346.9" stroke="#209070" stroke-opacity="0.35" stroke-width="1.0"/><line x1="299.0" y1="320.0" x2="397.0" y2="349.4" stroke="#209070" stroke-opacity="0.35" stroke-width="1.0"/><line x1="299.0" y1="322.5" x2="397.0" y2="351.9" stroke="#209070" stroke-opacity="0.35" stroke-width="1.0"/><line x1="299.0" y1="325.0" x2="397.0" y2="354.4" stroke="#209070" stroke-opacity="0.35" stroke-width="1.0"/><line x1="299.0" y1="327.5" x2="397.0" y2="356.9" stroke="#209070" stroke-opacity="0.35" stroke-width="1.0"/><line x1="299.0" y1="330.0" x2="397.0" y2="359.4" stroke="#209070" stroke-opacity="0.35" stroke-width="1.0"/><line x1="299.0" y1="332.5" x2="397.0" y2="361.9" stroke="#209070" stroke-opacity="0.35" stroke-width="1.0"/><line x1="299.0" y1="335.0" x2="397.0" y2="364.4" stroke="#209070" stroke-opacity="0.35" stroke-width="1.0"/><line x1="299.0" y1="337.5" x2="397.0" y2="366.9" stroke="#209070" stroke-opacity="0.35" stroke-width="1.0"/><line x1="299.0" y1="340.0" x2="397.0" y2="369.4" stroke="#209070" stroke-opacity="0.35" stroke-width="1.0"/><line x1="299.0" y1="342.5" x2="397.0" y2="371.9" stroke="#209070" stroke-opacity="0.35" stroke-width="1.0"/><line x1="299.0" y1="345.0" x2="397.0" y2="374.4" stroke="#209070" stroke-opacity="0.35" stroke-width="1.0"/><line x1="299.0" y1="347.5" x2="397.0" y2="376.9" stroke="#209070" stroke-opacity="0.35" stroke-width="1.0"/><line x1="299.0" y1="350.0" x2="397.0" y2="379.4" stroke="#209070" stroke-opacity="0.35" stroke-width="1.0"/><line x1="299.0" y1="352.5" x2="397.0" y2="381.9" stroke="#209070" stroke-opacity="0.35" stroke-width="1.0"/><line x1="299.0" y1="355.0" x2="397.0" y2="384.4" stroke="#209070" stroke-opacity="0.35" stroke-width="1.0"/><line x1="299.0" y1="357.5" x2="397.0" y2="386.9" stroke="#209070" stroke-opacity="0.35" stroke-width="1.0"/><line x1="299.0" y1="360.0" x2="397.0" y2="389.4" stroke="#209070" stroke-opacity="0.35" stroke-width="1.0"/><line x1="299.0" y1="362.5" x2="397.0" y2="391.9" stroke="#209070" stroke-opacity="0.35" stroke-width="1.0"/><line x1="299.0" y1="365.0" x2="397.0" y2="394.4" stroke="#209070" stroke-opacity="0.35" stroke-width="1.0"/><line x1="299.0" y1="367.5" x2="397.0" y2="396.9" stroke="#209070" stroke-opacity="0.35" stroke-width="1.0"/><line x1="299.0" y1="370.0" x2="397.0" y2="399.4" stroke="#209070" stroke-opacity="0.35" stroke-width="1.0"/><line x1="299.0" y1="372.5" x2="397.0" y2="401.9" stroke="#209070" stroke-opacity="0.35" stroke-width="1.0"/><line x1="299.0" y1="375.0" x2="397.0" y2="404.4" stroke="#209070" stroke-opacity="0.35" stroke-width="1.0"/><line x1="299.0" y1="377.5" x2="397.0" y2="406.9" stroke="#209070" stroke-opacity="0.35" stroke-width="1.0"/><line x1="299.0" y1="380.0" x2="397.0" y2="409.4" stroke="#209070" stroke-opacity="0.35" stroke-width="1.0"/><line x1="299.0" y1="382.5" x2="397.0" y2="411.9" stroke="#209070" stroke-opacity="0.35" stroke-width="1.0"/><line x1="299.0" y1="385.0" x2="397.0" y2="414.4" stroke="#209070" stroke-opacity="0.35" stroke-width="1.0"/></g><path d="M394 302h1.5v1.5h-1.5zM384 282h1.5v1.5h-1.5zM371 281h1.5v1.5h-1.5zM379 280h1.5v1.5h-1.5zM395 288h1.5v1.5h-1.5zM378 281h1.5v1.5h-1.5zM387 283h1.5v1.5h-1.5zM373 281h1.5v1.5h-1.5zM379 288h1.5v1.5h-1.5zM377 282h1.5v1.5h-1.5zM384 301h1.5v1.5h-1.5zM371 289h1.5v1.5h-1.5zM391 302h1.5v1.5h-1.5zM395 288h1.5v1.5h-1.5zM394 302h1.5v1.5h-1.5zM384 299h1.5v1.5h-1.5zM379 300h1.5v1.5h-1.5zM388 299h1.5v1.5h-1.5zM390 292h1.5v1.5h-1.5zM379 292h1.5v1.5h-1.5zM385 292h1.5v1.5h-1.5zM389 279h1.5v1.5h-1.5zM375 295h1.5v1.5h-1.5zM388 291h1.5v1.5h-1.5zM378 301h1.5v1.5h-1.5zM390 295h1.5v1.5h-1.5zM378 302h1.5v1.5h-1.5zM382 292h1.5v1.5h-1.5zM377 299h1.5v1.5h-1.5zM385 290h1.5v1.5h-1.5z" fill="#e83018"/><path d="M393 281h1.5v1.5h-1.5zM375 290h1.5v1.5h-1.5zM388 289h1.5v1.5h-1.5zM390 293h1.5v1.5h-1.5zM390 288h1.5v1.5h-1.5zM382 296h1.5v1.5h-1.5zM375 287h1.5v1.5h-1.5zM371 286h1.5v1.5h-1.5zM378 286h1.5v1.5h-1.5zM390 296h1.5v1.5h-1.5zM385 302h1.5v1.5h-1.5zM371 298h1.5v1.5h-1.5zM384 303h1.5v1.5h-1.5zM375 281h1.5v1.5h-1.5zM376 281h1.5v1.5h-1.5zM377 289h1.5v1.5h-1.5zM391 300h1.5v1.5h-1.5zM387 285h1.5v1.5h-1.5zM384 299h1.5v1.5h-1.5zM392 285h1.5v1.5h-1.5zM376 292h1.5v1.5h-1.5zM380 298h1.5v1.5h-1.5zM375 290h1.5v1.5h-1.5zM388 292h1.5v1.5h-1.5zM372 300h1.5v1.5h-1.5zM386 286h1.5v1.5h-1.5zM379 288h1.5v1.5h-1.5zM377 286h1.5v1.5h-1.5zM383 282h1.5v1.5h-1.5zM392 285h1.5v1.5h-1.5z" fill="#e07820"/><path d="M385 289h1.5v1.5h-1.5zM376 290h1.5v1.5h-1.5zM383 297h1.5v1.5h-1.5zM387 294h1.5v1.5h-1.5zM385 295h1.5v1.5h-1.5zM385 290h1.5v1.5h-1.5zM391 284h1.5v1.5h-1.5zM385 299h1.5v1.5h-1.5zM390 292h1.5v1.5h-1.5zM392 285h1.5v1.5h-1.5zM374 302h1.5v1.5h-1.5zM388 302h1.5v1.5h-1.5zM389 287h1.5v1.5h-1.5zM382 284h1.5v1.5h-1.5zM384 283h1.5v1.5h-1.5zM393 290h1.5v1.5h-1.5zM388 289h1.5v1.5h-1.5zM378 289h1.5v1.5h-1.5zM373 294h1.5v1.5h-1.5zM395 281h1.5v1.5h-1.5zM382 290h1.5v1.5h-1.5zM374 300h1.5v1.5h-1.5zM381 281h1.5v1.5h-1.5zM384 292h1.5v1.5h-1.5zM392 291h1.5v1.5h-1.5zM378 287h1.5v1.5h-1.5zM381 299h1.5v1.5h-1.5zM372 284h1.5v1.5h-1.5zM382 282h1.5v1.5h-1.5zM392 285h1.5v1.5h-1.5z" fill="#40c040"/><path d="M366 276h1.3v1.3h-1.3zM346 271h1.3v1.3h-1.3zM344 272h1.3v1.3h-1.3zM356 276h1.3v1.3h-1.3zM359 279h1.3v1.3h-1.3zM350 279h1.3v1.3h-1.3zM372 257h1.3v1.3h-1.3zM360 263h1.3v1.3h-1.3zM351 277h1.3v1.3h-1.3zM365 275h1.3v1.3h-1.3zM372 260h1.3v1.3h-1.3zM342 266h1.3v1.3h-1.3zM357 271h1.3v1.3h-1.3zM358 280h1.3v1.3h-1.3zM348 270h1.3v1.3h-1.3zM364 264h1.3v1.3h-1.3zM357 275h1.3v1.3h-1.3zM361 265h1.3v1.3h-1.3zM353 255h1.3v1.3h-1.3zM356 274h1.3v1.3h-1.3z" fill="#c04020"/><path d="M345 280h1.3v1.3h-1.3zM342 273h1.3v1.3h-1.3zM367 274h1.3v1.3h-1.3zM378 256h1.3v1.3h-1.3zM368 265h1.3v1.3h-1.3zM341 274h1.3v1.3h-1.3zM351 261h1.3v1.3h-1.3zM374 278h1.3v1.3h-1.3zM341 256h1.3v1.3h-1.3zM371 280h1.3v1.3h-1.3zM368 278h1.3v1.3h-1.3zM344 257h1.3v1.3h-1.3zM377 257h1.3v1.3h-1.3zM369 267h1.3v1.3h-1.3zM348 270h1.3v1.3h-1.3zM370 264h1.3v1.3h-1.3zM348 258h1.3v1.3h-1.3zM373 260h1.3v1.3h-1.3zM356 261h1.3v1.3h-1.3zM339 280h1.3v1.3h-1.3z" fill="#30a0a0"/><path d="M324 384h1.4v1.4h-1.4zM319 353h1.4v1.4h-1.4zM313 372h1.4v1.4h-1.4zM341 369h1.4v1.4h-1.4zM335 343h1.4v1.4h-1.4zM316 346h1.4v1.4h-1.4zM326 366h1.4v1.4h-1.4zM329 362h1.4v1.4h-1.4zM325 379h1.4v1.4h-1.4zM328 349h1.4v1.4h-1.4zM312 372h1.4v1.4h-1.4zM317 345h1.4v1.4h-1.4zM334 365h1.4v1.4h-1.4zM329 361h1.4v1.4h-1.4zM313 376h1.4v1.4h-1.4zM338 366h1.4v1.4h-1.4zM309 375h1.4v1.4h-1.4zM309 364h1.4v1.4h-1.4zM334 342h1.4v1.4h-1.4zM337 346h1.4v1.4h-1.4zM312 368h1.4v1.4h-1.4zM331 381h1.4v1.4h-1.4zM342 351h1.4v1.4h-1.4zM320 361h1.4v1.4h-1.4zM320 352h1.4v1.4h-1.4zM308 352h1.4v1.4h-1.4zM310 362h1.4v1.4h-1.4zM321 354h1.4v1.4h-1.4zM313 367h1.4v1.4h-1.4zM345 372h1.4v1.4h-1.4zM321 383h1.4v1.4h-1.4zM309 373h1.4v1.4h-1.4zM315 358h1.4v1.4h-1.4zM346 372h1.4v1.4h-1.4zM331 365h1.4v1.4h-1.4z" fill="#e83018"/><path d="M345 370h1.4v1.4h-1.4zM326 367h1.4v1.4h-1.4zM343 364h1.4v1.4h-1.4zM323 361h1.4v1.4h-1.4zM332 359h1.4v1.4h-1.4zM332 364h1.4v1.4h-1.4zM326 363h1.4v1.4h-1.4zM310 379h1.4v1.4h-1.4zM334 361h1.4v1.4h-1.4zM334 356h1.4v1.4h-1.4zM345 376h1.4v1.4h-1.4zM315 367h1.4v1.4h-1.4zM327 353h1.4v1.4h-1.4zM337 360h1.4v1.4h-1.4zM326 378h1.4v1.4h-1.4zM334 349h1.4v1.4h-1.4zM342 368h1.4v1.4h-1.4zM315 381h1.4v1.4h-1.4zM325 386h1.4v1.4h-1.4zM323 352h1.4v1.4h-1.4zM337 349h1.4v1.4h-1.4zM322 346h1.4v1.4h-1.4zM338 373h1.4v1.4h-1.4zM320 378h1.4v1.4h-1.4zM326 364h1.4v1.4h-1.4zM322 362h1.4v1.4h-1.4zM323 363h1.4v1.4h-1.4zM346 377h1.4v1.4h-1.4zM330 344h1.4v1.4h-1.4zM338 383h1.4v1.4h-1.4zM344 379h1.4v1.4h-1.4zM340 375h1.4v1.4h-1.4zM334 351h1.4v1.4h-1.4zM324 356h1.4v1.4h-1.4zM315 363h1.4v1.4h-1.4z" fill="#d06020"/><path d="M397.0 274.0Q423.0 262.5 443.0 241.0" fill="none" stroke="#d0d030" stroke-width="1.3" stroke-dasharray="2.5 0.7"/><path d="M397.4 279.0Q427.0 266.4 450.5 243.8" fill="none" stroke="#d0d030" stroke-width="1.3" stroke-dasharray="2.5 0.7"/><path d="M397.8 284.0Q430.9 270.3 458.0 246.6" fill="none" stroke="#d0d030" stroke-width="1.3" stroke-dasharray="2.5 0.7"/><path d="M398.2 289.0Q434.9 274.2 465.5 249.4" fill="none" stroke="#c0d030" stroke-width="1.3" stroke-dasharray="2.5 0.7"/><path d="M398.6 294.0Q438.8 278.1 473.0 252.2" fill="none" stroke="#c0d030" stroke-width="1.3" stroke-dasharray="2.5 0.7"/><path d="M399.0 299.0Q442.8 282.0 480.5 255.0" fill="none" stroke="#c0d030" stroke-width="1.3" stroke-dasharray="2.5 0.7"/><path d="M399.4 304.0Q446.7 285.9 488.0 257.8" fill="none" stroke="#a8d038" stroke-width="1.3" stroke-dasharray="2.5 0.7"/><path d="M399.8 309.0Q450.6 289.8 495.5 260.6" fill="none" stroke="#a8d038" stroke-width="1.3" stroke-dasharray="2.5 0.7"/><path d="M400.2 314.0Q454.6 293.7 503.0 263.4" fill="none" stroke="#a8d038" stroke-width="1.3" stroke-dasharray="2.5 0.7"/><path d="M400.6 319.0Q458.5 297.6 510.5 266.2" fill="none" stroke="#88cc40" stroke-width="1.3" stroke-dasharray="2.5 0.7"/><path d="M401.0 324.0Q462.5 301.5 518.0 269.0" fill="none" stroke="#88cc40" stroke-width="1.3" stroke-dasharray="2.5 0.7"/><path d="M401.4 329.0Q466.5 305.4 525.5 271.8" fill="none" stroke="#88cc40" stroke-width="1.3" stroke-dasharray="2.5 0.7"/><path d="M401.8 334.0Q470.4 309.3 533.0 274.6" fill="none" stroke="#60c048" stroke-width="1.3" stroke-dasharray="2.5 0.7"/><path d="M402.2 339.0Q474.4 313.2 540.5 277.4" fill="none" stroke="#60c048" stroke-width="1.3" stroke-dasharray="2.5 0.7"/><path d="M402.6 344.0Q475.8 318.2 543.0 282.4" fill="none" stroke="#60c048" stroke-width="1.3" stroke-dasharray="2.5 0.7"/><path d="M403.0 349.0Q476.0 323.7 543.0 288.4" fill="none" stroke="#50c058" stroke-width="1.3" stroke-dasharray="2.5 0.7"/><path d="M403.4 354.0Q476.2 329.2 543.0 294.3" fill="none" stroke="#50c058" stroke-width="1.3" stroke-dasharray="2.5 0.7"/><path d="M403.8 359.0Q476.4 334.6 543.0 300.2" fill="none" stroke="#50c058" stroke-width="1.3" stroke-dasharray="2.5 0.7"/><path d="M404.2 364.0Q476.6 340.0 543.0 306.0" fill="none" stroke="#40c070" stroke-width="1.3" stroke-dasharray="2.5 0.7"/><path d="M404.6 369.0Q476.8 345.4 543.0 311.8" fill="none" stroke="#40c070" stroke-width="1.3" stroke-dasharray="2.5 0.7"/><path d="M405.0 374.0Q477.0 350.7 543.0 317.5" fill="none" stroke="#40c070" stroke-width="1.3" stroke-dasharray="2.5 0.7"/><path d="M405.4 379.0Q477.2 356.1 543.0 323.1" fill="none" stroke="#40b890" stroke-width="1.3" stroke-dasharray="2.5 0.7"/><polyline points="383.0,300.0 408.0,280.0" fill="none" stroke="#c8c830" stroke-width="1.23" stroke-dasharray="2 1"/><polyline points="386.0,304.5 412.0,284.2" fill="none" stroke="#c8c830" stroke-width="1.23" stroke-dasharray="2 1"/><polyline points="389.0,309.0 416.0,288.4" fill="none" stroke="#c8c830" stroke-width="1.23" stroke-dasharray="2 1"/><polyline points="392.0,313.5 420.0,292.6" fill="none" stroke="#c8c830" stroke-width="1.23" stroke-dasharray="2 1"/><polyline points="395.0,318.0 424.0,296.8" fill="none" stroke="#c8c830" stroke-width="1.23" stroke-dasharray="2 1"/><polyline points="398.0,322.5 428.0,301.0" fill="none" stroke="#c8c830" stroke-width="1.23" stroke-dasharray="2 1"/><polyline points="401.0,327.0 432.0,305.2" fill="none" stroke="#c8c830" stroke-width="1.23" stroke-dasharray="2 1"/><polyline points="404.0,331.5 436.0,309.4" fill="none" stroke="#c8c830" stroke-width="1.23" stroke-dasharray="2 1"/><polyline points="407.0,336.0 440.0,313.6" fill="none" stroke="#c8c830" stroke-width="1.23" stroke-dasharray="2 1"/><path d="M359.0 160.0L443.0 198.0Q460.0 208.0 454.0 236.0" fill="none" stroke="#d8d828" stroke-width="1.5" stroke-dasharray="3 0.6"/><path d="M359.0 157.8L451.5 201.6Q468.0 212.3 461.8 240.7" fill="none" stroke="#d8d828" stroke-width="1.5" stroke-dasharray="3 0.6"/><path d="M359.0 155.6L460.0 205.2Q476.0 216.6 469.6 245.4" fill="none" stroke="#d8d828" stroke-width="1.5" stroke-dasharray="3 0.6"/><path d="M359.0 153.4L468.5 208.8Q484.0 220.9 477.4 250.1" fill="none" stroke="#d0d830" stroke-width="1.5" stroke-dasharray="3 0.6"/><path d="M359.0 151.2L477.0 212.4Q492.0 225.2 485.2 254.8" fill="none" stroke="#d0d830" stroke-width="1.5" stroke-dasharray="3 0.6"/><path d="M359.0 149.0L485.5 216.0Q500.0 229.5 493.0 259.5" fill="none" stroke="#d0d830" stroke-width="1.5" stroke-dasharray="3 0.6"/><path d="M359.0 146.8L494.0 219.6Q508.0 233.8 500.8 264.2" fill="none" stroke="#c0d838" stroke-width="1.5" stroke-dasharray="3 0.6"/><path d="M359.0 144.6L502.5 223.2Q516.0 238.1 508.6 268.9" fill="none" stroke="#c0d838" stroke-width="1.5" stroke-dasharray="3 0.6"/><path d="M359.0 142.4L511.0 226.8Q524.0 242.4 516.4 273.6" fill="none" stroke="#c0d838" stroke-width="1.5" stroke-dasharray="3 0.6"/><path d="M359.0 140.2L519.5 230.4Q532.0 246.7 524.2 278.3" fill="none" stroke="#a8d440" stroke-width="1.5" stroke-dasharray="3 0.6"/><path d="M359.0 138.0L528.0 234.0Q540.0 251.0 532.0 283.0" fill="none" stroke="#a8d440" stroke-width="1.5" stroke-dasharray="3 0.6"/><path d="M419 233h1.3v1.3h-1.3zM386 248h1.3v1.3h-1.3zM416 241h1.3v1.3h-1.3zM430 239h1.3v1.3h-1.3zM430 229h1.3v1.3h-1.3zM389 244h1.3v1.3h-1.3zM400 250h1.3v1.3h-1.3zM397 242h1.3v1.3h-1.3zM383 244h1.3v1.3h-1.3zM424 239h1.3v1.3h-1.3zM425 235h1.3v1.3h-1.3zM404 241h1.3v1.3h-1.3zM409 247h1.3v1.3h-1.3zM401 248h1.3v1.3h-1.3zM409 231h1.3v1.3h-1.3zM417 243h1.3v1.3h-1.3zM395 230h1.3v1.3h-1.3zM400 252h1.3v1.3h-1.3zM427 246h1.3v1.3h-1.3zM402 229h1.3v1.3h-1.3zM408 253h1.3v1.3h-1.3zM406 243h1.3v1.3h-1.3zM384 239h1.3v1.3h-1.3zM386 232h1.3v1.3h-1.3zM385 229h1.3v1.3h-1.3zM384 252h1.3v1.3h-1.3zM414 242h1.3v1.3h-1.3zM429 239h1.3v1.3h-1.3zM412 254h1.3v1.3h-1.3zM417 241h1.3v1.3h-1.3zM428 229h1.3v1.3h-1.3zM386 235h1.3v1.3h-1.3zM407 228h1.3v1.3h-1.3zM388 234h1.3v1.3h-1.3zM418 229h1.3v1.3h-1.3z" fill="#30a0b0"/><path d="M393 244h1.3v1.3h-1.3zM420 229h1.3v1.3h-1.3zM414 253h1.3v1.3h-1.3zM424 248h1.3v1.3h-1.3zM428 234h1.3v1.3h-1.3zM423 253h1.3v1.3h-1.3zM384 253h1.3v1.3h-1.3zM389 229h1.3v1.3h-1.3zM410 249h1.3v1.3h-1.3zM424 233h1.3v1.3h-1.3zM428 238h1.3v1.3h-1.3zM386 230h1.3v1.3h-1.3zM385 239h1.3v1.3h-1.3zM431 230h1.3v1.3h-1.3zM421 252h1.3v1.3h-1.3zM385 231h1.3v1.3h-1.3zM389 253h1.3v1.3h-1.3zM420 248h1.3v1.3h-1.3zM400 240h1.3v1.3h-1.3zM385 243h1.3v1.3h-1.3zM413 249h1.3v1.3h-1.3zM422 229h1.3v1.3h-1.3zM397 239h1.3v1.3h-1.3zM388 244h1.3v1.3h-1.3zM416 239h1.3v1.3h-1.3zM407 252h1.3v1.3h-1.3zM402 231h1.3v1.3h-1.3zM398 232h1.3v1.3h-1.3zM402 249h1.3v1.3h-1.3zM414 247h1.3v1.3h-1.3zM390 234h1.3v1.3h-1.3zM404 234h1.3v1.3h-1.3zM427 247h1.3v1.3h-1.3zM419 232h1.3v1.3h-1.3zM413 246h1.3v1.3h-1.3z" fill="#3070c0"/><path d="M447 316h1.4v1.4h-1.4zM433 320h1.4v1.4h-1.4zM451 298h1.4v1.4h-1.4zM433 323h1.4v1.4h-1.4zM451 318h1.4v1.4h-1.4zM455 292h1.4v1.4h-1.4zM437 313h1.4v1.4h-1.4zM448 310h1.4v1.4h-1.4zM438 317h1.4v1.4h-1.4zM444 298h1.4v1.4h-1.4zM455 298h1.4v1.4h-1.4zM450 304h1.4v1.4h-1.4zM438 307h1.4v1.4h-1.4zM440 319h1.4v1.4h-1.4zM443 310h1.4v1.4h-1.4zM443 295h1.4v1.4h-1.4zM439 296h1.4v1.4h-1.4zM448 302h1.4v1.4h-1.4zM445 323h1.4v1.4h-1.4zM444 322h1.4v1.4h-1.4zM432 319h1.4v1.4h-1.4zM433 311h1.4v1.4h-1.4zM431 322h1.4v1.4h-1.4zM446 300h1.4v1.4h-1.4zM439 305h1.4v1.4h-1.4z" fill="#2070d0"/><path d="M454 299h1.4v1.4h-1.4zM439 305h1.4v1.4h-1.4zM453 309h1.4v1.4h-1.4zM445 295h1.4v1.4h-1.4zM449 314h1.4v1.4h-1.4zM454 314h1.4v1.4h-1.4zM439 314h1.4v1.4h-1.4zM433 305h1.4v1.4h-1.4zM453 318h1.4v1.4h-1.4zM448 301h1.4v1.4h-1.4zM454 293h1.4v1.4h-1.4zM445 306h1.4v1.4h-1.4zM451 304h1.4v1.4h-1.4zM435 304h1.4v1.4h-1.4zM435 318h1.4v1.4h-1.4zM439 294h1.4v1.4h-1.4zM437 311h1.4v1.4h-1.4zM442 309h1.4v1.4h-1.4zM436 318h1.4v1.4h-1.4zM447 292h1.4v1.4h-1.4zM438 313h1.4v1.4h-1.4zM441 308h1.4v1.4h-1.4zM451 317h1.4v1.4h-1.4zM436 320h1.4v1.4h-1.4zM452 304h1.4v1.4h-1.4z" fill="#30b0c0"/><path d="M456 291h1.3v1.3h-1.3zM457 303h1.3v1.3h-1.3zM471 316h1.3v1.3h-1.3zM451 295h1.3v1.3h-1.3zM467 321h1.3v1.3h-1.3zM477 310h1.3v1.3h-1.3zM462 310h1.3v1.3h-1.3zM491 309h1.3v1.3h-1.3zM498 296h1.3v1.3h-1.3zM459 300h1.3v1.3h-1.3zM493 300h1.3v1.3h-1.3zM501 317h1.3v1.3h-1.3zM459 313h1.3v1.3h-1.3zM472 288h1.3v1.3h-1.3zM467 310h1.3v1.3h-1.3zM476 316h1.3v1.3h-1.3zM479 302h1.3v1.3h-1.3zM463 316h1.3v1.3h-1.3zM501 288h1.3v1.3h-1.3zM473 315h1.3v1.3h-1.3zM450 320h1.3v1.3h-1.3zM462 294h1.3v1.3h-1.3zM486 297h1.3v1.3h-1.3zM454 313h1.3v1.3h-1.3zM497 302h1.3v1.3h-1.3zM498 320h1.3v1.3h-1.3zM471 311h1.3v1.3h-1.3zM468 307h1.3v1.3h-1.3zM495 317h1.3v1.3h-1.3zM471 300h1.3v1.3h-1.3z" fill="#d06020"/><path d="M482 293h1.3v1.3h-1.3zM472 294h1.3v1.3h-1.3zM457 293h1.3v1.3h-1.3zM455 320h1.3v1.3h-1.3zM457 318h1.3v1.3h-1.3zM485 296h1.3v1.3h-1.3zM457 287h1.3v1.3h-1.3zM464 305h1.3v1.3h-1.3zM457 301h1.3v1.3h-1.3zM452 313h1.3v1.3h-1.3zM470 296h1.3v1.3h-1.3zM485 293h1.3v1.3h-1.3zM460 310h1.3v1.3h-1.3zM460 318h1.3v1.3h-1.3zM490 301h1.3v1.3h-1.3zM489 305h1.3v1.3h-1.3zM473 310h1.3v1.3h-1.3zM466 295h1.3v1.3h-1.3zM472 306h1.3v1.3h-1.3zM486 304h1.3v1.3h-1.3zM469 299h1.3v1.3h-1.3zM455 291h1.3v1.3h-1.3zM477 309h1.3v1.3h-1.3zM460 314h1.3v1.3h-1.3zM467 304h1.3v1.3h-1.3zM488 301h1.3v1.3h-1.3zM467 314h1.3v1.3h-1.3zM478 305h1.3v1.3h-1.3zM491 309h1.3v1.3h-1.3zM474 316h1.3v1.3h-1.3z" fill="#c03020"/><path d="M520 330h1.4v1.4h-1.4zM518 330h1.4v1.4h-1.4zM496 333h1.4v1.4h-1.4zM543 330h1.4v1.4h-1.4zM529 333h1.4v1.4h-1.4zM512 342h1.4v1.4h-1.4zM526 329h1.4v1.4h-1.4zM512 342h1.4v1.4h-1.4zM530 337h1.4v1.4h-1.4zM523 342h1.4v1.4h-1.4zM510 325h1.4v1.4h-1.4zM495 332h1.4v1.4h-1.4zM515 346h1.4v1.4h-1.4zM536 340h1.4v1.4h-1.4zM541 327h1.4v1.4h-1.4zM492 346h1.4v1.4h-1.4zM499 346h1.4v1.4h-1.4zM529 342h1.4v1.4h-1.4zM524 345h1.4v1.4h-1.4zM491 326h1.4v1.4h-1.4zM492 326h1.4v1.4h-1.4zM497 325h1.4v1.4h-1.4zM536 326h1.4v1.4h-1.4zM504 330h1.4v1.4h-1.4zM523 342h1.4v1.4h-1.4zM527 342h1.4v1.4h-1.4zM506 345h1.4v1.4h-1.4zM514 331h1.4v1.4h-1.4zM525 332h1.4v1.4h-1.4zM515 338h1.4v1.4h-1.4z" fill="#30b0a0"/><path d="M535 329h1.4v1.4h-1.4zM513 347h1.4v1.4h-1.4zM503 330h1.4v1.4h-1.4zM523 332h1.4v1.4h-1.4zM500 333h1.4v1.4h-1.4zM520 326h1.4v1.4h-1.4zM518 327h1.4v1.4h-1.4zM518 341h1.4v1.4h-1.4zM525 332h1.4v1.4h-1.4zM496 346h1.4v1.4h-1.4zM499 330h1.4v1.4h-1.4zM513 339h1.4v1.4h-1.4zM525 330h1.4v1.4h-1.4zM541 341h1.4v1.4h-1.4zM505 347h1.4v1.4h-1.4zM538 325h1.4v1.4h-1.4zM541 344h1.4v1.4h-1.4zM507 321h1.4v1.4h-1.4zM540 335h1.4v1.4h-1.4zM514 327h1.4v1.4h-1.4zM517 324h1.4v1.4h-1.4zM493 342h1.4v1.4h-1.4zM524 345h1.4v1.4h-1.4zM537 342h1.4v1.4h-1.4zM521 330h1.4v1.4h-1.4zM494 330h1.4v1.4h-1.4zM506 339h1.4v1.4h-1.4zM517 345h1.4v1.4h-1.4zM499 330h1.4v1.4h-1.4zM543 330h1.4v1.4h-1.4z" fill="#40c050"/><path d="M389 276h1.5v1.5h-1.5zM386 274h1.5v1.5h-1.5zM395 283h1.5v1.5h-1.5zM386 266h1.5v1.5h-1.5zM390 303h1.5v1.5h-1.5zM389 266h1.5v1.5h-1.5zM391 297h1.5v1.5h-1.5zM391 302h1.5v1.5h-1.5zM387 299h1.5v1.5h-1.5zM384 274h1.5v1.5h-1.5zM388 296h1.5v1.5h-1.5zM385 291h1.5v1.5h-1.5zM394 286h1.5v1.5h-1.5zM394 284h1.5v1.5h-1.5zM386 274h1.5v1.5h-1.5zM391 299h1.5v1.5h-1.5zM386 272h1.5v1.5h-1.5zM392 290h1.5v1.5h-1.5zM391 280h1.5v1.5h-1.5zM391 279h1.5v1.5h-1.5z" fill="#e05020"/><path d="M383 292h1.5v1.5h-1.5zM388 291h1.5v1.5h-1.5zM395 307h1.5v1.5h-1.5zM385 300h1.5v1.5h-1.5zM395 292h1.5v1.5h-1.5zM383 298h1.5v1.5h-1.5zM390 293h1.5v1.5h-1.5zM384 285h1.5v1.5h-1.5zM394 274h1.5v1.5h-1.5zM387 297h1.5v1.5h-1.5zM387 286h1.5v1.5h-1.5zM389 301h1.5v1.5h-1.5zM384 304h1.5v1.5h-1.5zM389 304h1.5v1.5h-1.5zM391 293h1.5v1.5h-1.5zM389 281h1.5v1.5h-1.5zM387 282h1.5v1.5h-1.5zM389 280h1.5v1.5h-1.5zM393 291h1.5v1.5h-1.5zM389 295h1.5v1.5h-1.5z" fill="#f08020"/><polyline points="378.0,146.0 428.0,158.0 488.0,176.0 543.0,202.0" fill="none" stroke="#a0d030" stroke-width="1.34" stroke-dasharray="2.5 0.8"/><polyline points="379.9,144.0 426.9,154.0 487.4,172.2 543.0,198.8" fill="none" stroke="#a0d030" stroke-width="1.34" stroke-dasharray="2.5 0.8"/><polyline points="381.8,142.0 425.8,150.0 486.8,168.5 543.0,195.5" fill="none" stroke="#a0d030" stroke-width="1.34" stroke-dasharray="2.5 0.8"/><polyline points="383.6,140.0 424.6,146.0 486.1,164.8 543.0,192.2" fill="none" stroke="#80d040" stroke-width="1.34" stroke-dasharray="2.5 0.8"/><polyline points="385.5,138.0 423.5,142.0 485.5,161.0 543.0,189.0" fill="none" stroke="#80d040" stroke-width="1.34" stroke-dasharray="2.5 0.8"/><polyline points="387.4,136.0 422.4,138.0 484.9,157.2 543.0,185.8" fill="none" stroke="#80d040" stroke-width="1.34" stroke-dasharray="2.5 0.8"/><polyline points="389.2,134.0 421.2,134.0 484.2,153.5 543.0,182.5" fill="none" stroke="#60cc48" stroke-width="1.34" stroke-dasharray="2.5 0.8"/><polyline points="391.1,132.0 420.1,130.0 483.6,149.8 543.0,179.2" fill="none" stroke="#60cc48" stroke-width="1.34" stroke-dasharray="2.5 0.8"/><polyline points="393.0,130.0 419.0,126.0 483.0,146.0 543.0,176.0" fill="none" stroke="#60cc48" stroke-width="1.34" stroke-dasharray="2.5 0.8"/><polyline points="431.0,157.0 475.0,169.0" fill="none" stroke="#d07020" stroke-width="1.23" stroke-dasharray="1.5 2.5"/><polyline points="431.0,159.8 475.0,171.8" fill="none" stroke="#d07020" stroke-width="1.23" stroke-dasharray="1.5 2.5"/><polyline points="431.0,162.6 475.0,174.6" fill="none" stroke="#d07020" stroke-width="1.23" stroke-dasharray="1.5 2.5"/><polyline points="431.0,165.4 475.0,177.4" fill="none" stroke="#d07020" stroke-width="1.23" stroke-dasharray="1.5 2.5"/><polyline points="431.0,168.2 475.0,180.2" fill="none" stroke="#d07020" stroke-width="1.23" stroke-dasharray="1.5 2.5"/><path d="M479 184h1.4v1.4h-1.4zM482 184h1.4v1.4h-1.4zM483 202h1.4v1.4h-1.4zM492 194h1.4v1.4h-1.4zM502 193h1.4v1.4h-1.4zM488 209h1.4v1.4h-1.4zM493 197h1.4v1.4h-1.4zM488 187h1.4v1.4h-1.4zM500 200h1.4v1.4h-1.4zM497 187h1.4v1.4h-1.4zM480 191h1.4v1.4h-1.4zM495 205h1.4v1.4h-1.4zM503 204h1.4v1.4h-1.4zM494 197h1.4v1.4h-1.4zM493 201h1.4v1.4h-1.4zM501 200h1.4v1.4h-1.4zM490 204h1.4v1.4h-1.4zM492 184h1.4v1.4h-1.4zM487 202h1.4v1.4h-1.4zM491 204h1.4v1.4h-1.4zM494 199h1.4v1.4h-1.4zM482 202h1.4v1.4h-1.4zM497 188h1.4v1.4h-1.4zM483 182h1.4v1.4h-1.4zM480 199h1.4v1.4h-1.4zM499 190h1.4v1.4h-1.4zM496 196h1.4v1.4h-1.4zM492 202h1.4v1.4h-1.4zM490 185h1.4v1.4h-1.4zM497 208h1.4v1.4h-1.4z" fill="#20b0c0"/><path d="M488 201h1.4v1.4h-1.4zM485 203h1.4v1.4h-1.4zM495 185h1.4v1.4h-1.4zM481 182h1.4v1.4h-1.4zM484 191h1.4v1.4h-1.4zM484 187h1.4v1.4h-1.4zM502 205h1.4v1.4h-1.4zM480 202h1.4v1.4h-1.4zM484 204h1.4v1.4h-1.4zM494 187h1.4v1.4h-1.4zM487 192h1.4v1.4h-1.4zM502 209h1.4v1.4h-1.4zM486 186h1.4v1.4h-1.4zM484 208h1.4v1.4h-1.4zM481 193h1.4v1.4h-1.4zM503 187h1.4v1.4h-1.4zM490 204h1.4v1.4h-1.4zM482 187h1.4v1.4h-1.4zM499 195h1.4v1.4h-1.4zM486 192h1.4v1.4h-1.4zM480 184h1.4v1.4h-1.4zM496 209h1.4v1.4h-1.4zM488 189h1.4v1.4h-1.4zM482 206h1.4v1.4h-1.4zM484 187h1.4v1.4h-1.4zM483 194h1.4v1.4h-1.4zM500 193h1.4v1.4h-1.4zM490 202h1.4v1.4h-1.4zM482 204h1.4v1.4h-1.4zM496 198h1.4v1.4h-1.4z" fill="#2090d0"/><polyline points="501.0,192.0 508.0,202.0" fill="none" stroke="#d88020" stroke-width="1.57"/><polyline points="507.0,192.5 514.0,202.5" fill="none" stroke="#d88020" stroke-width="1.57"/><polyline points="513.0,193.0 520.0,203.0" fill="none" stroke="#d88020" stroke-width="1.57"/><polyline points="519.0,193.5 526.0,203.5" fill="none" stroke="#d88020" stroke-width="1.57"/><polyline points="525.0,194.0 532.0,204.0" fill="none" stroke="#d88020" stroke-width="1.57"/><polyline points="531.0,194.5 538.0,204.5" fill="none" stroke="#d88020" stroke-width="1.57"/><path d="M287.0 409.0Q333.5 399.5 380.0 378.0" fill="none" stroke="#e0b030" stroke-width="1.3" stroke-dasharray="2.5 0.8"/><path d="M281.0 418.0Q341.5 407.0 402.0 384.0" fill="none" stroke="#e0a028" stroke-width="1.3" stroke-dasharray="2.5 0.8"/><path d="M284.0 431.0Q349.0 418.5 414.0 394.0" fill="none" stroke="#e09028" stroke-width="1.3" stroke-dasharray="2.5 0.8"/><path d="M303.0 440.0Q377.0 428.0 451.0 404.0" fill="none" stroke="#e08828" stroke-width="1.3" stroke-dasharray="2.5 0.8"/><path d="M309.0 452.0Q400.5 439.5 492.0 415.0" fill="none" stroke="#e08020" stroke-width="1.3" stroke-dasharray="2.5 0.8"/><path d="M312.0 465.0Q381.5 457.0 451.0 437.0" fill="none" stroke="#e07820" stroke-width="1.3" stroke-dasharray="2.5 0.8"/><path d="M318.0 480.0Q371.0 474.0 424.0 456.0" fill="none" stroke="#e07020" stroke-width="1.3" stroke-dasharray="2.5 0.8"/><path d="M417.0 487.0Q463.5 471.0 510.0 443.0" fill="none" stroke="#e05020" stroke-width="1.3" stroke-dasharray="2.5 0.8"/><path d="M324.0 502.0Q352.0 502.0 380.0 490.0" fill="none" stroke="#d84020" stroke-width="1.3" stroke-dasharray="2.5 0.8"/><path d="M427.0 521.0Q464.0 514.5 501.0 496.0" fill="none" stroke="#d84020" stroke-width="1.3" stroke-dasharray="2.5 0.8"/><path d="M464.0 561.0Q488.5 556.0 513.0 539.0" fill="none" stroke="#d04020" stroke-width="1.3" stroke-dasharray="2.5 0.8"/><path d="M293.0 398.0Q325.5 392.0 358.0 374.0" fill="none" stroke="#e0c030" stroke-width="1.3" stroke-dasharray="2.5 0.8"/><path d="M184 410h1.4v1.4h-1.4zM217 438h1.4v1.4h-1.4zM245 427h1.4v1.4h-1.4zM207 398h1.4v1.4h-1.4zM179 438h1.4v1.4h-1.4zM253 409h1.4v1.4h-1.4zM255 404h1.4v1.4h-1.4zM182 400h1.4v1.4h-1.4zM202 449h1.4v1.4h-1.4zM236 429h1.4v1.4h-1.4zM224 411h1.4v1.4h-1.4zM210 452h1.4v1.4h-1.4zM216 443h1.4v1.4h-1.4zM185 401h1.4v1.4h-1.4zM202 419h1.4v1.4h-1.4zM179 450h1.4v1.4h-1.4zM217 450h1.4v1.4h-1.4zM219 426h1.4v1.4h-1.4zM235 409h1.4v1.4h-1.4zM226 443h1.4v1.4h-1.4zM198 398h1.4v1.4h-1.4zM225 451h1.4v1.4h-1.4zM254 449h1.4v1.4h-1.4zM203 407h1.4v1.4h-1.4zM234 452h1.4v1.4h-1.4zM224 425h1.4v1.4h-1.4zM243 400h1.4v1.4h-1.4zM178 446h1.4v1.4h-1.4zM239 419h1.4v1.4h-1.4zM253 452h1.4v1.4h-1.4zM214 448h1.4v1.4h-1.4zM198 428h1.4v1.4h-1.4zM248 426h1.4v1.4h-1.4zM237 402h1.4v1.4h-1.4zM218 402h1.4v1.4h-1.4zM255 412h1.4v1.4h-1.4zM218 408h1.4v1.4h-1.4zM207 399h1.4v1.4h-1.4zM192 403h1.4v1.4h-1.4zM208 424h1.4v1.4h-1.4zM188 413h1.4v1.4h-1.4zM185 420h1.4v1.4h-1.4zM203 451h1.4v1.4h-1.4zM190 429h1.4v1.4h-1.4zM188 427h1.4v1.4h-1.4zM198 449h1.4v1.4h-1.4zM232 398h1.4v1.4h-1.4zM240 421h1.4v1.4h-1.4zM241 431h1.4v1.4h-1.4zM256 415h1.4v1.4h-1.4zM215 399h1.4v1.4h-1.4zM209 445h1.4v1.4h-1.4zM250 417h1.4v1.4h-1.4zM226 441h1.4v1.4h-1.4zM225 435h1.4v1.4h-1.4zM221 413h1.4v1.4h-1.4zM244 414h1.4v1.4h-1.4zM232 446h1.4v1.4h-1.4zM227 417h1.4v1.4h-1.4zM192 432h1.4v1.4h-1.4z" fill="#30b8a0"/><path d="M202 448h1.4v1.4h-1.4zM186 426h1.4v1.4h-1.4zM253 446h1.4v1.4h-1.4zM238 405h1.4v1.4h-1.4zM245 444h1.4v1.4h-1.4zM184 405h1.4v1.4h-1.4zM191 399h1.4v1.4h-1.4zM206 407h1.4v1.4h-1.4zM191 443h1.4v1.4h-1.4zM223 440h1.4v1.4h-1.4zM204 411h1.4v1.4h-1.4zM212 402h1.4v1.4h-1.4zM213 437h1.4v1.4h-1.4zM230 401h1.4v1.4h-1.4zM193 400h1.4v1.4h-1.4zM232 450h1.4v1.4h-1.4zM246 432h1.4v1.4h-1.4zM196 419h1.4v1.4h-1.4zM245 426h1.4v1.4h-1.4zM229 406h1.4v1.4h-1.4zM180 450h1.4v1.4h-1.4zM240 415h1.4v1.4h-1.4zM214 403h1.4v1.4h-1.4zM207 403h1.4v1.4h-1.4zM195 441h1.4v1.4h-1.4zM250 419h1.4v1.4h-1.4zM254 408h1.4v1.4h-1.4zM235 435h1.4v1.4h-1.4zM187 416h1.4v1.4h-1.4zM196 422h1.4v1.4h-1.4zM178 444h1.4v1.4h-1.4zM188 403h1.4v1.4h-1.4zM255 446h1.4v1.4h-1.4zM225 453h1.4v1.4h-1.4zM193 452h1.4v1.4h-1.4zM203 437h1.4v1.4h-1.4zM256 432h1.4v1.4h-1.4zM218 439h1.4v1.4h-1.4zM235 449h1.4v1.4h-1.4zM228 427h1.4v1.4h-1.4zM194 409h1.4v1.4h-1.4zM195 445h1.4v1.4h-1.4zM242 413h1.4v1.4h-1.4zM215 427h1.4v1.4h-1.4zM238 422h1.4v1.4h-1.4zM201 453h1.4v1.4h-1.4zM213 406h1.4v1.4h-1.4zM185 450h1.4v1.4h-1.4zM223 402h1.4v1.4h-1.4zM219 425h1.4v1.4h-1.4zM249 425h1.4v1.4h-1.4zM246 438h1.4v1.4h-1.4zM186 417h1.4v1.4h-1.4zM236 433h1.4v1.4h-1.4zM223 399h1.4v1.4h-1.4zM184 432h1.4v1.4h-1.4zM231 432h1.4v1.4h-1.4zM233 402h1.4v1.4h-1.4zM211 435h1.4v1.4h-1.4zM252 402h1.4v1.4h-1.4z" fill="#2890d8"/><polyline points="192.0,398.0 202.0,448.0" fill="none" stroke="#2878e8" stroke-width="3.36"/><polyline points="209.0,420.0 242.0,428.0" fill="none" stroke="#30c8c0" stroke-width="1.68"/><polyline points="209.0,424.0 242.0,432.0" fill="none" stroke="#30c8c0" stroke-width="1.68"/><polyline points="209.0,428.0 242.0,436.0" fill="none" stroke="#30c8c0" stroke-width="1.68"/><polyline points="209.0,432.0 242.0,440.0" fill="none" stroke="#30c8c0" stroke-width="1.68"/><polyline points="244.0,408.0 255.0,438.0" fill="none" stroke="#2878e8" stroke-width="3.36"/><polygon points="414.0,384.0 445.0,384.0 427.0,524.0 392.0,524.0" fill="#30a890" fill-opacity="0.15"/><path d="M422 473h1.3v1.3h-1.3zM427 470h1.3v1.3h-1.3zM418 391h1.3v1.3h-1.3zM395 521h1.3v1.3h-1.3zM417 434h1.3v1.3h-1.3zM438 386h1.3v1.3h-1.3zM418 470h1.3v1.3h-1.3zM418 387h1.3v1.3h-1.3zM425 490h1.3v1.3h-1.3zM425 485h1.3v1.3h-1.3zM396 514h1.3v1.3h-1.3zM411 496h1.3v1.3h-1.3zM416 412h1.3v1.3h-1.3zM411 419h1.3v1.3h-1.3zM398 520h1.3v1.3h-1.3zM434 438h1.3v1.3h-1.3zM415 498h1.3v1.3h-1.3zM397 492h1.3v1.3h-1.3zM412 466h1.3v1.3h-1.3zM416 512h1.3v1.3h-1.3zM416 499h1.3v1.3h-1.3zM409 475h1.3v1.3h-1.3zM430 393h1.3v1.3h-1.3zM428 420h1.3v1.3h-1.3zM401 497h1.3v1.3h-1.3zM423 393h1.3v1.3h-1.3zM425 424h1.3v1.3h-1.3zM410 485h1.3v1.3h-1.3zM422 488h1.3v1.3h-1.3zM425 507h1.3v1.3h-1.3zM407 473h1.3v1.3h-1.3zM405 495h1.3v1.3h-1.3zM420 384h1.3v1.3h-1.3zM425 398h1.3v1.3h-1.3zM418 395h1.3v1.3h-1.3zM412 471h1.3v1.3h-1.3zM401 474h1.3v1.3h-1.3zM435 440h1.3v1.3h-1.3zM439 422h1.3v1.3h-1.3zM417 388h1.3v1.3h-1.3zM431 408h1.3v1.3h-1.3zM425 403h1.3v1.3h-1.3zM431 436h1.3v1.3h-1.3zM428 510h1.3v1.3h-1.3zM427 387h1.3v1.3h-1.3zM429 431h1.3v1.3h-1.3zM423 505h1.3v1.3h-1.3zM394 516h1.3v1.3h-1.3zM440 404h1.3v1.3h-1.3zM413 442h1.3v1.3h-1.3zM398 520h1.3v1.3h-1.3zM408 426h1.3v1.3h-1.3zM432 448h1.3v1.3h-1.3zM436 424h1.3v1.3h-1.3zM397 519h1.3v1.3h-1.3zM431 426h1.3v1.3h-1.3zM422 467h1.3v1.3h-1.3zM395 507h1.3v1.3h-1.3zM414 510h1.3v1.3h-1.3zM423 448h1.3v1.3h-1.3zM408 475h1.3v1.3h-1.3zM426 388h1.3v1.3h-1.3zM408 456h1.3v1.3h-1.3zM429 420h1.3v1.3h-1.3zM402 496h1.3v1.3h-1.3zM436 448h1.3v1.3h-1.3zM407 485h1.3v1.3h-1.3zM410 450h1.3v1.3h-1.3zM417 472h1.3v1.3h-1.3zM413 465h1.3v1.3h-1.3zM432 448h1.3v1.3h-1.3zM430 406h1.3v1.3h-1.3zM404 455h1.3v1.3h-1.3zM410 439h1.3v1.3h-1.3zM411 504h1.3v1.3h-1.3zM402 466h1.3v1.3h-1.3zM430 490h1.3v1.3h-1.3zM404 513h1.3v1.3h-1.3zM427 401h1.3v1.3h-1.3zM412 418h1.3v1.3h-1.3z" fill="#30c0a0"/><path d="M435 423h1.3v1.3h-1.3zM419 519h1.3v1.3h-1.3zM424 487h1.3v1.3h-1.3zM408 439h1.3v1.3h-1.3zM421 494h1.3v1.3h-1.3zM421 446h1.3v1.3h-1.3zM424 486h1.3v1.3h-1.3zM413 496h1.3v1.3h-1.3zM415 497h1.3v1.3h-1.3zM406 466h1.3v1.3h-1.3zM433 464h1.3v1.3h-1.3zM436 386h1.3v1.3h-1.3zM414 402h1.3v1.3h-1.3zM408 501h1.3v1.3h-1.3zM426 518h1.3v1.3h-1.3zM438 395h1.3v1.3h-1.3zM407 486h1.3v1.3h-1.3zM412 451h1.3v1.3h-1.3zM418 455h1.3v1.3h-1.3zM408 504h1.3v1.3h-1.3zM405 468h1.3v1.3h-1.3zM411 424h1.3v1.3h-1.3zM414 428h1.3v1.3h-1.3zM415 431h1.3v1.3h-1.3zM412 426h1.3v1.3h-1.3zM420 466h1.3v1.3h-1.3zM403 473h1.3v1.3h-1.3zM432 433h1.3v1.3h-1.3zM421 440h1.3v1.3h-1.3zM431 437h1.3v1.3h-1.3zM403 490h1.3v1.3h-1.3zM421 490h1.3v1.3h-1.3zM427 412h1.3v1.3h-1.3zM415 439h1.3v1.3h-1.3zM413 497h1.3v1.3h-1.3zM412 413h1.3v1.3h-1.3zM422 499h1.3v1.3h-1.3zM416 511h1.3v1.3h-1.3zM422 521h1.3v1.3h-1.3zM434 466h1.3v1.3h-1.3zM409 448h1.3v1.3h-1.3zM442 408h1.3v1.3h-1.3zM418 440h1.3v1.3h-1.3zM412 519h1.3v1.3h-1.3zM410 421h1.3v1.3h-1.3zM409 427h1.3v1.3h-1.3zM399 487h1.3v1.3h-1.3zM415 431h1.3v1.3h-1.3zM423 501h1.3v1.3h-1.3zM405 467h1.3v1.3h-1.3zM403 473h1.3v1.3h-1.3zM423 458h1.3v1.3h-1.3zM437 398h1.3v1.3h-1.3zM440 406h1.3v1.3h-1.3zM431 469h1.3v1.3h-1.3zM433 428h1.3v1.3h-1.3zM401 510h1.3v1.3h-1.3zM420 427h1.3v1.3h-1.3zM425 516h1.3v1.3h-1.3zM413 408h1.3v1.3h-1.3zM418 477h1.3v1.3h-1.3zM436 408h1.3v1.3h-1.3zM428 449h1.3v1.3h-1.3zM410 436h1.3v1.3h-1.3zM428 498h1.3v1.3h-1.3zM400 510h1.3v1.3h-1.3zM417 508h1.3v1.3h-1.3zM423 412h1.3v1.3h-1.3zM395 523h1.3v1.3h-1.3zM419 432h1.3v1.3h-1.3zM423 456h1.3v1.3h-1.3zM434 427h1.3v1.3h-1.3zM400 521h1.3v1.3h-1.3zM414 400h1.3v1.3h-1.3zM428 402h1.3v1.3h-1.3zM429 468h1.3v1.3h-1.3zM417 486h1.3v1.3h-1.3zM437 424h1.3v1.3h-1.3zM418 458h1.3v1.3h-1.3zM418 517h1.3v1.3h-1.3z" fill="#50c050"/><path d="M427 509h1.3v1.3h-1.3zM420 446h1.3v1.3h-1.3zM415 503h1.3v1.3h-1.3zM432 462h1.3v1.3h-1.3zM418 437h1.3v1.3h-1.3zM409 508h1.3v1.3h-1.3zM417 443h1.3v1.3h-1.3zM402 484h1.3v1.3h-1.3zM432 466h1.3v1.3h-1.3zM422 412h1.3v1.3h-1.3zM414 512h1.3v1.3h-1.3zM425 430h1.3v1.3h-1.3zM434 460h1.3v1.3h-1.3zM412 423h1.3v1.3h-1.3zM410 497h1.3v1.3h-1.3zM425 410h1.3v1.3h-1.3zM404 478h1.3v1.3h-1.3zM432 398h1.3v1.3h-1.3zM408 460h1.3v1.3h-1.3zM408 500h1.3v1.3h-1.3zM421 423h1.3v1.3h-1.3zM398 494h1.3v1.3h-1.3zM419 434h1.3v1.3h-1.3zM402 519h1.3v1.3h-1.3zM408 430h1.3v1.3h-1.3zM409 505h1.3v1.3h-1.3zM432 386h1.3v1.3h-1.3zM442 408h1.3v1.3h-1.3zM425 475h1.3v1.3h-1.3zM435 435h1.3v1.3h-1.3zM440 413h1.3v1.3h-1.3zM418 480h1.3v1.3h-1.3zM405 523h1.3v1.3h-1.3zM439 415h1.3v1.3h-1.3zM429 499h1.3v1.3h-1.3zM402 475h1.3v1.3h-1.3zM427 490h1.3v1.3h-1.3zM433 446h1.3v1.3h-1.3zM406 523h1.3v1.3h-1.3zM431 395h1.3v1.3h-1.3zM416 523h1.3v1.3h-1.3zM417 493h1.3v1.3h-1.3zM428 394h1.3v1.3h-1.3zM429 438h1.3v1.3h-1.3zM436 437h1.3v1.3h-1.3zM427 523h1.3v1.3h-1.3zM433 437h1.3v1.3h-1.3zM424 493h1.3v1.3h-1.3zM413 424h1.3v1.3h-1.3zM417 511h1.3v1.3h-1.3zM405 500h1.3v1.3h-1.3zM430 394h1.3v1.3h-1.3zM404 475h1.3v1.3h-1.3zM428 514h1.3v1.3h-1.3zM415 405h1.3v1.3h-1.3zM410 484h1.3v1.3h-1.3zM435 459h1.3v1.3h-1.3zM406 460h1.3v1.3h-1.3zM425 434h1.3v1.3h-1.3zM418 421h1.3v1.3h-1.3zM422 470h1.3v1.3h-1.3zM414 475h1.3v1.3h-1.3zM405 477h1.3v1.3h-1.3zM421 446h1.3v1.3h-1.3zM422 460h1.3v1.3h-1.3zM424 387h1.3v1.3h-1.3zM428 503h1.3v1.3h-1.3zM422 515h1.3v1.3h-1.3zM434 462h1.3v1.3h-1.3zM417 392h1.3v1.3h-1.3zM423 434h1.3v1.3h-1.3zM419 472h1.3v1.3h-1.3zM406 514h1.3v1.3h-1.3zM425 481h1.3v1.3h-1.3zM411 431h1.3v1.3h-1.3zM434 422h1.3v1.3h-1.3zM428 386h1.3v1.3h-1.3zM437 390h1.3v1.3h-1.3zM394 515h1.3v1.3h-1.3zM424 520h1.3v1.3h-1.3z" fill="#2aa0c8"/><path d="M440 410h1.3v1.3h-1.3zM408 427h1.3v1.3h-1.3zM428 400h1.3v1.3h-1.3zM427 448h1.3v1.3h-1.3zM433 400h1.3v1.3h-1.3zM429 407h1.3v1.3h-1.3zM419 420h1.3v1.3h-1.3zM425 424h1.3v1.3h-1.3zM419 503h1.3v1.3h-1.3zM402 517h1.3v1.3h-1.3zM435 403h1.3v1.3h-1.3zM410 453h1.3v1.3h-1.3zM416 473h1.3v1.3h-1.3zM430 415h1.3v1.3h-1.3zM434 456h1.3v1.3h-1.3zM403 508h1.3v1.3h-1.3zM416 440h1.3v1.3h-1.3zM422 397h1.3v1.3h-1.3zM421 424h1.3v1.3h-1.3zM435 411h1.3v1.3h-1.3zM425 500h1.3v1.3h-1.3zM440 388h1.3v1.3h-1.3zM421 487h1.3v1.3h-1.3zM430 402h1.3v1.3h-1.3zM423 428h1.3v1.3h-1.3zM414 407h1.3v1.3h-1.3zM426 411h1.3v1.3h-1.3zM427 396h1.3v1.3h-1.3zM424 484h1.3v1.3h-1.3zM429 454h1.3v1.3h-1.3zM421 500h1.3v1.3h-1.3zM411 437h1.3v1.3h-1.3zM426 442h1.3v1.3h-1.3zM413 494h1.3v1.3h-1.3zM438 432h1.3v1.3h-1.3zM404 480h1.3v1.3h-1.3zM426 517h1.3v1.3h-1.3zM409 518h1.3v1.3h-1.3zM433 402h1.3v1.3h-1.3zM417 497h1.3v1.3h-1.3zM441 384h1.3v1.3h-1.3zM415 442h1.3v1.3h-1.3zM417 465h1.3v1.3h-1.3zM422 435h1.3v1.3h-1.3zM410 517h1.3v1.3h-1.3zM401 495h1.3v1.3h-1.3zM425 490h1.3v1.3h-1.3zM414 482h1.3v1.3h-1.3zM407 435h1.3v1.3h-1.3zM433 466h1.3v1.3h-1.3zM412 472h1.3v1.3h-1.3zM435 408h1.3v1.3h-1.3zM417 447h1.3v1.3h-1.3zM428 503h1.3v1.3h-1.3zM432 389h1.3v1.3h-1.3zM438 388h1.3v1.3h-1.3zM420 501h1.3v1.3h-1.3zM397 500h1.3v1.3h-1.3zM435 449h1.3v1.3h-1.3zM421 385h1.3v1.3h-1.3zM406 513h1.3v1.3h-1.3zM440 408h1.3v1.3h-1.3zM420 402h1.3v1.3h-1.3zM419 473h1.3v1.3h-1.3zM406 505h1.3v1.3h-1.3zM410 432h1.3v1.3h-1.3zM410 427h1.3v1.3h-1.3zM432 385h1.3v1.3h-1.3zM419 473h1.3v1.3h-1.3zM424 417h1.3v1.3h-1.3zM406 491h1.3v1.3h-1.3zM409 440h1.3v1.3h-1.3zM410 430h1.3v1.3h-1.3zM419 471h1.3v1.3h-1.3zM397 510h1.3v1.3h-1.3zM427 414h1.3v1.3h-1.3zM429 500h1.3v1.3h-1.3zM407 502h1.3v1.3h-1.3zM429 476h1.3v1.3h-1.3zM429 445h1.3v1.3h-1.3z" fill="#c0b030"/><path d="M437 492h1.3v1.3h-1.3zM443 474h1.3v1.3h-1.3zM433 451h1.3v1.3h-1.3zM432 494h1.3v1.3h-1.3zM429 448h1.3v1.3h-1.3zM442 510h1.3v1.3h-1.3zM438 468h1.3v1.3h-1.3zM437 494h1.3v1.3h-1.3zM435 464h1.3v1.3h-1.3zM440 511h1.3v1.3h-1.3zM432 519h1.3v1.3h-1.3zM441 472h1.3v1.3h-1.3zM440 525h1.3v1.3h-1.3zM429 466h1.3v1.3h-1.3zM428 468h1.3v1.3h-1.3zM434 462h1.3v1.3h-1.3zM437 518h1.3v1.3h-1.3zM438 516h1.3v1.3h-1.3zM433 470h1.3v1.3h-1.3zM433 474h1.3v1.3h-1.3zM438 465h1.3v1.3h-1.3zM432 485h1.3v1.3h-1.3zM437 507h1.3v1.3h-1.3zM445 456h1.3v1.3h-1.3zM434 511h1.3v1.3h-1.3zM435 493h1.3v1.3h-1.3zM441 502h1.3v1.3h-1.3zM442 494h1.3v1.3h-1.3zM434 482h1.3v1.3h-1.3zM430 476h1.3v1.3h-1.3z" fill="#30b8a0"/><path d="M442 518h1.3v1.3h-1.3zM444 479h1.3v1.3h-1.3zM436 456h1.3v1.3h-1.3zM441 506h1.3v1.3h-1.3zM432 489h1.3v1.3h-1.3zM444 492h1.3v1.3h-1.3zM433 460h1.3v1.3h-1.3zM437 476h1.3v1.3h-1.3zM442 492h1.3v1.3h-1.3zM432 453h1.3v1.3h-1.3zM441 477h1.3v1.3h-1.3zM443 451h1.3v1.3h-1.3zM435 482h1.3v1.3h-1.3zM431 468h1.3v1.3h-1.3zM429 487h1.3v1.3h-1.3zM444 469h1.3v1.3h-1.3zM441 524h1.3v1.3h-1.3zM428 505h1.3v1.3h-1.3zM441 505h1.3v1.3h-1.3zM432 521h1.3v1.3h-1.3zM437 448h1.3v1.3h-1.3zM445 515h1.3v1.3h-1.3zM432 501h1.3v1.3h-1.3zM444 526h1.3v1.3h-1.3zM445 455h1.3v1.3h-1.3zM441 465h1.3v1.3h-1.3zM442 505h1.3v1.3h-1.3zM437 482h1.3v1.3h-1.3zM436 476h1.3v1.3h-1.3zM444 469h1.3v1.3h-1.3z" fill="#c0a030"/><polygon points="361.0,498.0 412.0,487.0 409.0,527.0 365.0,548.0 356.0,548.0" fill="#2848b8" fill-opacity="0.2"/><path d="M387 533h1.4v1.4h-1.4zM396 523h1.4v1.4h-1.4zM396 510h1.4v1.4h-1.4zM407 520h1.4v1.4h-1.4zM384 533h1.4v1.4h-1.4zM404 514h1.4v1.4h-1.4zM361 545h1.4v1.4h-1.4zM398 505h1.4v1.4h-1.4zM386 497h1.4v1.4h-1.4zM399 492h1.4v1.4h-1.4zM406 527h1.4v1.4h-1.4zM405 497h1.4v1.4h-1.4zM379 515h1.4v1.4h-1.4zM384 536h1.4v1.4h-1.4zM378 503h1.4v1.4h-1.4zM399 496h1.4v1.4h-1.4zM380 522h1.4v1.4h-1.4zM363 511h1.4v1.4h-1.4zM398 495h1.4v1.4h-1.4zM362 523h1.4v1.4h-1.4zM390 500h1.4v1.4h-1.4zM398 491h1.4v1.4h-1.4zM361 510h1.4v1.4h-1.4zM371 499h1.4v1.4h-1.4zM405 518h1.4v1.4h-1.4zM372 498h1.4v1.4h-1.4zM394 507h1.4v1.4h-1.4zM372 542h1.4v1.4h-1.4zM366 504h1.4v1.4h-1.4zM390 517h1.4v1.4h-1.4zM363 522h1.4v1.4h-1.4zM408 518h1.4v1.4h-1.4zM400 495h1.4v1.4h-1.4zM393 520h1.4v1.4h-1.4zM385 518h1.4v1.4h-1.4zM381 535h1.4v1.4h-1.4zM367 540h1.4v1.4h-1.4zM395 497h1.4v1.4h-1.4zM401 524h1.4v1.4h-1.4zM399 504h1.4v1.4h-1.4zM365 519h1.4v1.4h-1.4zM390 531h1.4v1.4h-1.4zM388 524h1.4v1.4h-1.4zM366 518h1.4v1.4h-1.4zM392 521h1.4v1.4h-1.4zM411 496h1.4v1.4h-1.4zM394 529h1.4v1.4h-1.4zM378 519h1.4v1.4h-1.4zM378 533h1.4v1.4h-1.4zM396 533h1.4v1.4h-1.4z" fill="#30a8c0"/><path d="M388 533h1.4v1.4h-1.4zM398 509h1.4v1.4h-1.4zM374 497h1.4v1.4h-1.4zM384 511h1.4v1.4h-1.4zM394 520h1.4v1.4h-1.4zM394 503h1.4v1.4h-1.4zM406 524h1.4v1.4h-1.4zM381 511h1.4v1.4h-1.4zM390 505h1.4v1.4h-1.4zM388 508h1.4v1.4h-1.4zM362 529h1.4v1.4h-1.4zM382 502h1.4v1.4h-1.4zM395 498h1.4v1.4h-1.4zM405 493h1.4v1.4h-1.4zM369 520h1.4v1.4h-1.4zM381 514h1.4v1.4h-1.4zM368 536h1.4v1.4h-1.4zM399 516h1.4v1.4h-1.4zM382 494h1.4v1.4h-1.4zM361 508h1.4v1.4h-1.4zM375 514h1.4v1.4h-1.4zM363 534h1.4v1.4h-1.4zM376 506h1.4v1.4h-1.4zM382 498h1.4v1.4h-1.4zM392 501h1.4v1.4h-1.4zM401 504h1.4v1.4h-1.4zM377 539h1.4v1.4h-1.4zM405 500h1.4v1.4h-1.4zM381 495h1.4v1.4h-1.4zM364 532h1.4v1.4h-1.4zM399 525h1.4v1.4h-1.4zM376 506h1.4v1.4h-1.4zM370 523h1.4v1.4h-1.4zM383 507h1.4v1.4h-1.4zM378 500h1.4v1.4h-1.4zM390 535h1.4v1.4h-1.4zM384 537h1.4v1.4h-1.4zM410 504h1.4v1.4h-1.4zM387 502h1.4v1.4h-1.4zM362 533h1.4v1.4h-1.4zM380 539h1.4v1.4h-1.4zM378 503h1.4v1.4h-1.4zM367 539h1.4v1.4h-1.4zM380 503h1.4v1.4h-1.4zM365 509h1.4v1.4h-1.4zM383 497h1.4v1.4h-1.4zM387 527h1.4v1.4h-1.4zM381 498h1.4v1.4h-1.4zM362 515h1.4v1.4h-1.4zM382 523h1.4v1.4h-1.4z" fill="#2040c0"/><path d="M371 509h1.4v1.4h-1.4zM409 488h1.4v1.4h-1.4zM403 492h1.4v1.4h-1.4zM378 503h1.4v1.4h-1.4zM361 510h1.4v1.4h-1.4zM389 500h1.4v1.4h-1.4zM402 497h1.4v1.4h-1.4zM385 525h1.4v1.4h-1.4zM406 493h1.4v1.4h-1.4zM382 529h1.4v1.4h-1.4zM401 510h1.4v1.4h-1.4zM402 506h1.4v1.4h-1.4zM401 529h1.4v1.4h-1.4zM400 528h1.4v1.4h-1.4zM384 511h1.4v1.4h-1.4zM389 509h1.4v1.4h-1.4zM377 509h1.4v1.4h-1.4zM403 513h1.4v1.4h-1.4zM398 515h1.4v1.4h-1.4zM372 533h1.4v1.4h-1.4zM403 508h1.4v1.4h-1.4zM367 513h1.4v1.4h-1.4zM365 545h1.4v1.4h-1.4zM384 496h1.4v1.4h-1.4zM366 544h1.4v1.4h-1.4zM387 519h1.4v1.4h-1.4zM409 498h1.4v1.4h-1.4zM368 540h1.4v1.4h-1.4zM383 515h1.4v1.4h-1.4zM375 542h1.4v1.4h-1.4zM395 492h1.4v1.4h-1.4zM367 502h1.4v1.4h-1.4zM363 535h1.4v1.4h-1.4zM394 503h1.4v1.4h-1.4zM387 508h1.4v1.4h-1.4zM399 524h1.4v1.4h-1.4zM360 527h1.4v1.4h-1.4zM368 506h1.4v1.4h-1.4zM393 516h1.4v1.4h-1.4zM402 518h1.4v1.4h-1.4zM395 496h1.4v1.4h-1.4zM364 510h1.4v1.4h-1.4zM365 512h1.4v1.4h-1.4zM387 493h1.4v1.4h-1.4zM381 520h1.4v1.4h-1.4zM397 523h1.4v1.4h-1.4zM385 507h1.4v1.4h-1.4zM381 498h1.4v1.4h-1.4zM407 488h1.4v1.4h-1.4zM361 541h1.4v1.4h-1.4z" fill="#c0a030"/><path d="M341 547h1.4v1.4h-1.4zM350 542h1.4v1.4h-1.4zM340 536h1.4v1.4h-1.4zM345 529h1.4v1.4h-1.4zM342 539h1.4v1.4h-1.4zM337 525h1.4v1.4h-1.4zM339 534h1.4v1.4h-1.4zM338 529h1.4v1.4h-1.4zM338 542h1.4v1.4h-1.4zM339 525h1.4v1.4h-1.4zM353 530h1.4v1.4h-1.4zM347 516h1.4v1.4h-1.4zM339 511h1.4v1.4h-1.4zM340 519h1.4v1.4h-1.4zM347 518h1.4v1.4h-1.4zM349 506h1.4v1.4h-1.4zM348 518h1.4v1.4h-1.4zM350 527h1.4v1.4h-1.4zM340 515h1.4v1.4h-1.4zM346 543h1.4v1.4h-1.4zM337 534h1.4v1.4h-1.4zM340 540h1.4v1.4h-1.4zM344 507h1.4v1.4h-1.4zM337 533h1.4v1.4h-1.4zM346 520h1.4v1.4h-1.4zM344 518h1.4v1.4h-1.4zM342 507h1.4v1.4h-1.4zM343 543h1.4v1.4h-1.4zM347 531h1.4v1.4h-1.4zM353 533h1.4v1.4h-1.4z" fill="#30b0b0"/><path d="M353 544h1.4v1.4h-1.4zM335 531h1.4v1.4h-1.4zM343 528h1.4v1.4h-1.4zM351 547h1.4v1.4h-1.4zM352 520h1.4v1.4h-1.4zM350 526h1.4v1.4h-1.4zM341 543h1.4v1.4h-1.4zM342 547h1.4v1.4h-1.4zM343 519h1.4v1.4h-1.4zM353 548h1.4v1.4h-1.4zM339 525h1.4v1.4h-1.4zM354 506h1.4v1.4h-1.4zM338 505h1.4v1.4h-1.4zM353 527h1.4v1.4h-1.4zM338 528h1.4v1.4h-1.4zM347 512h1.4v1.4h-1.4zM338 508h1.4v1.4h-1.4zM337 544h1.4v1.4h-1.4zM335 516h1.4v1.4h-1.4zM341 525h1.4v1.4h-1.4zM341 519h1.4v1.4h-1.4zM354 508h1.4v1.4h-1.4zM349 544h1.4v1.4h-1.4zM341 523h1.4v1.4h-1.4zM347 517h1.4v1.4h-1.4zM343 509h1.4v1.4h-1.4zM347 521h1.4v1.4h-1.4zM338 526h1.4v1.4h-1.4zM349 518h1.4v1.4h-1.4zM336 530h1.4v1.4h-1.4z" fill="#2060c0"/><path d="M360 531h1.4v1.4h-1.4zM358 540h1.4v1.4h-1.4zM342 540h1.4v1.4h-1.4zM367 531h1.4v1.4h-1.4zM366 546h1.4v1.4h-1.4zM339 541h1.4v1.4h-1.4zM356 529h1.4v1.4h-1.4zM369 535h1.4v1.4h-1.4zM357 537h1.4v1.4h-1.4zM332 542h1.4v1.4h-1.4zM359 539h1.4v1.4h-1.4zM352 536h1.4v1.4h-1.4zM343 535h1.4v1.4h-1.4zM330 537h1.4v1.4h-1.4zM344 534h1.4v1.4h-1.4zM369 550h1.4v1.4h-1.4zM367 550h1.4v1.4h-1.4zM342 544h1.4v1.4h-1.4zM363 548h1.4v1.4h-1.4zM367 544h1.4v1.4h-1.4zM359 546h1.4v1.4h-1.4zM332 551h1.4v1.4h-1.4zM338 551h1.4v1.4h-1.4zM344 530h1.4v1.4h-1.4z" fill="#30b0b0"/><path d="M357 555h1.4v1.4h-1.4zM353 531h1.4v1.4h-1.4zM362 542h1.4v1.4h-1.4zM333 537h1.4v1.4h-1.4zM358 546h1.4v1.4h-1.4zM330 549h1.4v1.4h-1.4zM345 533h1.4v1.4h-1.4zM362 550h1.4v1.4h-1.4zM362 543h1.4v1.4h-1.4zM354 528h1.4v1.4h-1.4zM331 560h1.4v1.4h-1.4zM353 543h1.4v1.4h-1.4zM361 542h1.4v1.4h-1.4zM355 530h1.4v1.4h-1.4zM373 529h1.4v1.4h-1.4zM345 546h1.4v1.4h-1.4zM339 559h1.4v1.4h-1.4zM331 547h1.4v1.4h-1.4zM372 556h1.4v1.4h-1.4zM333 542h1.4v1.4h-1.4zM334 549h1.4v1.4h-1.4zM371 547h1.4v1.4h-1.4zM360 558h1.4v1.4h-1.4z" fill="#2040c0"/><path d="M367 544h1.4v1.4h-1.4zM360 547h1.4v1.4h-1.4zM372 559h1.4v1.4h-1.4zM346 551h1.4v1.4h-1.4zM331 545h1.4v1.4h-1.4zM370 530h1.4v1.4h-1.4zM368 551h1.4v1.4h-1.4zM352 557h1.4v1.4h-1.4zM339 548h1.4v1.4h-1.4zM359 531h1.4v1.4h-1.4zM333 533h1.4v1.4h-1.4zM355 545h1.4v1.4h-1.4zM353 557h1.4v1.4h-1.4zM363 541h1.4v1.4h-1.4zM366 551h1.4v1.4h-1.4zM371 529h1.4v1.4h-1.4zM343 528h1.4v1.4h-1.4zM350 539h1.4v1.4h-1.4zM368 558h1.4v1.4h-1.4zM357 559h1.4v1.4h-1.4zM332 533h1.4v1.4h-1.4zM334 552h1.4v1.4h-1.4zM337 535h1.4v1.4h-1.4z" fill="#d0c030"/><polygon points="512.0,415.0 543.0,406.0 543.0,491.0 502.0,498.0 502.0,483.0" fill="#30a090" fill-opacity="0.18"/><path d="M528 445h1.3v1.3h-1.3zM527 422h1.3v1.3h-1.3zM521 495h1.3v1.3h-1.3zM508 454h1.3v1.3h-1.3zM512 475h1.3v1.3h-1.3zM509 448h1.3v1.3h-1.3zM530 421h1.3v1.3h-1.3zM537 445h1.3v1.3h-1.3zM533 454h1.3v1.3h-1.3zM543 426h1.3v1.3h-1.3zM526 456h1.3v1.3h-1.3zM533 460h1.3v1.3h-1.3zM529 425h1.3v1.3h-1.3zM505 470h1.3v1.3h-1.3zM513 444h1.3v1.3h-1.3zM531 460h1.3v1.3h-1.3zM534 428h1.3v1.3h-1.3zM517 445h1.3v1.3h-1.3zM516 416h1.3v1.3h-1.3zM534 467h1.3v1.3h-1.3zM517 432h1.3v1.3h-1.3zM530 460h1.3v1.3h-1.3zM537 483h1.3v1.3h-1.3zM522 461h1.3v1.3h-1.3zM504 482h1.3v1.3h-1.3zM530 488h1.3v1.3h-1.3zM517 480h1.3v1.3h-1.3zM541 456h1.3v1.3h-1.3zM526 463h1.3v1.3h-1.3zM504 497h1.3v1.3h-1.3zM514 428h1.3v1.3h-1.3zM514 442h1.3v1.3h-1.3zM541 434h1.3v1.3h-1.3zM535 477h1.3v1.3h-1.3zM504 492h1.3v1.3h-1.3zM510 460h1.3v1.3h-1.3zM537 483h1.3v1.3h-1.3zM536 448h1.3v1.3h-1.3zM508 467h1.3v1.3h-1.3zM515 484h1.3v1.3h-1.3zM540 427h1.3v1.3h-1.3zM512 453h1.3v1.3h-1.3zM504 488h1.3v1.3h-1.3zM516 473h1.3v1.3h-1.3zM513 492h1.3v1.3h-1.3zM542 487h1.3v1.3h-1.3zM542 419h1.3v1.3h-1.3zM517 427h1.3v1.3h-1.3zM536 443h1.3v1.3h-1.3zM533 410h1.3v1.3h-1.3zM530 422h1.3v1.3h-1.3zM537 456h1.3v1.3h-1.3zM536 423h1.3v1.3h-1.3zM511 474h1.3v1.3h-1.3zM533 417h1.3v1.3h-1.3zM518 448h1.3v1.3h-1.3zM512 452h1.3v1.3h-1.3zM515 421h1.3v1.3h-1.3zM522 454h1.3v1.3h-1.3zM514 424h1.3v1.3h-1.3zM538 487h1.3v1.3h-1.3zM518 477h1.3v1.3h-1.3zM537 438h1.3v1.3h-1.3zM523 476h1.3v1.3h-1.3zM527 465h1.3v1.3h-1.3zM518 434h1.3v1.3h-1.3zM511 474h1.3v1.3h-1.3z" fill="#30c0a0"/><path d="M532 412h1.3v1.3h-1.3zM516 431h1.3v1.3h-1.3zM526 427h1.3v1.3h-1.3zM524 469h1.3v1.3h-1.3zM539 414h1.3v1.3h-1.3zM519 432h1.3v1.3h-1.3zM517 428h1.3v1.3h-1.3zM540 479h1.3v1.3h-1.3zM538 458h1.3v1.3h-1.3zM508 447h1.3v1.3h-1.3zM535 419h1.3v1.3h-1.3zM532 430h1.3v1.3h-1.3zM513 444h1.3v1.3h-1.3zM527 432h1.3v1.3h-1.3zM528 446h1.3v1.3h-1.3zM515 432h1.3v1.3h-1.3zM527 412h1.3v1.3h-1.3zM521 427h1.3v1.3h-1.3zM538 457h1.3v1.3h-1.3zM504 491h1.3v1.3h-1.3zM533 446h1.3v1.3h-1.3zM512 459h1.3v1.3h-1.3zM512 427h1.3v1.3h-1.3zM538 458h1.3v1.3h-1.3zM542 474h1.3v1.3h-1.3zM529 469h1.3v1.3h-1.3zM536 445h1.3v1.3h-1.3zM521 470h1.3v1.3h-1.3zM524 431h1.3v1.3h-1.3zM534 414h1.3v1.3h-1.3zM526 469h1.3v1.3h-1.3zM541 421h1.3v1.3h-1.3zM535 479h1.3v1.3h-1.3zM506 493h1.3v1.3h-1.3zM517 419h1.3v1.3h-1.3zM508 491h1.3v1.3h-1.3zM537 450h1.3v1.3h-1.3zM543 416h1.3v1.3h-1.3zM524 491h1.3v1.3h-1.3zM521 484h1.3v1.3h-1.3zM519 458h1.3v1.3h-1.3zM523 454h1.3v1.3h-1.3zM541 482h1.3v1.3h-1.3zM531 443h1.3v1.3h-1.3zM514 437h1.3v1.3h-1.3zM517 486h1.3v1.3h-1.3zM537 415h1.3v1.3h-1.3zM534 467h1.3v1.3h-1.3zM539 410h1.3v1.3h-1.3zM530 443h1.3v1.3h-1.3zM532 491h1.3v1.3h-1.3zM536 443h1.3v1.3h-1.3zM529 474h1.3v1.3h-1.3zM518 429h1.3v1.3h-1.3zM537 483h1.3v1.3h-1.3zM527 479h1.3v1.3h-1.3zM536 423h1.3v1.3h-1.3zM519 457h1.3v1.3h-1.3zM510 496h1.3v1.3h-1.3zM535 413h1.3v1.3h-1.3zM518 467h1.3v1.3h-1.3zM517 483h1.3v1.3h-1.3zM541 475h1.3v1.3h-1.3zM507 491h1.3v1.3h-1.3zM510 466h1.3v1.3h-1.3zM512 476h1.3v1.3h-1.3zM514 480h1.3v1.3h-1.3z" fill="#50c050"/><path d="M531 440h1.3v1.3h-1.3zM516 473h1.3v1.3h-1.3zM527 455h1.3v1.3h-1.3zM541 463h1.3v1.3h-1.3zM534 433h1.3v1.3h-1.3zM513 446h1.3v1.3h-1.3zM532 429h1.3v1.3h-1.3zM537 409h1.3v1.3h-1.3zM516 489h1.3v1.3h-1.3zM529 421h1.3v1.3h-1.3zM508 454h1.3v1.3h-1.3zM506 470h1.3v1.3h-1.3zM524 493h1.3v1.3h-1.3zM528 477h1.3v1.3h-1.3zM510 443h1.3v1.3h-1.3zM509 467h1.3v1.3h-1.3zM509 461h1.3v1.3h-1.3zM528 427h1.3v1.3h-1.3zM539 438h1.3v1.3h-1.3zM523 436h1.3v1.3h-1.3zM519 447h1.3v1.3h-1.3zM542 439h1.3v1.3h-1.3zM519 417h1.3v1.3h-1.3zM536 419h1.3v1.3h-1.3zM505 489h1.3v1.3h-1.3zM539 444h1.3v1.3h-1.3zM514 485h1.3v1.3h-1.3zM522 483h1.3v1.3h-1.3zM541 475h1.3v1.3h-1.3zM518 462h1.3v1.3h-1.3zM503 484h1.3v1.3h-1.3zM541 433h1.3v1.3h-1.3zM513 476h1.3v1.3h-1.3zM516 419h1.3v1.3h-1.3zM538 420h1.3v1.3h-1.3zM537 410h1.3v1.3h-1.3zM537 428h1.3v1.3h-1.3zM542 477h1.3v1.3h-1.3zM503 498h1.3v1.3h-1.3zM530 451h1.3v1.3h-1.3zM534 471h1.3v1.3h-1.3zM534 447h1.3v1.3h-1.3zM516 433h1.3v1.3h-1.3zM532 477h1.3v1.3h-1.3zM510 453h1.3v1.3h-1.3zM528 492h1.3v1.3h-1.3zM539 425h1.3v1.3h-1.3zM537 472h1.3v1.3h-1.3zM503 496h1.3v1.3h-1.3zM535 440h1.3v1.3h-1.3zM520 486h1.3v1.3h-1.3zM523 453h1.3v1.3h-1.3zM517 440h1.3v1.3h-1.3zM529 446h1.3v1.3h-1.3zM538 470h1.3v1.3h-1.3zM540 465h1.3v1.3h-1.3zM515 454h1.3v1.3h-1.3zM527 457h1.3v1.3h-1.3zM522 466h1.3v1.3h-1.3zM523 455h1.3v1.3h-1.3zM525 442h1.3v1.3h-1.3zM534 475h1.3v1.3h-1.3zM526 486h1.3v1.3h-1.3zM539 476h1.3v1.3h-1.3zM519 440h1.3v1.3h-1.3zM510 495h1.3v1.3h-1.3z" fill="#2aa0c8"/><polyline points="479.0,408.0 543.0,378.0" fill="none" stroke="#50c050" stroke-width="1.34" stroke-dasharray="2 1"/><polyline points="479.0,414.0 543.0,384.0" fill="none" stroke="#50c050" stroke-width="1.34" stroke-dasharray="2 1"/><polyline points="479.0,420.0 543.0,390.0" fill="none" stroke="#50c050" stroke-width="1.34" stroke-dasharray="2 1"/><polyline points="479.0,426.0 543.0,396.0" fill="none" stroke="#50c050" stroke-width="1.34" stroke-dasharray="2 1"/><polyline points="479.0,432.0 543.0,402.0" fill="none" stroke="#50c050" stroke-width="1.34" stroke-dasharray="2 1"/><path d="M509 515h1.4v1.4h-1.4zM524 529h1.4v1.4h-1.4zM508 538h1.4v1.4h-1.4zM503 494h1.4v1.4h-1.4zM532 541h1.4v1.4h-1.4zM531 519h1.4v1.4h-1.4zM500 532h1.4v1.4h-1.4zM527 527h1.4v1.4h-1.4zM534 545h1.4v1.4h-1.4zM515 501h1.4v1.4h-1.4zM540 535h1.4v1.4h-1.4zM530 499h1.4v1.4h-1.4zM520 545h1.4v1.4h-1.4zM531 530h1.4v1.4h-1.4zM525 514h1.4v1.4h-1.4zM538 524h1.4v1.4h-1.4zM528 522h1.4v1.4h-1.4zM538 533h1.4v1.4h-1.4zM533 512h1.4v1.4h-1.4zM512 534h1.4v1.4h-1.4zM508 537h1.4v1.4h-1.4zM516 509h1.4v1.4h-1.4zM503 506h1.4v1.4h-1.4zM505 500h1.4v1.4h-1.4zM520 513h1.4v1.4h-1.4zM508 523h1.4v1.4h-1.4zM512 523h1.4v1.4h-1.4zM506 521h1.4v1.4h-1.4zM509 541h1.4v1.4h-1.4zM541 514h1.4v1.4h-1.4zM521 519h1.4v1.4h-1.4zM523 547h1.4v1.4h-1.4zM541 542h1.4v1.4h-1.4zM515 496h1.4v1.4h-1.4zM504 520h1.4v1.4h-1.4zM536 496h1.4v1.4h-1.4zM512 545h1.4v1.4h-1.4zM538 529h1.4v1.4h-1.4zM536 511h1.4v1.4h-1.4zM512 520h1.4v1.4h-1.4z" fill="#d08020"/><path d="M508 515h1.4v1.4h-1.4zM511 513h1.4v1.4h-1.4zM513 542h1.4v1.4h-1.4zM518 517h1.4v1.4h-1.4zM522 510h1.4v1.4h-1.4zM511 511h1.4v1.4h-1.4zM502 504h1.4v1.4h-1.4zM527 528h1.4v1.4h-1.4zM542 515h1.4v1.4h-1.4zM519 503h1.4v1.4h-1.4zM510 531h1.4v1.4h-1.4zM535 534h1.4v1.4h-1.4zM504 496h1.4v1.4h-1.4zM500 527h1.4v1.4h-1.4zM505 538h1.4v1.4h-1.4zM510 523h1.4v1.4h-1.4zM535 506h1.4v1.4h-1.4zM506 499h1.4v1.4h-1.4zM539 544h1.4v1.4h-1.4zM509 521h1.4v1.4h-1.4zM506 544h1.4v1.4h-1.4zM502 505h1.4v1.4h-1.4zM542 529h1.4v1.4h-1.4zM520 541h1.4v1.4h-1.4zM529 501h1.4v1.4h-1.4zM536 519h1.4v1.4h-1.4zM534 505h1.4v1.4h-1.4zM515 502h1.4v1.4h-1.4zM509 512h1.4v1.4h-1.4zM540 539h1.4v1.4h-1.4zM501 515h1.4v1.4h-1.4zM503 539h1.4v1.4h-1.4zM522 531h1.4v1.4h-1.4zM518 534h1.4v1.4h-1.4zM503 501h1.4v1.4h-1.4zM527 509h1.4v1.4h-1.4zM519 524h1.4v1.4h-1.4zM506 511h1.4v1.4h-1.4zM505 510h1.4v1.4h-1.4zM506 539h1.4v1.4h-1.4z" fill="#c03020"/><path d="M529 582h1.4v1.4h-1.4zM542 569h1.4v1.4h-1.4zM540 555h1.4v1.4h-1.4zM520 568h1.4v1.4h-1.4zM542 539h1.4v1.4h-1.4zM542 537h1.4v1.4h-1.4zM540 534h1.4v1.4h-1.4zM525 575h1.4v1.4h-1.4zM521 547h1.4v1.4h-1.4zM543 583h1.4v1.4h-1.4zM519 564h1.4v1.4h-1.4zM519 566h1.4v1.4h-1.4zM529 534h1.4v1.4h-1.4zM526 586h1.4v1.4h-1.4zM532 577h1.4v1.4h-1.4zM521 552h1.4v1.4h-1.4zM520 574h1.4v1.4h-1.4zM529 584h1.4v1.4h-1.4zM538 540h1.4v1.4h-1.4zM534 539h1.4v1.4h-1.4zM518 540h1.4v1.4h-1.4zM528 555h1.4v1.4h-1.4zM523 578h1.4v1.4h-1.4zM518 538h1.4v1.4h-1.4zM538 547h1.4v1.4h-1.4zM528 561h1.4v1.4h-1.4zM533 544h1.4v1.4h-1.4zM541 529h1.4v1.4h-1.4zM518 551h1.4v1.4h-1.4zM532 563h1.4v1.4h-1.4z" fill="#e07020"/><path d="M518 546h1.4v1.4h-1.4zM520 550h1.4v1.4h-1.4zM518 584h1.4v1.4h-1.4zM533 557h1.4v1.4h-1.4zM533 535h1.4v1.4h-1.4zM530 580h1.4v1.4h-1.4zM540 580h1.4v1.4h-1.4zM523 538h1.4v1.4h-1.4zM538 557h1.4v1.4h-1.4zM522 555h1.4v1.4h-1.4zM533 564h1.4v1.4h-1.4zM520 580h1.4v1.4h-1.4zM542 587h1.4v1.4h-1.4zM524 561h1.4v1.4h-1.4zM519 530h1.4v1.4h-1.4zM538 573h1.4v1.4h-1.4zM522 529h1.4v1.4h-1.4zM541 555h1.4v1.4h-1.4zM521 587h1.4v1.4h-1.4zM526 576h1.4v1.4h-1.4zM538 543h1.4v1.4h-1.4zM529 547h1.4v1.4h-1.4zM537 587h1.4v1.4h-1.4zM539 547h1.4v1.4h-1.4zM527 570h1.4v1.4h-1.4zM518 581h1.4v1.4h-1.4zM529 568h1.4v1.4h-1.4zM541 564h1.4v1.4h-1.4zM536 535h1.4v1.4h-1.4zM532 530h1.4v1.4h-1.4z" fill="#d0a020"/><polyline points="462.0,560.0 488.0,552.0 511.0,544.0" fill="none" stroke="#c83020" stroke-width="1.34" stroke-dasharray="1.5 2.5"/><path d="M343 502h1.4v1.4h-1.4zM347 529h1.4v1.4h-1.4zM351 523h1.4v1.4h-1.4zM354 514h1.4v1.4h-1.4zM351 498h1.4v1.4h-1.4zM334 535h1.4v1.4h-1.4zM354 501h1.4v1.4h-1.4zM336 528h1.4v1.4h-1.4zM350 547h1.4v1.4h-1.4zM348 524h1.4v1.4h-1.4zM354 506h1.4v1.4h-1.4zM343 528h1.4v1.4h-1.4zM334 496h1.4v1.4h-1.4zM344 533h1.4v1.4h-1.4zM349 507h1.4v1.4h-1.4zM334 540h1.4v1.4h-1.4zM336 528h1.4v1.4h-1.4zM349 533h1.4v1.4h-1.4zM354 546h1.4v1.4h-1.4zM351 529h1.4v1.4h-1.4zM357 505h1.4v1.4h-1.4zM340 542h1.4v1.4h-1.4zM342 541h1.4v1.4h-1.4zM338 498h1.4v1.4h-1.4zM350 492h1.4v1.4h-1.4zM337 508h1.4v1.4h-1.4zM336 548h1.4v1.4h-1.4zM347 518h1.4v1.4h-1.4zM354 490h1.4v1.4h-1.4zM349 519h1.4v1.4h-1.4z" fill="#30b0a0"/><path d="M337 543h1.4v1.4h-1.4zM347 511h1.4v1.4h-1.4zM353 528h1.4v1.4h-1.4zM337 497h1.4v1.4h-1.4zM349 525h1.4v1.4h-1.4zM334 540h1.4v1.4h-1.4zM351 532h1.4v1.4h-1.4zM336 543h1.4v1.4h-1.4zM334 507h1.4v1.4h-1.4zM338 541h1.4v1.4h-1.4zM337 528h1.4v1.4h-1.4zM345 512h1.4v1.4h-1.4zM344 532h1.4v1.4h-1.4zM346 541h1.4v1.4h-1.4zM336 492h1.4v1.4h-1.4zM355 533h1.4v1.4h-1.4zM336 541h1.4v1.4h-1.4zM348 513h1.4v1.4h-1.4zM339 514h1.4v1.4h-1.4zM343 515h1.4v1.4h-1.4zM338 529h1.4v1.4h-1.4zM341 543h1.4v1.4h-1.4zM352 532h1.4v1.4h-1.4zM334 499h1.4v1.4h-1.4zM339 522h1.4v1.4h-1.4zM339 529h1.4v1.4h-1.4zM348 531h1.4v1.4h-1.4zM357 542h1.4v1.4h-1.4zM348 545h1.4v1.4h-1.4zM349 499h1.4v1.4h-1.4z" fill="#2060c0"/><polyline points="531.0,630.0 543.0,624.0" fill="none" stroke="#b0c030" stroke-width="1.34" stroke-dasharray="1.5 1.5"/><polygon points="398.0,348.0 424.0,344.0 424.0,384.0 398.0,386.0" fill="#2858c8" fill-opacity="0.35"/><path d="M405 353h1.4v1.4h-1.4zM421 348h1.4v1.4h-1.4zM399 352h1.4v1.4h-1.4zM404 369h1.4v1.4h-1.4zM407 351h1.4v1.4h-1.4zM400 348h1.4v1.4h-1.4zM419 375h1.4v1.4h-1.4zM408 367h1.4v1.4h-1.4zM420 368h1.4v1.4h-1.4zM404 356h1.4v1.4h-1.4zM401 356h1.4v1.4h-1.4zM408 353h1.4v1.4h-1.4zM415 370h1.4v1.4h-1.4zM402 360h1.4v1.4h-1.4zM412 373h1.4v1.4h-1.4zM406 355h1.4v1.4h-1.4zM421 357h1.4v1.4h-1.4zM422 363h1.4v1.4h-1.4zM413 355h1.4v1.4h-1.4zM408 353h1.4v1.4h-1.4zM401 370h1.4v1.4h-1.4zM400 360h1.4v1.4h-1.4zM423 380h1.4v1.4h-1.4zM416 367h1.4v1.4h-1.4zM401 362h1.4v1.4h-1.4zM421 355h1.4v1.4h-1.4zM422 381h1.4v1.4h-1.4zM414 350h1.4v1.4h-1.4zM418 366h1.4v1.4h-1.4zM399 383h1.4v1.4h-1.4zM421 384h1.4v1.4h-1.4zM400 376h1.4v1.4h-1.4zM410 367h1.4v1.4h-1.4zM409 353h1.4v1.4h-1.4zM403 357h1.4v1.4h-1.4zM409 366h1.4v1.4h-1.4zM407 369h1.4v1.4h-1.4zM400 371h1.4v1.4h-1.4zM420 347h1.4v1.4h-1.4zM404 350h1.4v1.4h-1.4zM410 377h1.4v1.4h-1.4zM401 362h1.4v1.4h-1.4zM417 372h1.4v1.4h-1.4zM408 358h1.4v1.4h-1.4zM403 363h1.4v1.4h-1.4z" fill="#2080e0"/><path d="M417 372h1.4v1.4h-1.4zM404 365h1.4v1.4h-1.4zM415 367h1.4v1.4h-1.4zM419 373h1.4v1.4h-1.4zM423 358h1.4v1.4h-1.4zM420 369h1.4v1.4h-1.4zM412 385h1.4v1.4h-1.4zM420 370h1.4v1.4h-1.4zM416 346h1.4v1.4h-1.4zM400 354h1.4v1.4h-1.4zM415 359h1.4v1.4h-1.4zM405 383h1.4v1.4h-1.4zM402 375h1.4v1.4h-1.4zM424 371h1.4v1.4h-1.4zM420 377h1.4v1.4h-1.4zM403 384h1.4v1.4h-1.4zM415 361h1.4v1.4h-1.4zM405 354h1.4v1.4h-1.4zM413 382h1.4v1.4h-1.4zM424 365h1.4v1.4h-1.4zM419 362h1.4v1.4h-1.4zM424 366h1.4v1.4h-1.4zM398 374h1.4v1.4h-1.4zM405 371h1.4v1.4h-1.4zM410 384h1.4v1.4h-1.4zM411 352h1.4v1.4h-1.4zM406 371h1.4v1.4h-1.4zM418 367h1.4v1.4h-1.4zM398 358h1.4v1.4h-1.4zM421 379h1.4v1.4h-1.4zM400 364h1.4v1.4h-1.4zM418 349h1.4v1.4h-1.4zM405 381h1.4v1.4h-1.4zM412 375h1.4v1.4h-1.4zM424 371h1.4v1.4h-1.4zM401 353h1.4v1.4h-1.4zM404 353h1.4v1.4h-1.4zM404 382h1.4v1.4h-1.4zM404 372h1.4v1.4h-1.4zM422 368h1.4v1.4h-1.4zM419 352h1.4v1.4h-1.4zM409 364h1.4v1.4h-1.4zM424 348h1.4v1.4h-1.4zM420 354h1.4v1.4h-1.4zM409 356h1.4v1.4h-1.4z" fill="#30b0c0"/><path d="M290.0 404.0Q329.0 399.5 368.0 381.0" fill="none" stroke="#e0c030" stroke-width="1.2" stroke-dasharray="2 1.2"/><path d="M286.0 413.0Q338.0 406.5 390.0 386.0" fill="none" stroke="#e0b030" stroke-width="1.2" stroke-dasharray="2 1.2"/><path d="M288.0 424.0Q348.0 414.0 408.0 390.0" fill="none" stroke="#e0a028" stroke-width="1.2" stroke-dasharray="2 1.2"/><path d="M293.0 436.0Q361.5 424.5 430.0 399.0" fill="none" stroke="#e09028" stroke-width="1.2" stroke-dasharray="2 1.2"/><path d="M306.0 446.0Q387.0 434.0 468.0 408.0" fill="none" stroke="#e08828" stroke-width="1.2" stroke-dasharray="2 1.2"/><path d="M310.0 458.0Q394.0 446.0 478.0 420.0" fill="none" stroke="#e08020" stroke-width="1.2" stroke-dasharray="2 1.2"/><path d="M314.0 472.0Q376.0 466.0 438.0 446.0" fill="none" stroke="#e07820" stroke-width="1.2" stroke-dasharray="2 1.2"/><path d="M320.0 488.0Q359.0 486.0 398.0 470.0" fill="none" stroke="#e07020" stroke-width="1.2" stroke-dasharray="2 1.2"/><polyline points="314.7,318.7 316.8,319.4 318.8,320.3 320.8,321.2 322.7,322.3 324.6,323.4 326.4,324.6 328.1,325.9 329.8,327.3 331.4,328.8 332.9,330.3 334.4,331.9 335.7,333.5 337.0,335.2 338.2,337.0 339.3,338.8 340.3,340.7 341.3,342.6 342.1,344.6 342.8,346.6 343.4,348.6 344.0,350.7 344.4,352.7 344.7,354.8 344.9,356.9 345.0,359.0 345.0,361.2 344.9,363.3 344.7,365.4 344.3,367.5 343.9,369.5 343.4,371.6 342.7,373.6 342.0,375.6 341.2,377.5 340.3,379.5 339.2,381.3 338.1,383.2 336.9,384.9 335.6,386.6 334.2,388.3" fill="none" stroke="#e05020" stroke-width="1.34" stroke-dasharray="3 3" stroke-opacity="0.8"/><polyline points="316.8,314.0 319.1,314.8 321.4,315.8 323.6,316.8 325.8,318.0 327.9,319.3 329.9,320.6 331.9,322.1 333.8,323.6 335.6,325.2 337.3,326.9 339.0,328.7 340.5,330.5 342.0,332.4 343.3,334.4 344.6,336.4 345.7,338.5 346.8,340.7 347.7,342.8 348.5,345.1 349.2,347.3 349.8,349.6 350.3,351.9 350.6,354.2 350.9,356.6 351.0,358.9 351.0,361.3 350.9,363.6 350.6,366.0 350.2,368.3 349.8,370.6 349.2,372.9 348.5,375.1 347.6,377.4 346.7,379.5 345.6,381.7 344.5,383.8 343.2,385.8 341.9,387.8 340.4,389.7 338.8,391.5" fill="none" stroke="#e06020" stroke-width="1.34" stroke-dasharray="3 3" stroke-opacity="0.8"/><polyline points="318.8,309.3 321.4,310.2 324.0,311.3 326.5,312.4 328.9,313.7 331.2,315.1 333.5,316.6 335.7,318.2 337.8,319.9 339.8,321.6 341.8,323.5 343.6,325.5 345.3,327.5 346.9,329.6 348.5,331.8 349.9,334.0 351.1,336.3 352.3,338.7 353.3,341.1 354.2,343.5 355.0,346.0 355.7,348.5 356.2,351.1 356.6,353.7 356.9,356.2 357.0,358.8 357.0,361.4 356.8,364.0 356.6,366.6 356.2,369.1 355.6,371.7 355.0,374.2 354.2,376.7 353.2,379.1 352.2,381.5 351.0,383.9 349.7,386.2 348.3,388.4 346.8,390.6 345.2,392.7 343.4,394.7" fill="none" stroke="#d87020" stroke-width="1.34" stroke-dasharray="3 3" stroke-opacity="0.8"/><polyline points="320.9,304.6 323.7,305.6 326.6,306.7 329.3,308.0 332.0,309.4 334.6,310.9 337.1,312.6 339.5,314.3 341.8,316.2 344.1,318.1 346.2,320.1 348.2,322.3 350.1,324.5 351.9,326.8 353.6,329.2 355.1,331.6 356.5,334.1 357.8,336.7 358.9,339.3 360.0,342.0 360.8,344.7 361.5,347.5 362.1,350.3 362.6,353.1 362.8,355.9 363.0,358.7 363.0,361.5 362.8,364.4 362.5,367.2 362.1,370.0 361.5,372.8 360.7,375.5 359.9,378.2 358.8,380.9 357.7,383.5 356.4,386.1 355.0,388.6 353.4,391.0 351.7,393.4 349.9,395.7 348.0,397.9" fill="none" stroke="#e05020" stroke-width="1.34" stroke-dasharray="3 3" stroke-opacity="0.8"/><polyline points="322.9,299.9 326.1,301.0 329.1,302.2 332.1,303.6 335.1,305.1 337.9,306.8 340.6,308.6 343.3,310.4 345.8,312.4 348.3,314.5 350.6,316.8 352.8,319.1 354.9,321.5 356.9,324.0 358.7,326.6 360.4,329.2 361.9,331.9 363.3,334.7 364.6,337.6 365.7,340.5 366.6,343.4 367.4,346.4 368.0,349.4 368.5,352.5 368.8,355.5 369.0,358.6 369.0,361.7 368.8,364.7 368.5,367.8 368.0,370.8 367.3,373.9 366.5,376.8 365.6,379.8 364.5,382.7 363.2,385.5 361.8,388.3 360.2,391.0 358.5,393.7 356.7,396.2 354.7,398.7 352.6,401.1" fill="none" stroke="#e06020" stroke-width="1.34" stroke-dasharray="3 3" stroke-opacity="0.8"/><polyline points="325.0,295.2 328.4,296.4 331.7,297.7 335.0,299.2 338.1,300.9 341.2,302.6 344.2,304.5 347.1,306.6 349.9,308.7 352.5,311.0 355.0,313.4 357.4,315.9 359.7,318.5 361.8,321.2 363.8,323.9 365.6,326.8 367.3,329.8 368.8,332.8 370.2,335.8 371.4,339.0 372.4,342.1 373.3,345.4 374.0,348.6 374.5,351.9 374.8,355.2 375.0,358.5 375.0,361.8 374.8,365.1 374.4,368.4 373.9,371.7 373.2,374.9 372.3,378.1 371.3,381.3 370.1,384.4 368.7,387.5 367.2,390.5 365.5,393.5 363.6,396.3 361.6,399.1 359.5,401.8 357.2,404.4" fill="none" stroke="#d87020" stroke-width="1.34" stroke-dasharray="3 3" stroke-opacity="0.8"/><polyline points="327.0,290.5 330.7,291.8 334.3,293.2 337.8,294.8 341.2,296.6 344.6,298.5 347.8,300.5 350.9,302.7 353.9,305.0 356.7,307.4 359.5,310.0 362.0,312.7 364.5,315.5 366.8,318.4 368.9,321.3 370.9,324.4 372.7,327.6 374.3,330.8 375.8,334.1 377.1,337.4 378.2,340.8 379.1,344.3 379.9,347.8 380.4,351.3 380.8,354.8 381.0,358.4 381.0,361.9 380.8,365.5 380.4,369.0 379.8,372.5 379.1,376.0 378.1,379.5 377.0,382.9 375.7,386.2 374.2,389.5 372.5,392.7 370.7,395.9 368.7,398.9 366.6,401.9 364.3,404.8 361.8,407.6" fill="none" stroke="#e05020" stroke-width="1.34" stroke-dasharray="3 3" stroke-opacity="0.8"/></svg>
<div class="a" style="left:927px;top:92px;width:268px;height:22px;background:#b9b9b9"></div>
<span class="t" style="left:952.7px;top:97.4px;font-size:13.5px;transform:scaleX(1.139);color:#1d1d1d;">Views</span>
<span class="t" style="left:929.3px;top:127.1px;font-size:13.5px;transform:scaleX(1.096);color:#1d1d1d;">Type:</span>
<div class="a" style="left:972px;top:120px;width:138px;height:25px;background:linear-gradient(#fbfbfb,#ededed);border:1px solid #b7b7b7;border-radius:3px;box-sizing:border-box"></div>
<span class="t" style="left:976.7px;top:127.1px;font-size:13.5px;transform:scaleX(1.147);color:#1d1d1d;">Orbit (rviz)</span>
<svg class="a" style="left:1095px;top:130px;" width="8" height="5" viewBox="0 0 8 5"><path d="M0 0L8 0L4 4.5Z" fill="#555"/></svg>
<div class="a" style="left:1116px;top:120px;width:84px;height:25px;background:linear-gradient(#fbfbfb,#ededed);border:1px solid #b7b7b7;border-radius:3px;box-sizing:border-box"></div>
<span class="t" style="left:1139.7px;top:127.1px;font-size:13.5px;transform:scaleX(1.162);color:#1d1d1d;">Zero</span>
<div class="a" style="left:927px;top:153px;width:273px;height:594px;background:#fff;border:1px solid #c2c2c2;box-sizing:border-box"></div>
<div class="a" style="left:1040px;top:154px;width:1px;height:592px;background:#dedede"></div>
<span class="t" style="left:950.9px;top:156.2px;font-size:13.5px;transform:scaleX(1.170);color:#111;font-weight:bold;">Current V...</span>
<span class="t" style="left:1042.8px;top:156.2px;font-size:13.5px;transform:scaleX(1.154);color:#111;font-weight:bold;">Orbit (rviz)</span>
<span class="t" style="left:971.0px;top:173.2px;font-size:13.5px;transform:scaleX(1.112);color:#1d1d1d;">Near Cl...</span>
<span class="t" style="left:1042.8px;top:173.2px;font-size:13.5px;transform:scaleX(1.151);color:#1d1d1d;">0,01</span>
<span class="t" style="left:971.0px;top:190.2px;font-size:13.5px;transform:scaleX(1.174);color:#1d1d1d;">Invert ...</span>
<span class="t" style="left:971.0px;top:207.2px;font-size:13.5px;transform:scaleX(1.205);color:#1d1d1d;">Target ...</span>
<span class="t" style="left:1042.9px;top:207.2px;font-size:13.5px;transform:scaleX(1.089);color:#1d1d1d;">&lt;Fixed Frame&gt;</span>
<span class="t" style="left:971.1px;top:224.2px;font-size:13.5px;transform:scaleX(1.108);color:#1d1d1d;">Distance</span>
<span class="t" style="left:1042.9px;top:224.2px;font-size:13.5px;transform:scaleX(1.100);color:#1d1d1d;">12,7146</span>
<span class="t" style="left:971.1px;top:241.2px;font-size:13.5px;transform:scaleX(1.082);color:#1d1d1d;">Focal S...</span>
<span class="t" style="left:1042.8px;top:241.2px;font-size:13.5px;transform:scaleX(1.191);color:#1d1d1d;">0,05</span>
<span class="t" style="left:971.1px;top:258.2px;font-size:13.5px;transform:scaleX(1.082);color:#1d1d1d;">Focal S...</span>
<span class="t" style="left:971.1px;top:275.2px;font-size:13.5px;transform:scaleX(1.075);color:#1d1d1d;">Yaw</span>
<span class="t" style="left:1042.9px;top:275.2px;font-size:13.5px;transform:scaleX(1.107);color:#1d1d1d;">1,5854</span>
<span class="t" style="left:971.0px;top:292.2px;font-size:13.5px;transform:scaleX(1.158);color:#1d1d1d;">Pitch</span>
<span class="t" style="left:1042.8px;top:292.2px;font-size:13.5px;transform:scaleX(1.123);color:#1d1d1d;">0,630398</span>
<span class="t" style="left:971.0px;top:309.2px;font-size:13.5px;transform:scaleX(1.174);color:#1d1d1d;">Field o...</span>
<span class="t" style="left:1042.8px;top:309.2px;font-size:13.5px;transform:scaleX(1.123);color:#1d1d1d;">0,785398</span>
<span class="t" style="left:971.0px;top:326.2px;font-size:13.5px;transform:scaleX(1.116);color:#1d1d1d;">Focal P...</span>
<span class="t" style="left:1042.9px;top:326.2px;font-size:13.5px;transform:scaleX(1.043);color:#1d1d1d;">0; 0; 0</span>
<div class="a" style="left:929px;top:753px;width:85px;height:25px;background:linear-gradient(#fbfbfb,#ececec);border:1px solid #b7b7b7;border-radius:3px;box-sizing:border-box"></div>
<span class="t" style="left:955.3px;top:759.6px;font-size:13.5px;transform:scaleX(0.977);color:#1d1d1d;">Save</span>
<div class="a" style="left:1020px;top:753px;width:85px;height:25px;background:linear-gradient(#fbfbfb,#ececec);border:1px solid #b7b7b7;border-radius:3px;box-sizing:border-box"></div>
<span class="t" style="left:1033.8px;top:759.6px;font-size:13.5px;transform:scaleX(1.088);color:#1d1d1d;">Remove</span>
<div class="a" style="left:1111px;top:753px;width:89px;height:25px;background:linear-gradient(#fbfbfb,#ececec);border:1px solid #b7b7b7;border-radius:3px;box-sizing:border-box"></div>
<span class="t" style="left:1125.3px;top:759.6px;font-size:13.5px;transform:scaleX(1.091);color:#1d1d1d;">Rename</span>
<div class="a" style="left:0px;top:786px;width:1195px;height:22px;background:#b9b9b9"></div>
<span class="t" style="left:23.7px;top:790.1px;font-size:13.5px;transform:scaleX(1.126);color:#1d1d1d;">Time</span>
<div class="a" style="left:9px;top:815px;width:80px;height:25px;background:linear-gradient(#fbfbfb,#ececec);border:1px solid #b7b7b7;border-radius:3px;box-sizing:border-box"></div>
<span class="t" style="left:36.8px;top:821.6px;font-size:13.5px;transform:scaleX(1.048);color:#1d1d1d;">Pause</span>
<span class="t" style="left:104.7px;top:822.1px;font-size:13.5px;transform:scaleX(1.129);color:#1d1d1d;">Synchronization:</span>
<div class="a" style="left:224px;top:815px;width:120px;height:25px;background:linear-gradient(#fbfbfb,#ededed);border:1px solid #b7b7b7;border-radius:3px;box-sizing:border-box"></div>
<span class="t" style="left:228.2px;top:822.1px;font-size:13.5px;transform:scaleX(1.199);color:#1d1d1d;">Off</span>
<svg class="a" style="left:328px;top:825px;" width="8" height="5" viewBox="0 0 8 5"><path d="M0 0L8 0L4 4.5Z" fill="#555"/></svg>
<span class="t" style="left:359.9px;top:822.1px;font-size:13.5px;transform:scaleX(1.052);color:#1d1d1d;">ROS Time:</span>
<div class="a" style="left:436px;top:815px;width:116px;height:25px;background:#fff;border:1px solid #b9b9b9;border-radius:3px;box-sizing:border-box"></div>
<span class="t" style="left:439.3px;top:822.1px;font-size:13.5px;transform:scaleX(1.110);color:#1d1d1d;">1718359375.12</span>
<span class="t" style="left:558.3px;top:822.1px;font-size:13.5px;transform:scaleX(1.030);color:#1d1d1d;">ROS Elapsed:</span>
<div class="a" style="left:654px;top:815px;width:116px;height:25px;background:#fff;border:1px solid #b9b9b9;border-radius:3px;box-sizing:border-box"></div>
<span class="t" style="left:657.2px;top:822.1px;font-size:13.5px;transform:scaleX(1.162);color:#1d1d1d;">54.68</span>
<span class="t" style="left:775.6px;top:822.1px;font-size:13.5px;transform:scaleX(1.130);color:#1d1d1d;">Wall Time:</span>
<div class="a" style="left:853px;top:815px;width:116px;height:25px;background:#fff;border:1px solid #b9b9b9;border-radius:3px;box-sizing:border-box"></div>
<span class="t" style="left:856.3px;top:822.1px;font-size:13.5px;transform:scaleX(1.110);color:#1d1d1d;">1718359375.15</span>
<span class="t" style="left:974.6px;top:822.1px;font-size:13.5px;transform:scaleX(1.104);color:#1d1d1d;">Wall Elapsed:</span>
<div class="a" style="left:1071px;top:815px;width:116px;height:25px;background:#fff;border:1px solid #b9b9b9;border-radius:3px;box-sizing:border-box"></div>
<span class="t" style="left:1074.2px;top:822.1px;font-size:13.5px;transform:scaleX(1.162);color:#1d1d1d;">54.64</span>
<span class="t" style="left:1132.2px;top:852.3px;font-size:13.5px;transform:scaleX(1.149);color:#1d1d1d;">31 fps</span>
<div class="a" style="left:0px;top:851px;width:53px;height:29px;background:linear-gradient(#fbfbfb,#ededed);border:1px solid #b7b7b7;border-radius:3px;box-sizing:border-box"></div>
<span class="t" style="left:6.7px;top:857.1px;font-size:13.5px;transform:scaleX(1.112);color:#1d1d1d;">Reset</span>
<svg class="a" style="left:321px;top:95px;" width="17" height="16" viewBox="0 0 17 16"><rect x="0.5" y="0.5" width="15.5" height="15" rx="2" fill="#fbfbfb" stroke="#9a9a9a" stroke-width="1"/><circle cx="8.3" cy="7.8" r="5" fill="#c8102e"/><path d="M6.3 5.8L10.3 9.8M10.3 5.8L6.3 9.8" stroke="#f6c0c8" stroke-width="1.3"/></svg>
<svg class="a" style="left:1179px;top:94px;" width="17" height="16" viewBox="0 0 17 16"><rect x="0.5" y="0.5" width="15.5" height="15" rx="2" fill="#fbfbfb" stroke="#9a9a9a" stroke-width="1"/><circle cx="8.3" cy="7.8" r="5" fill="#c8102e"/><path d="M6.3 5.8L10.3 9.8M10.3 5.8L6.3 9.8" stroke="#f6c0c8" stroke-width="1.3"/></svg>
<svg class="a" style="left:1179px;top:789px;" width="17" height="16" viewBox="0 0 17 16"><rect x="0.5" y="0.5" width="15.5" height="15" rx="2" fill="#fbfbfb" stroke="#9a9a9a" stroke-width="1"/><circle cx="8.3" cy="7.8" r="5" fill="#c8102e"/><path d="M6.3 5.8L10.3 9.8M10.3 5.8L6.3 9.8" stroke="#f6c0c8" stroke-width="1.3"/></svg>
<svg class="a" style="left:930px;top:99px;" width="18" height="10" viewBox="0 0 18 10"><path d="M1 1.2L5.5 5L1 8.8Z" fill="#444"/><rect x="5" y="1" width="12" height="8" rx="3.5" fill="#444"/></svg>
<svg class="a" style="left:933px;top:159px;" width="8" height="5" viewBox="0 0 8 5"><path d="M0 0H8L4 4.2Z" fill="#555"/></svg>
<svg class="a" style="left:956px;top:329px;" width="5" height="8" viewBox="0 0 5 8"><path d="M0 0V8L4.3 4Z" fill="#555"/></svg>
<svg class="a" style="left:1043px;top:190px;" width="14" height="14" viewBox="0 0 14 14"><rect x="0.5" y="0.5" width="12.5" height="12.5" fill="#fff" stroke="#bdbdbd" stroke-width="1"/></svg>
<svg class="a" style="left:1043px;top:257px;" width="14" height="14" viewBox="0 0 14 14"><rect x="0.5" y="0.5" width="12.5" height="12.5" fill="#fff" stroke="#bdbdbd" stroke-width="1"/><path d="M3 6.8L5.6 10L10.3 3" fill="none" stroke="#111" stroke-width="1.7"/></svg>
<svg class="a" style="left:2px;top:790px;" width="16" height="16" viewBox="0 0 16 16"><circle cx="8" cy="8" r="6.6" fill="#fff" stroke="#444" stroke-width="1.6"/><path d="M7.6 3.8V8.5H11" fill="none" stroke="#222" stroke-width="1.4"/></svg>
<svg class="a" style="left:20px;top:820px;" width="16" height="15" viewBox="0 0 16 15"><defs><linearGradient id="pz" x1="0" x2="1"><stop offset="0" stop-color="#aaa"/><stop offset="0.5" stop-color="#f4f4f4"/><stop offset="1" stop-color="#999"/></linearGradient></defs><rect x="1.5" y="0.8" width="5.5" height="13.5" fill="url(#pz)" stroke="#888" stroke-width="0.8"/><rect x="8.8" y="0.8" width="5.5" height="13.5" fill="url(#pz)" stroke="#888" stroke-width="0.8"/></svg>
</body></html>
